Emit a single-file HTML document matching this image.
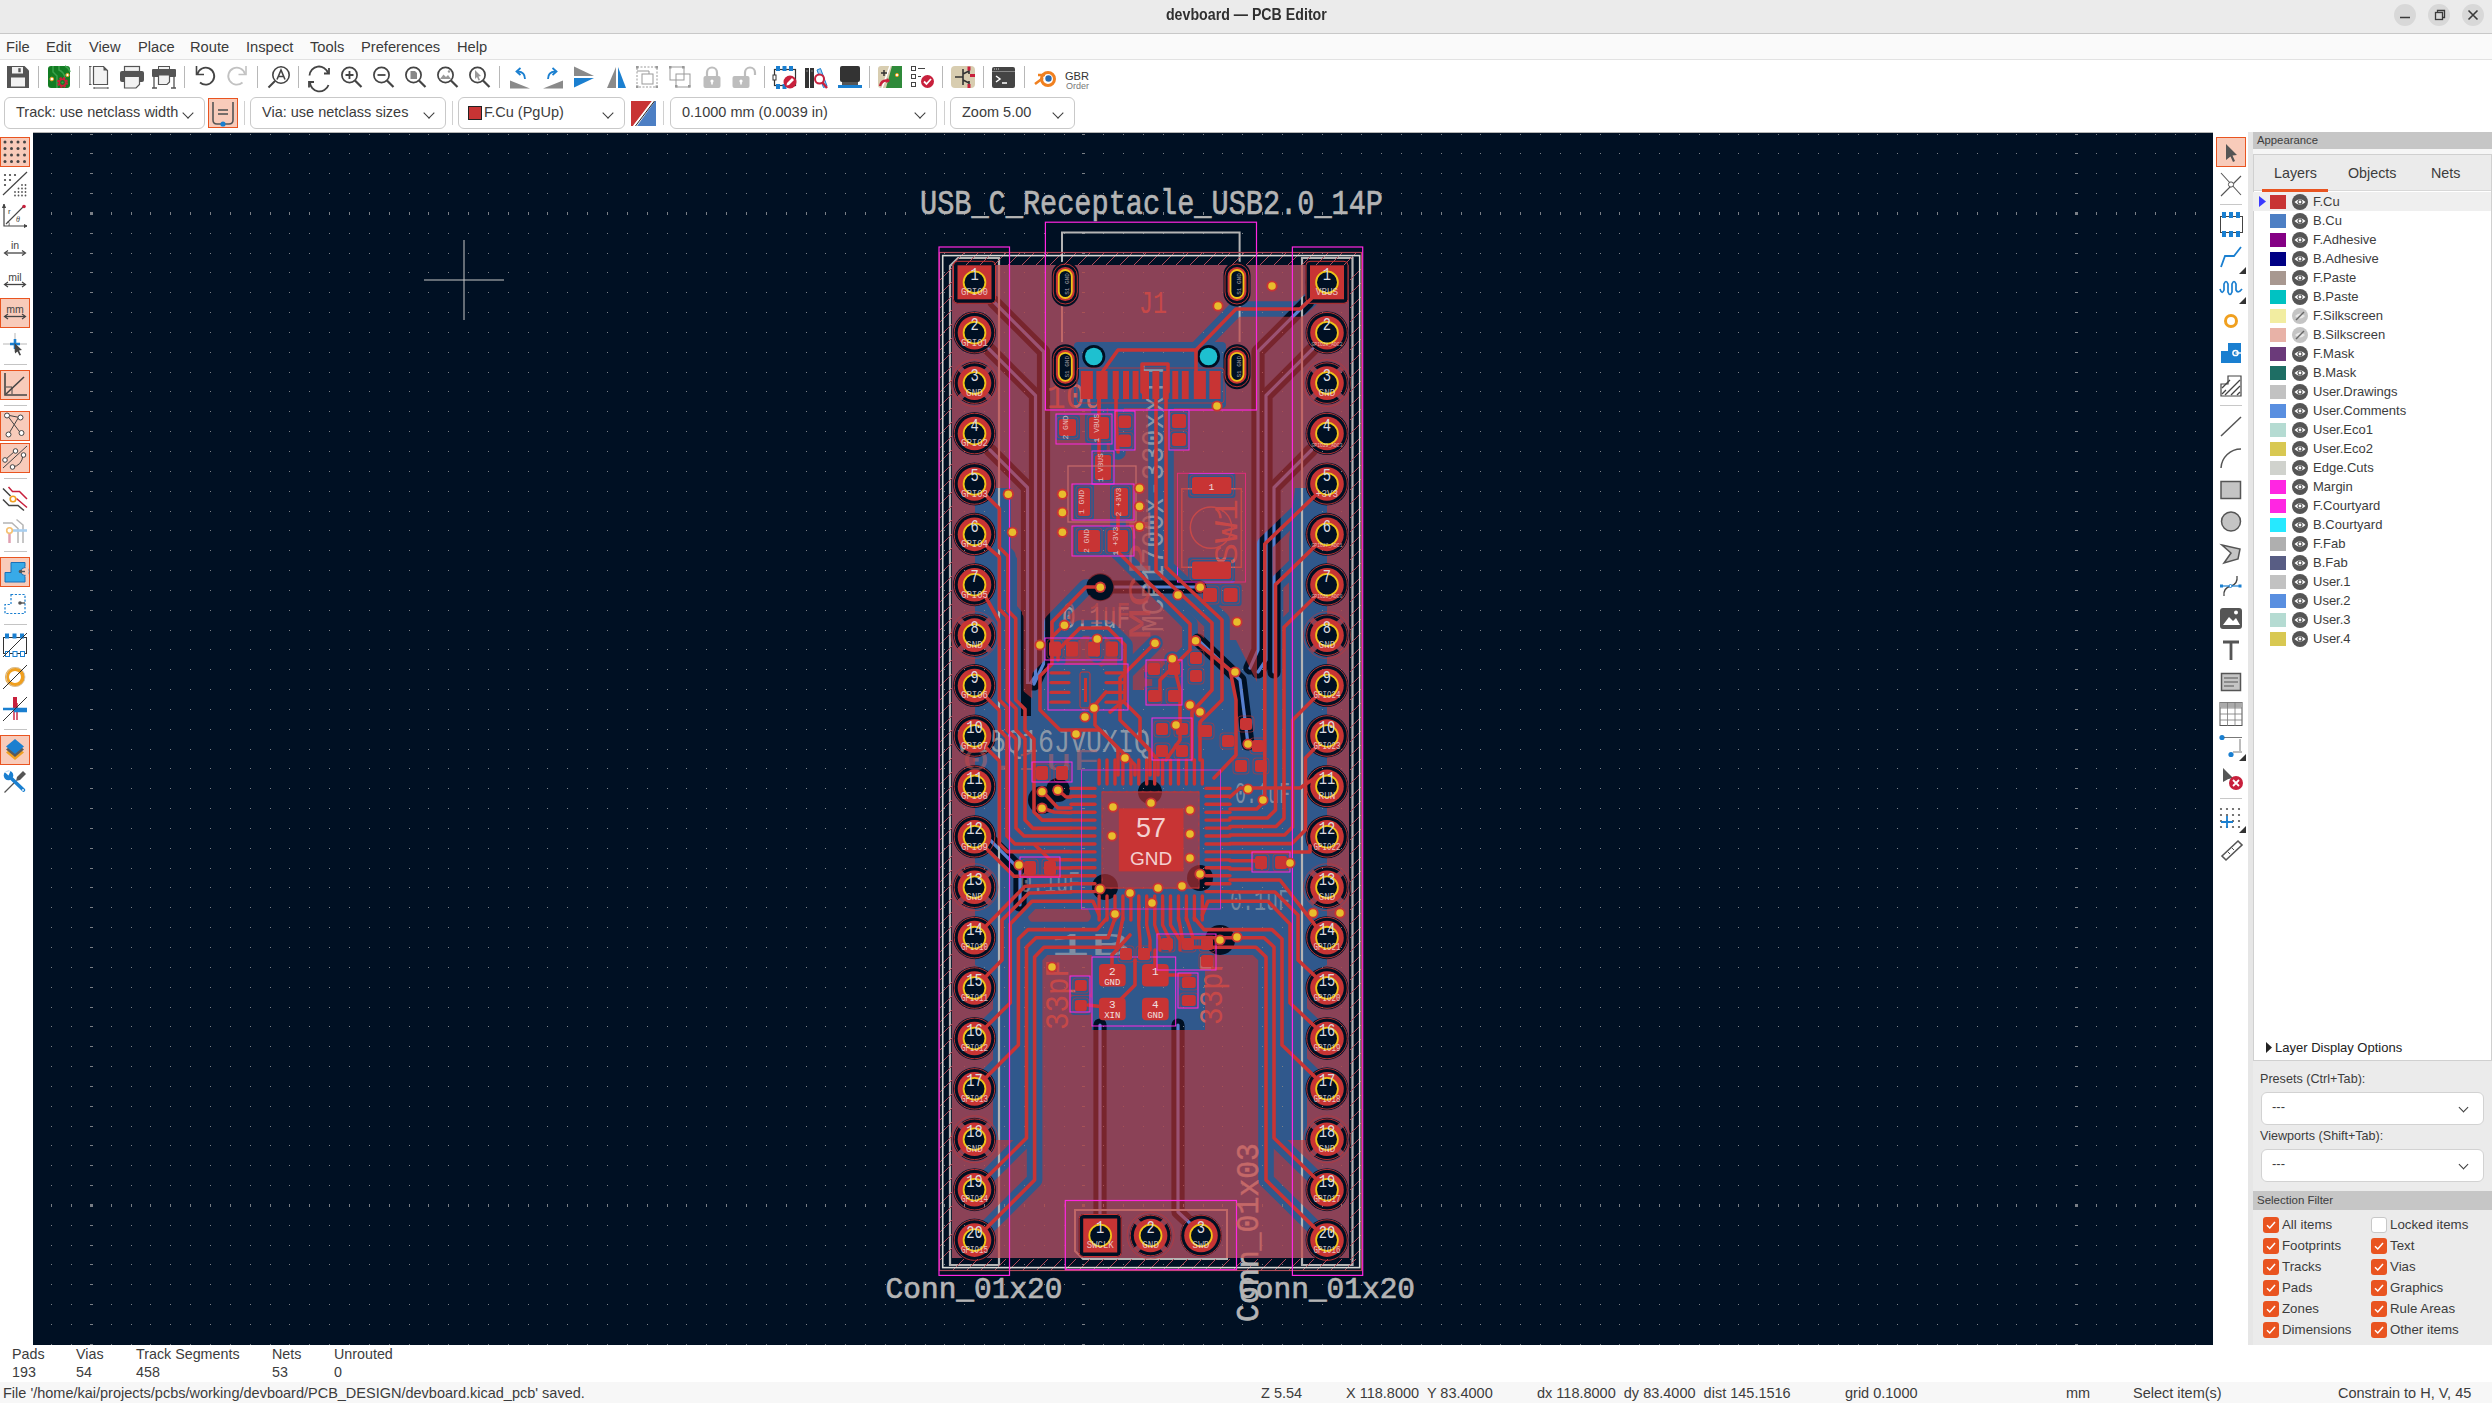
<!DOCTYPE html><html><head><meta charset="utf-8"><title>devboard — PCB Editor</title><style>
*{box-sizing:border-box;margin:0;padding:0}
html,body{width:2492px;height:1403px;overflow:hidden;background:#fff;font-family:"Liberation Sans",sans-serif;color:#3c3c3c}
.abs{position:absolute}
#title{left:0;top:0;width:2492px;height:34px;background:#ebebeb;border-bottom:1px solid #c8c8c8}
#title .t{left:0;width:2492px;top:6px;text-align:center;font-weight:bold;font-size:15.6px;color:#303030}
.wbtn{width:22px;height:22px;border-radius:50%;background:#d8d8d8;top:4px}
#menu{left:0;top:34px;width:2492px;height:26px;background:#fafafa;border-bottom:1px solid #e2e2e2}
#menu span{position:absolute;top:5px;font-size:14.7px;color:#3a3a3a}
#tb1{left:0;top:60px;width:2492px;height:36px;background:#fff}
#tb2{left:0;top:96px;width:2492px;height:36px;background:#fff}
.dd{position:absolute;top:97px;height:32px;border:1px solid #c9c9c9;border-radius:6px;background:#fff;font-size:14.5px;color:#3c3c3c}
.dd .tx{position:absolute;top:6px;white-space:pre}
.chev{position:absolute;top:11px;width:8px;height:8px;border-right:1.6px solid #3c3c3c;border-bottom:1.6px solid #3c3c3c;transform:rotate(45deg)}
.sep{position:absolute;width:1px;background:#d0d0d0}
.tbactive{position:absolute;background:#f8cbba;border:1px solid #e95420}
#canvas{left:33px;top:132px;width:2180px;height:1213px;background:#001023;overflow:hidden}
#ltb{left:0;top:132px;width:33px;height:1213px;background:#fff}
#rtb{left:2213px;top:132px;width:35px;height:1213px;background:#fff}
#sash{left:2248px;top:132px;width:5px;height:1213px;background:#e6e6e6}
#app{left:2253px;top:132px;width:239px;height:1213px;background:#ebebeb}
.hdr{position:absolute;left:0;width:239px;height:17px;background:#c6c6c6;font-size:11.3px;color:#3c3c3c;padding-left:4px;padding-top:2px}
.lrow{position:absolute;left:0;width:238px;height:19px;font-size:13px;color:#3c3c3c}
.lrow .sw{position:absolute;left:17px;top:3px;width:16px;height:14px}
.lrow .eye{position:absolute;left:39px;top:2px;width:16px;height:16px}
.lrow .lb{position:absolute;left:60px;top:2px;white-space:pre}
.cb{position:absolute;width:16px;height:16px;border-radius:3px;background:#e95420}
.cbl{position:absolute;font-size:13.3px;color:#3c3c3c;white-space:pre}
#msg{left:0;top:1345px;width:2492px;height:37px;background:#fff}
#msg span{position:absolute;font-size:14.3px;color:#3c3c3c;white-space:pre}
#status{left:0;top:1382px;width:2492px;height:21px;background:#f7f7f7}
#status span{position:absolute;top:3px;font-size:14.5px;color:#3c3c3c;white-space:pre}
</style></head><body><div id="title" class="abs"><div class="t abs"><span style="display:inline-block;transform:scaleX(0.91)">devboard — PCB Editor</span></div><div class="wbtn abs" style="left:2394px"></div><div class="wbtn abs" style="left:2428px"></div><div class="wbtn abs" style="left:2462px"></div><svg class="abs" style="left:0;top:0" width="2492" height="33"><line x1="2400" y1="17.5" x2="2410" y2="17.5" stroke="#3a3a3a" stroke-width="1.5"/><rect x="2435.5" y="12.5" width="7" height="7" fill="none" stroke="#3a3a3a" stroke-width="1.3"/><path d="M2437.5 12.5 V10.5 H2444.5 V17.5 H2442.5" fill="none" stroke="#3a3a3a" stroke-width="1.3"/><path d="M2468.5 10.5 L2477.5 19.5 M2477.5 10.5 L2468.5 19.5" stroke="#3a3a3a" stroke-width="1.6"/></svg></div><div id="menu" class="abs"><span style="left:6px">File</span><span style="left:46px">Edit</span><span style="left:89px">View</span><span style="left:138px">Place</span><span style="left:190px">Route</span><span style="left:246px">Inspect</span><span style="left:310px">Tools</span><span style="left:361px">Preferences</span><span style="left:457px">Help</span></div><div id="tb1" class="abs"></div><svg class="abs" style="left:0;top:60px" width="1100" height="36"><g transform="translate(7 6) scale(1.0)"><path d="M0 0 H17.5 L22 4.5 V22 H0 Z" fill="#545454"/><rect x="5" y="1" width="11" height="6.5" fill="#f2f2f2"/><rect x="11.3" y="2.2" width="2.4" height="4" fill="#545454"/><rect x="4" y="11.5" width="14" height="9" fill="#f2f2f2"/></g><line x1="38.5" y1="6" x2="38.5" y2="28" stroke="#b8b8b8" stroke-width="1"/><g transform="translate(48 6) scale(1.0)"><rect x="0" y="0" width="22" height="22" rx="3" fill="#127c22"/><path d="M5 0 V6 L9 10 V22 M11 0 V4 Q16 6 17 12 M17 0 Q21 2 22 6" fill="none" stroke="#3aa04a" stroke-width="1.5"/><circle cx="3.8" cy="13" r="1.8" fill="#fff" stroke="#f0a020" stroke-width="1"/><circle cx="19.5" cy="9" r="1.6" fill="#fff" stroke="#f0a020" stroke-width="1"/><circle cx="14.5" cy="16.5" r="4.2" fill="none" stroke="#cc1f3c" stroke-width="2.6" stroke-dasharray="2 1.3"/><circle cx="14.5" cy="16.5" r="3.2" fill="none" stroke="#cc1f3c" stroke-width="1.6"/><circle cx="14.5" cy="16.5" r="1.1" fill="#3aa04a"/></g><line x1="79.5" y1="6" x2="79.5" y2="28" stroke="#b8b8b8" stroke-width="1"/><g transform="translate(89 6) scale(1.0)"><path d="M4.5 0.5 H14.5 L18.5 4.5 V18.5 H4.5 Z" fill="#f2f2f2" stroke="#545454" stroke-width="1.2"/><path d="M14.5 0.5 V4.5 H18.5" fill="#545454"/><path d="M1 0 V19 M0 0.5 H2.5 M0 18.5 H2.5 M5 22 H19 M5 21 V23 M19 21 V23" stroke="#545454" stroke-width="1"/></g><g transform="translate(120 6) scale(1.0)"><rect x="4.5" y="0.5" width="15" height="5" fill="#f2f2f2" stroke="#545454" stroke-width="1.2"/><rect x="0" y="5" width="24" height="11" rx="2" fill="#545454"/><path d="M4.5 10.5 H19.5 V18.5 L16 22 H4.5 Z" fill="#f2f2f2" stroke="#545454" stroke-width="1.2"/></g><g transform="translate(152 6) scale(1.0)"><rect x="6.5" y="0.5" width="11" height="3" fill="#f2f2f2" stroke="#545454" stroke-width="1"/><rect x="0" y="3" width="24" height="8" rx="1" fill="#545454"/><path d="M6.5 9 H17.5 V16 L15 18.5 H6.5 Z" fill="#f2f2f2" stroke="#545454" stroke-width="1.2"/><path d="M2 11 V22 M22 11 V22 M0 22 H5 M19 22 H24" stroke="#545454" stroke-width="1.3"/></g><line x1="184.5" y1="6" x2="184.5" y2="28" stroke="#b8b8b8" stroke-width="1"/><g transform="translate(195 5) scale(1.0)"><path d="M2.5 9 A8.5 8.5 0 1 1 5 17.5" fill="none" stroke="#444" stroke-width="1.8"/><path d="M1.5 1 V9.5 H9" fill="none" stroke="#444" stroke-width="1.6"/></g><g transform="translate(228 5) scale(1.0)"><path d="M17 9 A8.5 8.5 0 1 0 14.5 17.5" fill="none" stroke="#c2c2c2" stroke-width="1.8"/><path d="M18 1 V9.5 H10.5" fill="none" stroke="#c2c2c2" stroke-width="1.6"/></g><line x1="257.5" y1="6" x2="257.5" y2="28" stroke="#b8b8b8" stroke-width="1"/><g transform="translate(267 6) scale(1.0)"><circle cx="14" cy="9" r="8.2" fill="none" stroke="#444" stroke-width="1.6"/><path d="M10 13.5 L14 4 L18 13.5 M11.5 10.5 H16.5" fill="none" stroke="#444" stroke-width="1.6"/><line x1="8" y1="15" x2="1.5" y2="21.5" stroke="#444" stroke-width="2"/></g><line x1="298.5" y1="6" x2="298.5" y2="28" stroke="#b8b8b8" stroke-width="1"/><g transform="translate(308 6) scale(1.0)"><path d="M1.5 9.5 A9.5 9.5 0 0 1 20 7" fill="none" stroke="#444" stroke-width="1.8"/><path d="M20.5 19 A9.5 9.5 0 0 1 2 16" fill="none" stroke="#444" stroke-width="1.8"/><path d="M16 7.5 H21 V2" fill="none" stroke="#444" stroke-width="1.8"/><path d="M6 16 H1 V21.5" fill="none" stroke="#444" stroke-width="1.8"/></g><g transform="translate(340 6) scale(1.0)"><circle cx="9.5" cy="9" r="7.6" fill="none" stroke="#444" stroke-width="1.7"/><line x1="15" y1="14.5" x2="21.5" y2="21" stroke="#444" stroke-width="2.2"/><path d="M9.5 5 V13 M5.5 9 H13.5" stroke="#444" stroke-width="1.8"/></g><g transform="translate(372 6) scale(1.0)"><circle cx="9.5" cy="9" r="7.6" fill="none" stroke="#444" stroke-width="1.7"/><line x1="15" y1="14.5" x2="21.5" y2="21" stroke="#444" stroke-width="2.2"/><path d="M5.5 9 H13.5" stroke="#444" stroke-width="1.8"/></g><g transform="translate(404 6) scale(1.0)"><circle cx="9.5" cy="9" r="7.6" fill="none" stroke="#444" stroke-width="1.7"/><line x1="15" y1="14.5" x2="21.5" y2="21" stroke="#444" stroke-width="2.2"/><path d="M6.5 5 H11 L13 7 V13 H6.5 Z" fill="#888"/></g><g transform="translate(436 6) scale(1.0)"><circle cx="9.5" cy="9" r="7.6" fill="none" stroke="#444" stroke-width="1.7"/><line x1="15" y1="14.5" x2="21.5" y2="21" stroke="#444" stroke-width="2.2"/><path d="M4 13 L7.5 8.5 L10 11 L12 9 L15 13 Z" fill="#999"/><circle cx="13" cy="5.5" r="1.2" fill="#999"/></g><g transform="translate(468 6) scale(1.0)"><circle cx="9.5" cy="9" r="7.6" fill="none" stroke="#444" stroke-width="1.7"/><line x1="15" y1="14.5" x2="21.5" y2="21" stroke="#444" stroke-width="2.2"/><path d="M7 4 L13 10 L10.5 10.5 L12 14 L10.5 14.5 L9 11 L7 13 Z" fill="#999"/></g><line x1="499.5" y1="6" x2="499.5" y2="28" stroke="#b8b8b8" stroke-width="1"/><g transform="translate(510 6) scale(1.0)"><path d="M0 14.5 V22.5 H20 Z" fill="#8a8a8a"/><path d="M15 13 Q15 6 8 5.5" fill="none" stroke="#1a7fd0" stroke-width="1.8"/><path d="M10.5 2 L6.5 5.5 L10.5 9" fill="none" stroke="#1a7fd0" stroke-width="1.8"/></g><g transform="translate(543 6) scale(1.0)"><path d="M20 14.5 V22.5 H0 Z" fill="#8a8a8a"/><path d="M5 13 Q5 6 12 5.5" fill="none" stroke="#1a7fd0" stroke-width="1.8"/><path d="M9.5 2 L13.5 5.5 L9.5 9" fill="none" stroke="#1a7fd0" stroke-width="1.8"/></g><g transform="translate(574 6) scale(1.0)"><path d="M0 0.5 V10 H20 Z" fill="#8a8a8a"/><path d="M0 12 H20 L0 21.5 Z" fill="#1a7fd0"/></g><g transform="translate(606 6) scale(1.0)"><path d="M10 1 V22 H1 Z" fill="#8a8a8a"/><path d="M12 1 L20 22 H12 Z" fill="#1a7fd0"/></g><g transform="translate(636 6) scale(1.0)"><rect x="1" y="1" width="20" height="20" fill="none" stroke="#999" stroke-width="1" stroke-dasharray="2 1.5"/><rect x="0" y="0" width="2.5" height="2.5" fill="#999"/><rect x="19.5" y="0" width="2.5" height="2.5" fill="#999"/><rect x="0" y="19.5" width="2.5" height="2.5" fill="#999"/><rect x="19.5" y="19.5" width="2.5" height="2.5" fill="#999"/><rect x="6" y="8" width="11" height="10" fill="none" stroke="#999" stroke-width="1"/><path d="M1 5 H13 V8" fill="none" stroke="#999" stroke-width="1"/></g><g transform="translate(669 6) scale(1.0)"><rect x="1" y="1" width="14" height="13" fill="none" stroke="#999" stroke-width="1"/><rect x="7" y="8" width="14" height="13" fill="none" stroke="#999" stroke-width="1"/><rect x="0" y="0" width="2.5" height="2.5" fill="#999"/><rect x="13" y="0" width="2.5" height="2.5" fill="#999"/><rect x="19" y="19" width="2.5" height="2.5" fill="#999"/><rect x="6" y="19" width="2.5" height="2.5" fill="#999"/></g><g transform="translate(703 6) scale(1.0)"><path d="M4 10 V6.5 A5 5 0 0 1 14 6.5 V10" fill="none" stroke="#bdbdbd" stroke-width="2.2"/><rect x="0.5" y="10" width="17" height="12" rx="2" fill="#bdbdbd"/><circle cx="9" cy="15" r="1.6" fill="#fff"/><rect x="8.2" y="15" width="1.6" height="3.5" fill="#fff"/></g><g transform="translate(732 6) scale(1.0)"><path d="M13 10 V6.5 A5 5 0 0 1 23 6.5 V9" fill="none" stroke="#bdbdbd" stroke-width="2.2"/><rect x="0.5" y="10" width="17" height="12" rx="2" fill="#bdbdbd"/><circle cx="9" cy="15" r="1.6" fill="#fff"/><rect x="8.2" y="15" width="1.6" height="3.5" fill="#fff"/></g><line x1="764.5" y1="6" x2="764.5" y2="28" stroke="#b8b8b8" stroke-width="1"/><g transform="translate(773 6) scale(1.0)"><rect x="1.5" y="3.5" width="21" height="16" fill="none" stroke="#333" stroke-width="1.2"/><rect x="3" y="0" width="4" height="5" fill="#1a7fd0"/><rect x="9.5" y="0" width="4" height="5" fill="#1a7fd0"/><rect x="16" y="0" width="4" height="5" fill="#1a7fd0"/><rect x="3" y="18" width="4" height="5" fill="#1a7fd0"/><rect x="9.5" y="18" width="4" height="5" fill="#1a7fd0"/><rect x="0" y="9" width="3" height="5" fill="#fff" stroke="#333" stroke-width="1"/><circle cx="17" cy="16" r="6.5" fill="#c8203c"/><path d="M13.5 19.5 L14 17 L19 12 L21 14 L16 19 Z" fill="#fff"/></g><g transform="translate(805 6) scale(1.0)"><rect x="0" y="2" width="4" height="20" fill="#333"/><rect x="5" y="2" width="4" height="20" fill="#333"/><path d="M12 4 L15.5 2.5 L22 20 L18.5 21.5 Z" fill="#9fd0f0" stroke="#1a7fd0" stroke-width="1"/><circle cx="14.5" cy="13" r="4.5" fill="#fff" stroke="#c8203c" stroke-width="2"/><line x1="17.5" y1="16.5" x2="22" y2="22" stroke="#c8203c" stroke-width="2.4"/><path d="M1 5 H3 M6 5 H8" stroke="#888" stroke-width="1"/></g><g transform="translate(838 6) scale(1.0)"><rect x="2" y="0" width="20" height="16" rx="2" fill="#333"/><rect x="4" y="16" width="16" height="3" fill="#555"/><rect x="0" y="19" width="24" height="3" fill="#1a7fd0"/></g><line x1="869.5" y1="6" x2="869.5" y2="28" stroke="#b8b8b8" stroke-width="1"/><g transform="translate(878 6) scale(1.0)"><rect x="0" y="0" width="24" height="22" rx="3" fill="#d8cdb0"/><path d="M14 0 L24 0 V22 H8 Z" fill="#2f8a3a"/><path d="M12 0 L4 22" stroke="#fff" stroke-width="1.5"/><path d="M6 4 V10 M3 7 H9" stroke="#333" stroke-width="1.5"/><circle cx="19" cy="9" r="1.6" fill="#fff" stroke="#f0a020"/><path d="M2 20 Q4 13 11 15" fill="none" stroke="#c8203c" stroke-width="2.4"/><path d="M9 12 L12 15 L8 17" fill="#c8203c"/></g><g transform="translate(911 6) scale(1.0)"><rect x="0.5" y="0.5" width="4" height="4" fill="none" stroke="#444"/><rect x="0.5" y="8.5" width="4" height="4" fill="none" stroke="#444"/><rect x="0.5" y="16.5" width="4" height="4" fill="none" stroke="#444"/><path d="M7 2.5 H14 M7 10.5 H10" stroke="#444" stroke-width="1.2"/><circle cx="16.5" cy="15.5" r="6.5" fill="#c8203c"/><path d="M13 15.5 L15.5 18 L20 13" fill="none" stroke="#fff" stroke-width="1.8"/></g><line x1="942.5" y1="6" x2="942.5" y2="28" stroke="#b8b8b8" stroke-width="1"/><g transform="translate(951 6) scale(1.0)"><rect x="0" y="0" width="24" height="22" rx="4" fill="#d8cdb0"/><path d="M12 3 V19 M12 8 L18 5 M12 14 L18 17 M4 11 H12 M18 2 V8 M18 15 V21" stroke="#333" stroke-width="1.6"/><rect x="16.5" y="0.5" width="3" height="4" fill="#c8203c"/><rect x="19" y="8" width="5" height="3" fill="#c8203c"/><rect x="16.5" y="18" width="3" height="4" fill="#c8203c"/></g><line x1="983.5" y1="6" x2="983.5" y2="28" stroke="#b8b8b8" stroke-width="1"/><g transform="translate(992 6) scale(1.0)"><rect x="0" y="1" width="23" height="21" rx="2" fill="#444"/><rect x="0" y="5" width="23" height="1" fill="#888"/><path d="M2 3 H7" stroke="#ccc" stroke-width="1" stroke-dasharray="1 1"/><path d="M4 10 L8 13 L4 16 M10 17 H15" fill="none" stroke="#fff" stroke-width="1.5"/></g><line x1="1024.5" y1="6" x2="1024.5" y2="28" stroke="#b8b8b8" stroke-width="1"/><g transform="translate(1034 6) scale(1.0)"><circle cx="14" cy="13" r="6.5" fill="none" stroke="#f08020" stroke-width="3"/><circle cx="14.5" cy="12.5" r="3.2" fill="#2a6ab0"/><path d="M1 18 L9 12 M4 9 H11" stroke="#f08020" stroke-width="2.6"/></g><text x="1065" y="19.8" font-family="Liberation Sans" font-size="11.2" fill="#333" textLength="24" lengthAdjust="spacingAndGlyphs">GBR</text><text x="1066" y="29" font-family="Liberation Sans" font-size="8.6" fill="#777" textLength="23" lengthAdjust="spacingAndGlyphs">Order</text></svg><div id="tb2" class="abs"></div><div class="dd" style="left:4px;width:201px"><span class="tx" style="left:11px">Track: use netclass width</span><span class="chev" style="left:179px"></span></div><div class="tbactive" style="left:208px;top:98px;width:30px;height:30px"></div><svg class="abs" style="left:208px;top:98px" width="30" height="30"><path d="M5 4 V22 Q5 26 9 26 H21 Q25 26 25 22 V4" fill="none" stroke="#555" stroke-width="1.6"/><line x1="10" y1="12" x2="20" y2="12" stroke="#555" stroke-width="1.6"/><line x1="10" y1="16" x2="20" y2="16" stroke="#555" stroke-width="1.6"/><circle cx="15" cy="26" r="2.6" fill="#1a7fd0"/></svg><div class="sep" style="left:244px;top:101px;height:24px"></div><div class="dd" style="left:250px;width:196px"><span class="tx" style="left:11px">Via: use netclass sizes</span><span class="chev" style="left:174px"></span></div><div class="sep" style="left:452px;top:101px;height:24px"></div><div class="dd" style="left:458px;width:167px"><span style="position:absolute;left:9px;top:8px;width:14px;height:14px;background:#c83434;border:1px solid #222"></span><span class="tx" style="left:25px">F.Cu (PgUp)</span><span class="chev" style="left:145px"></span></div><svg class="abs" style="left:631px;top:101px" width="25" height="25"><polygon points="0,0 22,0 2,25 0,25" fill="#c83434"/><polygon points="25,0 25,25 6,25 24,0" fill="#4d7fc4"/><line x1="22" y1="0" x2="3" y2="25" stroke="#fff" stroke-width="2"/><line x1="23.5" y1="0" x2="4.5" y2="25" stroke="#222" stroke-width="1"/></svg><div class="sep" style="left:663px;top:101px;height:24px"></div><div class="dd" style="left:670px;width:267px"><span class="tx" style="left:11px">0.1000 mm (0.0039 in)</span><span class="chev" style="left:245px"></span></div><div class="sep" style="left:944px;top:101px;height:24px"></div><div class="dd" style="left:950px;width:125px"><span class="tx" style="left:11px">Zoom 5.00</span><span class="chev" style="left:103px"></span></div><div id="canvas" class="abs"><svg width="2492" height="1403" style="position:absolute;left:-33px;top:-132px"><g id="grid" shape-rendering="crispEdges"><path d="M51.20 134.04H2213M51.20 153.88H2213M51.20 173.72H2213M51.20 193.56H2213M51.20 213.40H2213M51.20 233.24H2213M51.20 253.08H2213M51.20 272.92H2213M51.20 292.76H2213M51.20 312.60H2213M51.20 332.44H2213M51.20 352.28H2213M51.20 372.12H2213M51.20 391.96H2213M51.20 411.80H2213M51.20 431.64H2213M51.20 451.48H2213M51.20 471.32H2213M51.20 491.16H2213M51.20 511.00H2213M51.20 530.84H2213M51.20 550.68H2213M51.20 570.52H2213M51.20 590.36H2213M51.20 610.20H2213M51.20 630.04H2213M51.20 649.88H2213M51.20 669.72H2213M51.20 689.56H2213M51.20 709.40H2213M51.20 729.24H2213M51.20 749.08H2213M51.20 768.92H2213M51.20 788.76H2213M51.20 808.60H2213M51.20 828.44H2213M51.20 848.28H2213M51.20 868.12H2213M51.20 887.96H2213M51.20 907.80H2213M51.20 927.64H2213M51.20 947.48H2213M51.20 967.32H2213M51.20 987.16H2213M51.20 1007.00H2213M51.20 1026.84H2213M51.20 1046.68H2213M51.20 1066.52H2213M51.20 1086.36H2213M51.20 1106.20H2213M51.20 1126.04H2213M51.20 1145.88H2213M51.20 1165.72H2213M51.20 1185.56H2213M51.20 1205.40H2213M51.20 1225.24H2213M51.20 1245.08H2213M51.20 1264.92H2213M51.20 1284.76H2213M51.20 1304.60H2213M51.20 1324.44H2213M51.20 1344.28H2213" stroke="#7a7f86" stroke-width="1" stroke-dasharray="1 18.85" fill="none"/><path d="M89.90 134.04h3M89.90 153.88h3M89.90 173.72h3M89.90 193.56h3M89.90 213.40h3M89.90 233.24h3M89.90 253.08h3M89.90 272.92h3M89.90 292.76h3M89.90 312.60h3M89.90 332.44h3M89.90 352.28h3M89.90 372.12h3M89.90 391.96h3M89.90 411.80h3M89.90 431.64h3M89.90 451.48h3M89.90 471.32h3M89.90 491.16h3M89.90 511.00h3M89.90 530.84h3M89.90 550.68h3M89.90 570.52h3M89.90 590.36h3M89.90 610.20h3M89.90 630.04h3M89.90 649.88h3M89.90 669.72h3M89.90 689.56h3M89.90 709.40h3M89.90 729.24h3M89.90 749.08h3M89.90 768.92h3M89.90 788.76h3M89.90 808.60h3M89.90 828.44h3M89.90 848.28h3M89.90 868.12h3M89.90 887.96h3M89.90 907.80h3M89.90 927.64h3M89.90 947.48h3M89.90 967.32h3M89.90 987.16h3M89.90 1007.00h3M89.90 1026.84h3M89.90 1046.68h3M89.90 1066.52h3M89.90 1086.36h3M89.90 1106.20h3M89.90 1126.04h3M89.90 1145.88h3M89.90 1165.72h3M89.90 1185.56h3M89.90 1205.40h3M89.90 1225.24h3M89.90 1245.08h3M89.90 1264.92h3M89.90 1284.76h3M89.90 1304.60h3M89.90 1324.44h3M89.90 1344.28h3M1082.40 134.04h3M1082.40 153.88h3M1082.40 173.72h3M1082.40 193.56h3M1082.40 213.40h3M1082.40 233.24h3M1082.40 253.08h3M1082.40 272.92h3M1082.40 292.76h3M1082.40 312.60h3M1082.40 332.44h3M1082.40 352.28h3M1082.40 372.12h3M1082.40 391.96h3M1082.40 411.80h3M1082.40 431.64h3M1082.40 451.48h3M1082.40 471.32h3M1082.40 491.16h3M1082.40 511.00h3M1082.40 530.84h3M1082.40 550.68h3M1082.40 570.52h3M1082.40 590.36h3M1082.40 610.20h3M1082.40 630.04h3M1082.40 649.88h3M1082.40 669.72h3M1082.40 689.56h3M1082.40 709.40h3M1082.40 729.24h3M1082.40 749.08h3M1082.40 768.92h3M1082.40 788.76h3M1082.40 808.60h3M1082.40 828.44h3M1082.40 848.28h3M1082.40 868.12h3M1082.40 887.96h3M1082.40 907.80h3M1082.40 927.64h3M1082.40 947.48h3M1082.40 967.32h3M1082.40 987.16h3M1082.40 1007.00h3M1082.40 1026.84h3M1082.40 1046.68h3M1082.40 1066.52h3M1082.40 1086.36h3M1082.40 1106.20h3M1082.40 1126.04h3M1082.40 1145.88h3M1082.40 1165.72h3M1082.40 1185.56h3M1082.40 1205.40h3M1082.40 1225.24h3M1082.40 1245.08h3M1082.40 1264.92h3M1082.40 1284.76h3M1082.40 1304.60h3M1082.40 1324.44h3M1082.40 1344.28h3M2074.90 134.04h3M2074.90 153.88h3M2074.90 173.72h3M2074.90 193.56h3M2074.90 213.40h3M2074.90 233.24h3M2074.90 253.08h3M2074.90 272.92h3M2074.90 292.76h3M2074.90 312.60h3M2074.90 332.44h3M2074.90 352.28h3M2074.90 372.12h3M2074.90 391.96h3M2074.90 411.80h3M2074.90 431.64h3M2074.90 451.48h3M2074.90 471.32h3M2074.90 491.16h3M2074.90 511.00h3M2074.90 530.84h3M2074.90 550.68h3M2074.90 570.52h3M2074.90 590.36h3M2074.90 610.20h3M2074.90 630.04h3M2074.90 649.88h3M2074.90 669.72h3M2074.90 689.56h3M2074.90 709.40h3M2074.90 729.24h3M2074.90 749.08h3M2074.90 768.92h3M2074.90 788.76h3M2074.90 808.60h3M2074.90 828.44h3M2074.90 848.28h3M2074.90 868.12h3M2074.90 887.96h3M2074.90 907.80h3M2074.90 927.64h3M2074.90 947.48h3M2074.90 967.32h3M2074.90 987.16h3M2074.90 1007.00h3M2074.90 1026.84h3M2074.90 1046.68h3M2074.90 1066.52h3M2074.90 1086.36h3M2074.90 1106.20h3M2074.90 1126.04h3M2074.90 1145.88h3M2074.90 1165.72h3M2074.90 1185.56h3M2074.90 1205.40h3M2074.90 1225.24h3M2074.90 1245.08h3M2074.90 1264.92h3M2074.90 1284.76h3M2074.90 1304.60h3M2074.90 1324.44h3M2074.90 1344.28h3" stroke="#7a7f86" stroke-width="1" fill="none"/><path d="M51.70 211.90v3M51.70 1203.90v3M71.55 211.90v3M71.55 1203.90v3M91.40 211.90v3M91.40 1203.90v3M111.25 211.90v3M111.25 1203.90v3M131.10 211.90v3M131.10 1203.90v3M150.95 211.90v3M150.95 1203.90v3M170.80 211.90v3M170.80 1203.90v3M190.65 211.90v3M190.65 1203.90v3M210.50 211.90v3M210.50 1203.90v3M230.35 211.90v3M230.35 1203.90v3M250.20 211.90v3M250.20 1203.90v3M270.05 211.90v3M270.05 1203.90v3M289.90 211.90v3M289.90 1203.90v3M309.75 211.90v3M309.75 1203.90v3M329.60 211.90v3M329.60 1203.90v3M349.45 211.90v3M349.45 1203.90v3M369.30 211.90v3M369.30 1203.90v3M389.15 211.90v3M389.15 1203.90v3M409.00 211.90v3M409.00 1203.90v3M428.85 211.90v3M428.85 1203.90v3M448.70 211.90v3M448.70 1203.90v3M468.55 211.90v3M468.55 1203.90v3M488.40 211.90v3M488.40 1203.90v3M508.25 211.90v3M508.25 1203.90v3M528.10 211.90v3M528.10 1203.90v3M547.95 211.90v3M547.95 1203.90v3M567.80 211.90v3M567.80 1203.90v3M587.65 211.90v3M587.65 1203.90v3M607.50 211.90v3M607.50 1203.90v3M627.35 211.90v3M627.35 1203.90v3M647.20 211.90v3M647.20 1203.90v3M667.05 211.90v3M667.05 1203.90v3M686.90 211.90v3M686.90 1203.90v3M706.75 211.90v3M706.75 1203.90v3M726.60 211.90v3M726.60 1203.90v3M746.45 211.90v3M746.45 1203.90v3M766.30 211.90v3M766.30 1203.90v3M786.15 211.90v3M786.15 1203.90v3M806.00 211.90v3M806.00 1203.90v3M825.85 211.90v3M825.85 1203.90v3M845.70 211.90v3M845.70 1203.90v3M865.55 211.90v3M865.55 1203.90v3M885.40 211.90v3M885.40 1203.90v3M905.25 211.90v3M905.25 1203.90v3M925.10 211.90v3M925.10 1203.90v3M944.95 211.90v3M944.95 1203.90v3M964.80 211.90v3M964.80 1203.90v3M984.65 211.90v3M984.65 1203.90v3M1004.50 211.90v3M1004.50 1203.90v3M1024.35 211.90v3M1024.35 1203.90v3M1044.20 211.90v3M1044.20 1203.90v3M1064.05 211.90v3M1064.05 1203.90v3M1083.90 211.90v3M1083.90 1203.90v3M1103.75 211.90v3M1103.75 1203.90v3M1123.60 211.90v3M1123.60 1203.90v3M1143.45 211.90v3M1143.45 1203.90v3M1163.30 211.90v3M1163.30 1203.90v3M1183.15 211.90v3M1183.15 1203.90v3M1203.00 211.90v3M1203.00 1203.90v3M1222.85 211.90v3M1222.85 1203.90v3M1242.70 211.90v3M1242.70 1203.90v3M1262.55 211.90v3M1262.55 1203.90v3M1282.40 211.90v3M1282.40 1203.90v3M1302.25 211.90v3M1302.25 1203.90v3M1322.10 211.90v3M1322.10 1203.90v3M1341.95 211.90v3M1341.95 1203.90v3M1361.80 211.90v3M1361.80 1203.90v3M1381.65 211.90v3M1381.65 1203.90v3M1401.50 211.90v3M1401.50 1203.90v3M1421.35 211.90v3M1421.35 1203.90v3M1441.20 211.90v3M1441.20 1203.90v3M1461.05 211.90v3M1461.05 1203.90v3M1480.90 211.90v3M1480.90 1203.90v3M1500.75 211.90v3M1500.75 1203.90v3M1520.60 211.90v3M1520.60 1203.90v3M1540.45 211.90v3M1540.45 1203.90v3M1560.30 211.90v3M1560.30 1203.90v3M1580.15 211.90v3M1580.15 1203.90v3M1600.00 211.90v3M1600.00 1203.90v3M1619.85 211.90v3M1619.85 1203.90v3M1639.70 211.90v3M1639.70 1203.90v3M1659.55 211.90v3M1659.55 1203.90v3M1679.40 211.90v3M1679.40 1203.90v3M1699.25 211.90v3M1699.25 1203.90v3M1719.10 211.90v3M1719.10 1203.90v3M1738.95 211.90v3M1738.95 1203.90v3M1758.80 211.90v3M1758.80 1203.90v3M1778.65 211.90v3M1778.65 1203.90v3M1798.50 211.90v3M1798.50 1203.90v3M1818.35 211.90v3M1818.35 1203.90v3M1838.20 211.90v3M1838.20 1203.90v3M1858.05 211.90v3M1858.05 1203.90v3M1877.90 211.90v3M1877.90 1203.90v3M1897.75 211.90v3M1897.75 1203.90v3M1917.60 211.90v3M1917.60 1203.90v3M1937.45 211.90v3M1937.45 1203.90v3M1957.30 211.90v3M1957.30 1203.90v3M1977.15 211.90v3M1977.15 1203.90v3M1997.00 211.90v3M1997.00 1203.90v3M2016.85 211.90v3M2016.85 1203.90v3M2036.70 211.90v3M2036.70 1203.90v3M2056.55 211.90v3M2056.55 1203.90v3M2076.40 211.90v3M2076.40 1203.90v3M2096.25 211.90v3M2096.25 1203.90v3M2116.10 211.90v3M2116.10 1203.90v3M2135.95 211.90v3M2135.95 1203.90v3M2155.80 211.90v3M2155.80 1203.90v3M2175.65 211.90v3M2175.65 1203.90v3M2195.50 211.90v3M2195.50 1203.90v3" stroke="#7a7f86" stroke-width="1" fill="none"/><path d="M89.90 211.90h3v3h-3zM89.90 1203.90h3v3h-3zM1082.40 211.90h3v3h-3zM1082.40 1203.90h3v3h-3zM2074.90 211.90h3v3h-3zM2074.90 1203.90h3v3h-3z" fill="#7a7f86"/></g><path d="M952 265 H1349 V1258 H952 Z" fill="#30588c"/><path d="M994.0 302.0 L1043.5 351.5 L1043.5 664.0 L1034.0 684.0" stroke="#001023" stroke-width="13.2" fill="none" stroke-linejoin="round" stroke-linecap="round"/><path d="M989.0 349.0 L1035.5 395.5 L1035.5 676.0 L1030.0 684.0" stroke="#001023" stroke-width="13.2" fill="none" stroke-linejoin="round" stroke-linecap="round"/><path d="M990.0 450.0 L1027.5 487.5 L1027.5 684.0" stroke="#001023" stroke-width="13.2" fill="none" stroke-linejoin="round" stroke-linecap="round"/><path d="M1307.5 302.0 L1258.0 351.5 L1258.0 650.0 L1250.0 668.0" stroke="#001023" stroke-width="13.2" fill="none" stroke-linejoin="round" stroke-linecap="round"/><path d="M1312.5 349.0 L1266.0 395.5 L1266.0 660.0 L1258.0 672.0" stroke="#001023" stroke-width="13.2" fill="none" stroke-linejoin="round" stroke-linecap="round"/><path d="M1311.5 450.0 L1274.0 487.5 L1274.0 672.0" stroke="#001023" stroke-width="13.2" fill="none" stroke-linejoin="round" stroke-linecap="round"/><path d="M1100.0 1025.0 L1100.0 1218.0" stroke="#001023" stroke-width="13.2" fill="none" stroke-linejoin="round" stroke-linecap="round"/><path d="M1178.0 1025.0 L1178.0 1212.0 L1195.0 1228.0" stroke="#001023" stroke-width="13.2" fill="none" stroke-linejoin="round" stroke-linecap="round"/><path d="M1100.0 587.0 L1200.0 587.0" stroke="#001023" stroke-width="13.2" fill="none" stroke-linejoin="round" stroke-linecap="round"/><path d="M985.0 835.0 L1020.0 870.0 L1020.0 905.0" stroke="#001023" stroke-width="13.2" fill="none" stroke-linejoin="round" stroke-linecap="round"/><path d="M1198.0 640.0 L1240.0 680.0 L1248.0 744.0" stroke="#001023" stroke-width="13.2" fill="none" stroke-linejoin="round" stroke-linecap="round"/><circle cx="974.5" cy="282.3" r="21.5" fill="#001023"/><circle cx="1327.0" cy="282.3" r="21.5" fill="#001023"/><circle cx="974.5" cy="332.71000000000004" r="21.5" fill="#001023"/><circle cx="1327.0" cy="332.71000000000004" r="21.5" fill="#001023"/><circle cx="974.5" cy="383.12" r="21.5" fill="#001023"/><circle cx="1327.0" cy="383.12" r="21.5" fill="#001023"/><circle cx="974.5" cy="433.53" r="21.5" fill="#001023"/><circle cx="1327.0" cy="433.53" r="21.5" fill="#001023"/><circle cx="974.5" cy="483.94" r="21.5" fill="#001023"/><circle cx="1327.0" cy="483.94" r="21.5" fill="#001023"/><circle cx="974.5" cy="534.35" r="21.5" fill="#001023"/><circle cx="1327.0" cy="534.35" r="21.5" fill="#001023"/><circle cx="974.5" cy="584.76" r="21.5" fill="#001023"/><circle cx="1327.0" cy="584.76" r="21.5" fill="#001023"/><circle cx="974.5" cy="635.1700000000001" r="21.5" fill="#001023"/><circle cx="1327.0" cy="635.1700000000001" r="21.5" fill="#001023"/><circle cx="974.5" cy="685.5799999999999" r="21.5" fill="#001023"/><circle cx="1327.0" cy="685.5799999999999" r="21.5" fill="#001023"/><circle cx="974.5" cy="735.99" r="21.5" fill="#001023"/><circle cx="1327.0" cy="735.99" r="21.5" fill="#001023"/><circle cx="974.5" cy="786.4" r="21.5" fill="#001023"/><circle cx="1327.0" cy="786.4" r="21.5" fill="#001023"/><circle cx="974.5" cy="836.81" r="21.5" fill="#001023"/><circle cx="1327.0" cy="836.81" r="21.5" fill="#001023"/><circle cx="974.5" cy="887.22" r="21.5" fill="#001023"/><circle cx="1327.0" cy="887.22" r="21.5" fill="#001023"/><circle cx="974.5" cy="937.6299999999999" r="21.5" fill="#001023"/><circle cx="1327.0" cy="937.6299999999999" r="21.5" fill="#001023"/><circle cx="974.5" cy="988.04" r="21.5" fill="#001023"/><circle cx="1327.0" cy="988.04" r="21.5" fill="#001023"/><circle cx="974.5" cy="1038.45" r="21.5" fill="#001023"/><circle cx="1327.0" cy="1038.45" r="21.5" fill="#001023"/><circle cx="974.5" cy="1088.86" r="21.5" fill="#001023"/><circle cx="1327.0" cy="1088.86" r="21.5" fill="#001023"/><circle cx="974.5" cy="1139.27" r="21.5" fill="#001023"/><circle cx="1327.0" cy="1139.27" r="21.5" fill="#001023"/><circle cx="974.5" cy="1189.6799999999998" r="21.5" fill="#001023"/><circle cx="1327.0" cy="1189.6799999999998" r="21.5" fill="#001023"/><circle cx="974.5" cy="1240.09" r="21.5" fill="#001023"/><circle cx="1327.0" cy="1240.09" r="21.5" fill="#001023"/><circle cx="1100.2" cy="1235.5" r="21" fill="#001023"/><circle cx="1150.6000000000001" cy="1235.5" r="21" fill="#001023"/><circle cx="1201.0" cy="1235.5" r="21" fill="#001023"/><path d="M958.5 367.12 L990.5 399.12 M990.5 367.12 L958.5 399.12" stroke="#30588c" stroke-width="5.5"/><path d="M1311.0 367.12 L1343.0 399.12 M1343.0 367.12 L1311.0 399.12" stroke="#30588c" stroke-width="5.5"/><path d="M958.5 619.1700000000001 L990.5 651.1700000000001 M990.5 619.1700000000001 L958.5 651.1700000000001" stroke="#30588c" stroke-width="5.5"/><path d="M1311.0 619.1700000000001 L1343.0 651.1700000000001 M1343.0 619.1700000000001 L1311.0 651.1700000000001" stroke="#30588c" stroke-width="5.5"/><path d="M958.5 871.22 L990.5 903.22 M990.5 871.22 L958.5 903.22" stroke="#30588c" stroke-width="5.5"/><path d="M1311.0 871.22 L1343.0 903.22 M1343.0 871.22 L1311.0 903.22" stroke="#30588c" stroke-width="5.5"/><path d="M958.5 1123.27 L990.5 1155.27 M990.5 1123.27 L958.5 1155.27" stroke="#30588c" stroke-width="5.5"/><path d="M1311.0 1123.27 L1343.0 1155.27 M1343.0 1123.27 L1311.0 1155.27" stroke="#30588c" stroke-width="5.5"/><path d="M1134.6 1219.5 L1166.6 1251.5 M1166.6 1219.5 L1134.6 1251.5" stroke="#30588c" stroke-width="5.5"/><path d="M994.0 302.0 L1043.5 351.5 L1043.5 664.0 L1034.0 684.0" stroke="#577fcf" stroke-width="3.2" fill="none" stroke-linejoin="round" stroke-linecap="round"/><path d="M989.0 349.0 L1035.5 395.5 L1035.5 676.0 L1030.0 684.0" stroke="#577fcf" stroke-width="3.2" fill="none" stroke-linejoin="round" stroke-linecap="round"/><path d="M990.0 450.0 L1027.5 487.5 L1027.5 684.0" stroke="#577fcf" stroke-width="3.2" fill="none" stroke-linejoin="round" stroke-linecap="round"/><path d="M1307.5 302.0 L1258.0 351.5 L1258.0 650.0 L1250.0 668.0" stroke="#577fcf" stroke-width="3.2" fill="none" stroke-linejoin="round" stroke-linecap="round"/><path d="M1312.5 349.0 L1266.0 395.5 L1266.0 660.0 L1258.0 672.0" stroke="#577fcf" stroke-width="3.2" fill="none" stroke-linejoin="round" stroke-linecap="round"/><path d="M1311.5 450.0 L1274.0 487.5 L1274.0 672.0" stroke="#577fcf" stroke-width="3.2" fill="none" stroke-linejoin="round" stroke-linecap="round"/><path d="M1100.0 1025.0 L1100.0 1218.0" stroke="#577fcf" stroke-width="3.2" fill="none" stroke-linejoin="round" stroke-linecap="round"/><path d="M1178.0 1025.0 L1178.0 1212.0 L1195.0 1228.0" stroke="#577fcf" stroke-width="3.2" fill="none" stroke-linejoin="round" stroke-linecap="round"/><path d="M1100.0 587.0 L1200.0 587.0" stroke="#577fcf" stroke-width="3.2" fill="none" stroke-linejoin="round" stroke-linecap="round"/><path d="M985.0 835.0 L1020.0 870.0 L1020.0 905.0" stroke="#577fcf" stroke-width="3.2" fill="none" stroke-linejoin="round" stroke-linecap="round"/><path d="M1198.0 640.0 L1240.0 680.0 L1248.0 744.0" stroke="#577fcf" stroke-width="3.2" fill="none" stroke-linejoin="round" stroke-linecap="round"/><circle cx="1042" cy="800" r="14" fill="#001023"/><circle cx="1058" cy="790" r="12" fill="#001023"/><circle cx="1105" cy="887" r="13" fill="#001023"/><circle cx="1200" cy="878" r="13" fill="#001023"/><circle cx="1150" cy="792" r="12" fill="#001023"/><circle cx="1220" cy="940" r="15" fill="#001023"/><circle cx="1100.3" cy="587.2" r="14" fill="#001023"/><path d="M1021.0 684.0 L1031.0 684.0 L1031.0 716.0 L1021.0 716.0Z" fill="#001023"/><defs><clipPath id="brd"><rect x="952" y="265" width="397" height="993"/></clipPath></defs><use href="#grid" clip-path="url(#brd)"/><defs><mask id="fz" maskUnits="userSpaceOnUse" x="900" y="200" width="520" height="1120"><rect x="900" y="200" width="520" height="1120" fill="#fff"/><path d="M975.0 500.0 L990.0 488.0 L1011.0 488.0 L1011.0 552.0 L1017.0 558.0 L1017.0 606.0 L1022.0 612.0 L1022.0 690.0 L1034.0 700.0 L1047.0 686.0 L1047.0 624.0 L1080.0 596.0 L1090.0 596.0 L1090.0 580.0 L1110.0 580.0 L1110.0 596.0 L1060.0 640.0 L1060.0 665.0 L1100.0 665.0 L1125.0 690.0 L1160.0 690.0 L1186.0 665.0 L1215.0 640.0 L1236.0 640.0 L1261.0 690.0 L1289.0 684.0 L1289.0 540.0 L1295.0 488.0 L1312.0 488.0 L1327.0 500.0 L1327.0 965.0 L1307.0 975.0 L1307.0 1140.0 L1261.0 1140.0 L1261.0 960.0 L1205.0 960.0 L1205.0 1030.0 L1092.0 1030.0 L1092.0 955.0 L1042.0 955.0 L1042.0 1140.0 L993.0 1140.0 L993.0 975.0 L975.0 965.0Z" fill="#000"/><rect x="1074.0" y="342.0" width="152.0" height="66.0" rx="4" fill="#000" /><rect x="1055.0" y="415.0" width="25.0" height="25.0" rx="3" fill="#000" /><rect x="1085.0" y="413.0" width="28.0" height="30.0" rx="3" fill="#000" /><rect x="1114.5" y="411.6" width="20.5" height="20.5" rx="3" fill="#000" /><rect x="1114.5" y="430.5" width="20.5" height="20.5" rx="3" fill="#000" /><rect x="1168.0" y="410.0" width="22.0" height="22.0" rx="3" fill="#000" /><rect x="1168.0" y="429.0" width="22.0" height="21.0" rx="3" fill="#000" /><rect x="1091.0" y="451.0" width="24.0" height="33.0" rx="3" fill="#000" /><rect x="1074.0" y="484.0" width="20.0" height="36.0" rx="3" fill="#000" /><rect x="1110.0" y="484.0" width="22.0" height="36.0" rx="3" fill="#000" /><rect x="1074.0" y="526.0" width="30.0" height="30.0" rx="3" fill="#000" /><rect x="1103.5" y="526.0" width="28.5" height="30.0" rx="3" fill="#000" /><rect x="1188.0" y="473.0" width="47.4" height="25.0" rx="3" fill="#000" /><rect x="1188.0" y="557.5" width="47.0" height="25.5" rx="3" fill="#000" /><rect x="1199.0" y="584.0" width="22.0" height="22.0" rx="3" fill="#000" /><rect x="1219.6" y="584.0" width="22.0" height="22.0" rx="3" fill="#000" /><rect x="1045.0" y="637.5" width="20.0" height="23.0" rx="3" fill="#000" /><rect x="1062.0" y="637.5" width="20.0" height="23.0" rx="3" fill="#000" /><rect x="1084.0" y="637.5" width="20.0" height="23.0" rx="3" fill="#000" /><rect x="1102.0" y="637.5" width="20.0" height="23.0" rx="3" fill="#000" /><rect x="1144.0" y="659.0" width="20.0" height="20.0" rx="3" fill="#000" /><rect x="1164.0" y="659.0" width="20.0" height="20.0" rx="3" fill="#000" /><rect x="1144.0" y="686.0" width="20.0" height="20.0" rx="3" fill="#000" /><rect x="1164.0" y="686.0" width="20.0" height="20.0" rx="3" fill="#000" /><rect x="1186.0" y="648.0" width="20.0" height="20.0" rx="3" fill="#000" /><rect x="1186.0" y="666.0" width="20.0" height="20.0" rx="3" fill="#000" /><rect x="1152.0" y="719.0" width="20.0" height="20.0" rx="3" fill="#000" /><rect x="1172.0" y="719.0" width="20.0" height="20.0" rx="3" fill="#000" /><rect x="1152.0" y="741.0" width="20.0" height="20.0" rx="3" fill="#000" /><rect x="1172.0" y="741.0" width="20.0" height="20.0" rx="3" fill="#000" /><rect x="1196.0" y="721.0" width="20.0" height="20.0" rx="3" fill="#000" /><rect x="1218.0" y="731.0" width="20.0" height="20.0" rx="3" fill="#000" /><rect x="1236.0" y="714.0" width="20.0" height="20.0" rx="3" fill="#000" /><rect x="1248.0" y="736.0" width="20.0" height="20.0" rx="3" fill="#000" /><rect x="1231.0" y="756.0" width="20.0" height="20.0" rx="3" fill="#000" /><rect x="1251.0" y="756.0" width="20.0" height="20.0" rx="3" fill="#000" /><rect x="1032.0" y="762.0" width="20.0" height="22.0" rx="3" fill="#000" /><rect x="1052.0" y="762.0" width="20.0" height="22.0" rx="3" fill="#000" /><rect x="1020.0" y="857.0" width="20.0" height="22.0" rx="3" fill="#000" /><rect x="1040.0" y="857.0" width="20.0" height="22.0" rx="3" fill="#000" /><rect x="1251.0" y="852.0" width="20.0" height="21.0" rx="3" fill="#000" /><rect x="1271.0" y="852.0" width="20.0" height="21.0" rx="3" fill="#000" /><rect x="1070.8" y="976.0" width="20.0" height="19.0" rx="3" fill="#000" /><rect x="1070.8" y="996.0" width="20.0" height="19.0" rx="3" fill="#000" /><rect x="1177.8" y="973.0" width="22.0" height="19.0" rx="3" fill="#000" /><rect x="1177.8" y="991.0" width="22.0" height="19.0" rx="3" fill="#000" /><rect x="1157.0" y="934.0" width="20.0" height="20.0" rx="3" fill="#000" /><rect x="1178.0" y="934.0" width="20.0" height="20.0" rx="3" fill="#000" /><rect x="1197.0" y="934.0" width="20.0" height="20.0" rx="3" fill="#000" /><rect x="1197.0" y="951.0" width="20.0" height="20.0" rx="3" fill="#000" /><rect x="1116.0" y="944.0" width="20.0" height="20.0" rx="3" fill="#000" /><rect x="1134.0" y="944.0" width="20.0" height="20.0" rx="3" fill="#000" /><rect x="1028.0" y="907.0" width="63.0" height="16.0" rx="7" fill="#fff" /><path d="M1099.0 786.0 L1203.0 786.0 L1203.0 893.0 L1099.0 893.0Z" fill="#fff"/><path d="M1052.0 590.0 L1090.0 590.0 L1112.0 600.0 L1145.0 600.0 L1186.0 625.0 L1186.0 650.0 L1160.0 672.0 L1110.0 672.0 L1090.0 660.0 L1060.0 660.0Z" fill="#fff"/><path d="M1211.0 925.0 L1261.0 925.0 L1261.0 1000.0 L1211.0 1000.0Z" fill="#fff"/><path d="M1311.0 299.0 L1300.0 309.0 L1236.0 309.0 L1196.0 350.0 L1118.0 350.0 L1103.0 371.0" stroke="#000" stroke-width="15.6" fill="none" stroke-linejoin="round" stroke-linecap="round"/><path d="M1196.0 350.0 L1196.0 372.0" stroke="#000" stroke-width="15.6" fill="none" stroke-linejoin="round" stroke-linecap="round"/><path d="M1099.0 399.0 L1099.0 470.0" stroke="#000" stroke-width="15.6" fill="none" stroke-linejoin="round" stroke-linecap="round"/><path d="M1116.0 399.0 L1116.0 420.0 L1118.0 452.0" stroke="#000" stroke-width="15.6" fill="none" stroke-linejoin="round" stroke-linecap="round"/><path d="M1156.0 399.0 L1156.0 571.0 L1212.0 623.0 L1212.0 690.0 L1192.0 712.0 L1192.0 760.0" stroke="#000" stroke-width="15.6" fill="none" stroke-linejoin="round" stroke-linecap="round"/><path d="M1166.0 399.0 L1166.0 567.0 L1222.0 620.0 L1222.0 700.0 L1200.0 722.0 L1200.0 760.0" stroke="#000" stroke-width="15.6" fill="none" stroke-linejoin="round" stroke-linecap="round"/><path d="M1142.0 392.0 L1142.0 364.0 L1168.0 364.0 L1168.0 392.0" stroke="#000" stroke-width="15.6" fill="none" stroke-linejoin="round" stroke-linecap="round"/><path d="M1118.0 552.0 L1190.0 624.0 L1190.0 650.0 L1160.0 680.0 L1160.0 700.0" stroke="#000" stroke-width="15.6" fill="none" stroke-linejoin="round" stroke-linecap="round"/><path d="M1118.0 500.0 L1118.0 552.0" stroke="#000" stroke-width="15.6" fill="none" stroke-linejoin="round" stroke-linecap="round"/><path d="M1100.0 587.0 L1086.0 587.0 L1052.0 622.0 L1052.0 664.0 L1040.0 676.0 L1040.0 710.0 L1060.0 730.0 L1100.0 730.0 L1135.0 765.0 L1135.0 775.0" stroke="#000" stroke-width="15.6" fill="none" stroke-linejoin="round" stroke-linecap="round"/><path d="M1064.0 625.0 L1052.0 637.0" stroke="#000" stroke-width="15.6" fill="none" stroke-linejoin="round" stroke-linecap="round"/><path d="M1058.0 660.0 L1058.0 650.0 L1080.0 628.0 L1108.0 628.0 L1125.0 645.0 L1125.0 700.0 L1110.0 712.0" stroke="#000" stroke-width="15.6" fill="none" stroke-linejoin="round" stroke-linecap="round"/><path d="M1097.0 639.0 L1097.0 655.0" stroke="#000" stroke-width="15.6" fill="none" stroke-linejoin="round" stroke-linecap="round"/><path d="M1155.0 643.0 L1120.0 678.0 L1120.0 720.0 L1150.0 750.0 L1150.0 775.0" stroke="#000" stroke-width="15.6" fill="none" stroke-linejoin="round" stroke-linecap="round"/><path d="M1195.0 641.0 L1230.0 670.0 L1236.0 700.0 L1236.0 755.0 L1214.0 778.0" stroke="#000" stroke-width="15.6" fill="none" stroke-linejoin="round" stroke-linecap="round"/><path d="M1172.0 659.0 L1180.0 690.0 L1180.0 740.0 L1166.0 760.0" stroke="#000" stroke-width="15.6" fill="none" stroke-linejoin="round" stroke-linecap="round"/><path d="M1051.0 672.8 L1069.0 672.8" stroke="#000" stroke-width="15.2" fill="none" stroke-linejoin="round" stroke-linecap="round"/><path d="M1106.0 672.8 L1124.0 672.8" stroke="#000" stroke-width="15.2" fill="none" stroke-linejoin="round" stroke-linecap="round"/><path d="M1051.0 682.6 L1069.0 682.6" stroke="#000" stroke-width="15.2" fill="none" stroke-linejoin="round" stroke-linecap="round"/><path d="M1106.0 682.6 L1124.0 682.6" stroke="#000" stroke-width="15.2" fill="none" stroke-linejoin="round" stroke-linecap="round"/><path d="M1051.0 692.4 L1069.0 692.4" stroke="#000" stroke-width="15.2" fill="none" stroke-linejoin="round" stroke-linecap="round"/><path d="M1106.0 692.4 L1124.0 692.4" stroke="#000" stroke-width="15.2" fill="none" stroke-linejoin="round" stroke-linecap="round"/><path d="M1051.0 702.2 L1069.0 702.2" stroke="#000" stroke-width="15.2" fill="none" stroke-linejoin="round" stroke-linecap="round"/><path d="M1106.0 702.2 L1124.0 702.2" stroke="#000" stroke-width="15.2" fill="none" stroke-linejoin="round" stroke-linecap="round"/><path d="M1124.0 702.0 L1140.0 718.0 L1140.0 740.0 L1158.0 760.0 L1158.0 775.0" stroke="#000" stroke-width="15.6" fill="none" stroke-linejoin="round" stroke-linecap="round"/><path d="M1106.0 692.0 L1095.0 705.0 L1095.0 725.0 L1118.0 748.0 L1118.0 775.0" stroke="#000" stroke-width="15.6" fill="none" stroke-linejoin="round" stroke-linecap="round"/><path d="M984.5 493.9 L999.4 508.8 L999.4 547.5 L1007.9 556.0 L1007.9 610.6 L1015.7 618.4 L1015.7 700.0 L1025.0 709.3 L1025.0 730.0 L1034.0 739.0 L1034.0 812.0 L1042.0 820.1 L1071.0 820.1" stroke="#000" stroke-width="15.6" fill="none" stroke-linejoin="round" stroke-linecap="round"/><path d="M984.5 544.4 L999.4 557.2 L999.4 609.3 L1007.2 617.1 L1007.2 700.0 L1016.0 708.8 L1016.0 730.0 L1025.0 739.0 L1025.0 820.0 L1033.0 828.4 L1071.0 828.4" stroke="#000" stroke-width="15.6" fill="none" stroke-linejoin="round" stroke-linecap="round"/><path d="M984.5 594.8 L999.4 621.5 L999.4 700.0 L1007.0 707.6 L1007.0 730.0 L1016.0 739.0 L1016.0 828.0 L1024.0 836.0 L1071.0 836.0" stroke="#000" stroke-width="15.6" fill="none" stroke-linejoin="round" stroke-linecap="round"/><path d="M984.5 695.6 L999.4 710.5 L999.4 730.0 L1007.0 737.6 L1007.0 836.0 L1015.0 844.0 L1071.0 844.0" stroke="#000" stroke-width="15.6" fill="none" stroke-linejoin="round" stroke-linecap="round"/><path d="M984.5 746.0 L999.4 761.0 L999.4 844.0 L1007.0 851.6 L1071.0 851.6" stroke="#000" stroke-width="15.6" fill="none" stroke-linejoin="round" stroke-linecap="round"/><path d="M984.5 846.8 L1014.0 876.2 L1071.0 876.2" stroke="#000" stroke-width="15.6" fill="none" stroke-linejoin="round" stroke-linecap="round"/><path d="M1042.0 791.0 L1058.0 808.0 L1071.0 808.0" stroke="#000" stroke-width="15.6" fill="none" stroke-linejoin="round" stroke-linecap="round"/><path d="M1058.0 790.0 L1066.0 797.0 L1071.0 797.0" stroke="#000" stroke-width="15.6" fill="none" stroke-linejoin="round" stroke-linecap="round"/><path d="M1042.0 808.0 L1054.0 812.0 L1071.0 812.7" stroke="#000" stroke-width="15.6" fill="none" stroke-linejoin="round" stroke-linecap="round"/><path d="M1071.0 859.8 L1050.0 859.8 L1035.0 845.0" stroke="#000" stroke-width="15.6" fill="none" stroke-linejoin="round" stroke-linecap="round"/><path d="M1071.0 868.0 L1045.0 868.0" stroke="#000" stroke-width="15.6" fill="none" stroke-linejoin="round" stroke-linecap="round"/><path d="M984.5 927.6 L1025.0 886.3 L1071.0 884.5" stroke="#000" stroke-width="15.6" fill="none" stroke-linejoin="round" stroke-linecap="round"/><path d="M984.5 978.0 L1002.0 960.0 L1002.0 920.0 L1029.0 893.0 L1071.0 892.0" stroke="#000" stroke-width="15.6" fill="none" stroke-linejoin="round" stroke-linecap="round"/><path d="M984.5 1028.5 L1010.2 1003.0 L1010.2 924.0 L1032.0 901.2 L1093.0 901.2 L1099.1 915.0" stroke="#000" stroke-width="15.6" fill="none" stroke-linejoin="round" stroke-linecap="round"/><path d="M984.5 1078.9 L1018.4 1045.0 L1018.4 939.0 L1028.0 929.6 L1097.0 929.6 L1107.0 918.0" stroke="#000" stroke-width="15.6" fill="none" stroke-linejoin="round" stroke-linecap="round"/><path d="M984.5 1179.7 L1026.5 1138.0 L1026.5 947.0 L1036.0 937.8 L1108.0 937.8 L1115.0 918.0" stroke="#000" stroke-width="15.6" fill="none" stroke-linejoin="round" stroke-linecap="round"/><path d="M984.5 1230.1 L1034.6 1180.0 L1034.6 957.0 L1044.0 947.2 L1117.0 947.2 L1122.9 918.0" stroke="#000" stroke-width="15.6" fill="none" stroke-linejoin="round" stroke-linecap="round"/><path d="M1317.0 493.9 L1264.8 544.0 L1264.8 801.0 L1256.8 809.0 L1230.0 809.0" stroke="#000" stroke-width="15.6" fill="none" stroke-linejoin="round" stroke-linecap="round"/><path d="M1317.0 544.4 L1275.5 584.6 L1275.5 810.0 L1267.5 818.0 L1230.0 818.0" stroke="#000" stroke-width="15.6" fill="none" stroke-linejoin="round" stroke-linecap="round"/><path d="M1317.0 594.8 L1284.0 627.3 L1284.0 818.5 L1276.0 826.5 L1230.0 826.5" stroke="#000" stroke-width="15.6" fill="none" stroke-linejoin="round" stroke-linecap="round"/><path d="M1317.0 695.6 L1292.6 720.0 L1292.6 827.0 L1284.6 835.0 L1230.0 835.0" stroke="#000" stroke-width="15.6" fill="none" stroke-linejoin="round" stroke-linecap="round"/><path d="M1317.0 746.0 L1305.4 758.0 L1305.4 830.0 L1292.0 843.6 L1230.0 843.6" stroke="#000" stroke-width="15.6" fill="none" stroke-linejoin="round" stroke-linecap="round"/><path d="M1317.0 776.4 L1300.0 788.0 L1240.0 788.0 L1230.0 797.0" stroke="#000" stroke-width="15.6" fill="none" stroke-linejoin="round" stroke-linecap="round"/><path d="M1310.0 845.7 L1310.0 852.0 L1230.0 852.0" stroke="#000" stroke-width="15.6" fill="none" stroke-linejoin="round" stroke-linecap="round"/><path d="M1317.0 927.6 L1280.0 880.0 L1230.0 880.0" stroke="#000" stroke-width="15.6" fill="none" stroke-linejoin="round" stroke-linecap="round"/><path d="M1317.0 978.0 L1298.0 960.0 L1298.0 915.0 L1275.0 892.0 L1230.0 892.0" stroke="#000" stroke-width="15.6" fill="none" stroke-linejoin="round" stroke-linecap="round"/><path d="M1317.0 1028.5 L1290.0 1003.0 L1290.0 924.0 L1268.0 901.2 L1208.0 901.2 L1202.3 915.0" stroke="#000" stroke-width="15.6" fill="none" stroke-linejoin="round" stroke-linecap="round"/><path d="M1317.0 1078.9 L1282.0 1045.0 L1282.0 939.0 L1272.0 929.6 L1204.0 929.6 L1194.4 918.0" stroke="#000" stroke-width="15.6" fill="none" stroke-linejoin="round" stroke-linecap="round"/><path d="M1317.0 1179.7 L1274.0 1138.0 L1274.0 947.0 L1264.0 937.8 L1193.0 937.8 L1186.4 918.0" stroke="#000" stroke-width="15.6" fill="none" stroke-linejoin="round" stroke-linecap="round"/><path d="M1317.0 1230.1 L1266.0 1180.0 L1266.0 957.0 L1256.0 947.2 L1184.0 947.2 L1178.5 918.0" stroke="#000" stroke-width="15.6" fill="none" stroke-linejoin="round" stroke-linecap="round"/><path d="M1230.0 860.7 L1255.0 860.7 L1262.0 868.0" stroke="#000" stroke-width="15.6" fill="none" stroke-linejoin="round" stroke-linecap="round"/><path d="M1230.0 869.0 L1250.0 869.0" stroke="#000" stroke-width="15.6" fill="none" stroke-linejoin="round" stroke-linecap="round"/><path d="M1071.0 788.4 L1095.0 788.4" stroke="#000" stroke-width="15.4" fill="none" stroke-linejoin="round" stroke-linecap="round"/><path d="M1206.0 788.4 L1230.0 788.4" stroke="#000" stroke-width="15.4" fill="none" stroke-linejoin="round" stroke-linecap="round"/><path d="M1099.1 760.0 L1099.1 784.0" stroke="#000" stroke-width="15.4" fill="none" stroke-linejoin="round" stroke-linecap="round"/><path d="M1099.1 896.0 L1099.1 920.0" stroke="#000" stroke-width="15.4" fill="none" stroke-linejoin="round" stroke-linecap="round"/><path d="M1071.0 796.3 L1095.0 796.3" stroke="#000" stroke-width="15.4" fill="none" stroke-linejoin="round" stroke-linecap="round"/><path d="M1206.0 796.3 L1230.0 796.3" stroke="#000" stroke-width="15.4" fill="none" stroke-linejoin="round" stroke-linecap="round"/><path d="M1107.0 760.0 L1107.0 784.0" stroke="#000" stroke-width="15.4" fill="none" stroke-linejoin="round" stroke-linecap="round"/><path d="M1107.0 896.0 L1107.0 920.0" stroke="#000" stroke-width="15.4" fill="none" stroke-linejoin="round" stroke-linecap="round"/><path d="M1071.0 804.3 L1095.0 804.3" stroke="#000" stroke-width="15.4" fill="none" stroke-linejoin="round" stroke-linecap="round"/><path d="M1206.0 804.3 L1230.0 804.3" stroke="#000" stroke-width="15.4" fill="none" stroke-linejoin="round" stroke-linecap="round"/><path d="M1115.0 760.0 L1115.0 784.0" stroke="#000" stroke-width="15.4" fill="none" stroke-linejoin="round" stroke-linecap="round"/><path d="M1115.0 896.0 L1115.0 920.0" stroke="#000" stroke-width="15.4" fill="none" stroke-linejoin="round" stroke-linecap="round"/><path d="M1071.0 812.2 L1095.0 812.2" stroke="#000" stroke-width="15.4" fill="none" stroke-linejoin="round" stroke-linecap="round"/><path d="M1206.0 812.2 L1230.0 812.2" stroke="#000" stroke-width="15.4" fill="none" stroke-linejoin="round" stroke-linecap="round"/><path d="M1122.9 760.0 L1122.9 784.0" stroke="#000" stroke-width="15.4" fill="none" stroke-linejoin="round" stroke-linecap="round"/><path d="M1122.9 896.0 L1122.9 920.0" stroke="#000" stroke-width="15.4" fill="none" stroke-linejoin="round" stroke-linecap="round"/><path d="M1071.0 820.1 L1095.0 820.1" stroke="#000" stroke-width="15.4" fill="none" stroke-linejoin="round" stroke-linecap="round"/><path d="M1206.0 820.1 L1230.0 820.1" stroke="#000" stroke-width="15.4" fill="none" stroke-linejoin="round" stroke-linecap="round"/><path d="M1130.9 760.0 L1130.9 784.0" stroke="#000" stroke-width="15.4" fill="none" stroke-linejoin="round" stroke-linecap="round"/><path d="M1130.9 896.0 L1130.9 920.0" stroke="#000" stroke-width="15.4" fill="none" stroke-linejoin="round" stroke-linecap="round"/><path d="M1071.0 828.1 L1095.0 828.1" stroke="#000" stroke-width="15.4" fill="none" stroke-linejoin="round" stroke-linecap="round"/><path d="M1206.0 828.1 L1230.0 828.1" stroke="#000" stroke-width="15.4" fill="none" stroke-linejoin="round" stroke-linecap="round"/><path d="M1138.8 760.0 L1138.8 784.0" stroke="#000" stroke-width="15.4" fill="none" stroke-linejoin="round" stroke-linecap="round"/><path d="M1138.8 896.0 L1138.8 920.0" stroke="#000" stroke-width="15.4" fill="none" stroke-linejoin="round" stroke-linecap="round"/><path d="M1071.0 836.0 L1095.0 836.0" stroke="#000" stroke-width="15.4" fill="none" stroke-linejoin="round" stroke-linecap="round"/><path d="M1206.0 836.0 L1230.0 836.0" stroke="#000" stroke-width="15.4" fill="none" stroke-linejoin="round" stroke-linecap="round"/><path d="M1146.7 760.0 L1146.7 784.0" stroke="#000" stroke-width="15.4" fill="none" stroke-linejoin="round" stroke-linecap="round"/><path d="M1146.7 896.0 L1146.7 920.0" stroke="#000" stroke-width="15.4" fill="none" stroke-linejoin="round" stroke-linecap="round"/><path d="M1071.0 844.0 L1095.0 844.0" stroke="#000" stroke-width="15.4" fill="none" stroke-linejoin="round" stroke-linecap="round"/><path d="M1206.0 844.0 L1230.0 844.0" stroke="#000" stroke-width="15.4" fill="none" stroke-linejoin="round" stroke-linecap="round"/><path d="M1154.7 760.0 L1154.7 784.0" stroke="#000" stroke-width="15.4" fill="none" stroke-linejoin="round" stroke-linecap="round"/><path d="M1154.7 896.0 L1154.7 920.0" stroke="#000" stroke-width="15.4" fill="none" stroke-linejoin="round" stroke-linecap="round"/><path d="M1071.0 851.9 L1095.0 851.9" stroke="#000" stroke-width="15.4" fill="none" stroke-linejoin="round" stroke-linecap="round"/><path d="M1206.0 851.9 L1230.0 851.9" stroke="#000" stroke-width="15.4" fill="none" stroke-linejoin="round" stroke-linecap="round"/><path d="M1162.6 760.0 L1162.6 784.0" stroke="#000" stroke-width="15.4" fill="none" stroke-linejoin="round" stroke-linecap="round"/><path d="M1162.6 896.0 L1162.6 920.0" stroke="#000" stroke-width="15.4" fill="none" stroke-linejoin="round" stroke-linecap="round"/><path d="M1071.0 859.9 L1095.0 859.9" stroke="#000" stroke-width="15.4" fill="none" stroke-linejoin="round" stroke-linecap="round"/><path d="M1206.0 859.9 L1230.0 859.9" stroke="#000" stroke-width="15.4" fill="none" stroke-linejoin="round" stroke-linecap="round"/><path d="M1170.5 760.0 L1170.5 784.0" stroke="#000" stroke-width="15.4" fill="none" stroke-linejoin="round" stroke-linecap="round"/><path d="M1170.5 896.0 L1170.5 920.0" stroke="#000" stroke-width="15.4" fill="none" stroke-linejoin="round" stroke-linecap="round"/><path d="M1071.0 867.8 L1095.0 867.8" stroke="#000" stroke-width="15.4" fill="none" stroke-linejoin="round" stroke-linecap="round"/><path d="M1206.0 867.8 L1230.0 867.8" stroke="#000" stroke-width="15.4" fill="none" stroke-linejoin="round" stroke-linecap="round"/><path d="M1178.5 760.0 L1178.5 784.0" stroke="#000" stroke-width="15.4" fill="none" stroke-linejoin="round" stroke-linecap="round"/><path d="M1178.5 896.0 L1178.5 920.0" stroke="#000" stroke-width="15.4" fill="none" stroke-linejoin="round" stroke-linecap="round"/><path d="M1071.0 875.7 L1095.0 875.7" stroke="#000" stroke-width="15.4" fill="none" stroke-linejoin="round" stroke-linecap="round"/><path d="M1206.0 875.7 L1230.0 875.7" stroke="#000" stroke-width="15.4" fill="none" stroke-linejoin="round" stroke-linecap="round"/><path d="M1186.4 760.0 L1186.4 784.0" stroke="#000" stroke-width="15.4" fill="none" stroke-linejoin="round" stroke-linecap="round"/><path d="M1186.4 896.0 L1186.4 920.0" stroke="#000" stroke-width="15.4" fill="none" stroke-linejoin="round" stroke-linecap="round"/><path d="M1071.0 883.7 L1095.0 883.7" stroke="#000" stroke-width="15.4" fill="none" stroke-linejoin="round" stroke-linecap="round"/><path d="M1206.0 883.7 L1230.0 883.7" stroke="#000" stroke-width="15.4" fill="none" stroke-linejoin="round" stroke-linecap="round"/><path d="M1194.4 760.0 L1194.4 784.0" stroke="#000" stroke-width="15.4" fill="none" stroke-linejoin="round" stroke-linecap="round"/><path d="M1194.4 896.0 L1194.4 920.0" stroke="#000" stroke-width="15.4" fill="none" stroke-linejoin="round" stroke-linecap="round"/><path d="M1071.0 891.6 L1095.0 891.6" stroke="#000" stroke-width="15.4" fill="none" stroke-linejoin="round" stroke-linecap="round"/><path d="M1206.0 891.6 L1230.0 891.6" stroke="#000" stroke-width="15.4" fill="none" stroke-linejoin="round" stroke-linecap="round"/><path d="M1202.3 760.0 L1202.3 784.0" stroke="#000" stroke-width="15.4" fill="none" stroke-linejoin="round" stroke-linecap="round"/><path d="M1202.3 896.0 L1202.3 920.0" stroke="#000" stroke-width="15.4" fill="none" stroke-linejoin="round" stroke-linecap="round"/><path d="M1138.8 905.0 L1138.8 925.0 L1140.0 940.0 L1140.0 950.0" stroke="#000" stroke-width="15.4" fill="none" stroke-linejoin="round" stroke-linecap="round"/><path d="M1146.7 905.0 L1146.7 925.0 L1150.0 940.0 L1150.0 950.0" stroke="#000" stroke-width="15.4" fill="none" stroke-linejoin="round" stroke-linecap="round"/><path d="M1154.7 905.0 L1154.7 925.0 L1160.0 940.0 L1160.0 950.0" stroke="#000" stroke-width="15.4" fill="none" stroke-linejoin="round" stroke-linecap="round"/><path d="M1162.6 905.0 L1162.6 925.0 L1170.0 940.0 L1170.0 950.0" stroke="#000" stroke-width="15.4" fill="none" stroke-linejoin="round" stroke-linecap="round"/><path d="M1170.5 905.0 L1170.5 925.0 L1180.0 940.0 L1180.0 950.0" stroke="#000" stroke-width="15.4" fill="none" stroke-linejoin="round" stroke-linecap="round"/><path d="M1112.0 975.0 L1112.0 955.0 L1130.0 935.0" stroke="#000" stroke-width="15.6" fill="none" stroke-linejoin="round" stroke-linecap="round"/><path d="M1155.0 975.0 L1155.0 950.0" stroke="#000" stroke-width="15.6" fill="none" stroke-linejoin="round" stroke-linecap="round"/><path d="M1088.0 1005.0 L1112.0 1008.0" stroke="#000" stroke-width="15.6" fill="none" stroke-linejoin="round" stroke-linecap="round"/><path d="M1155.0 975.0 L1190.0 975.0" stroke="#000" stroke-width="15.6" fill="none" stroke-linejoin="round" stroke-linecap="round"/><path d="M1120.0 1000.0 L1135.0 985.0 L1135.0 960.0" stroke="#000" stroke-width="15.6" fill="none" stroke-linejoin="round" stroke-linecap="round"/><circle cx="974.5" cy="282.3" r="21.5" fill="#000"/><circle cx="1327.0" cy="282.3" r="21.5" fill="#000"/><circle cx="974.5" cy="332.71000000000004" r="21.5" fill="#000"/><circle cx="1327.0" cy="332.71000000000004" r="21.5" fill="#000"/><circle cx="974.5" cy="383.12" r="21.5" fill="#000"/><circle cx="1327.0" cy="383.12" r="21.5" fill="#000"/><circle cx="974.5" cy="433.53" r="21.5" fill="#000"/><circle cx="1327.0" cy="433.53" r="21.5" fill="#000"/><circle cx="974.5" cy="483.94" r="21.5" fill="#000"/><circle cx="1327.0" cy="483.94" r="21.5" fill="#000"/><circle cx="974.5" cy="534.35" r="21.5" fill="#000"/><circle cx="1327.0" cy="534.35" r="21.5" fill="#000"/><circle cx="974.5" cy="584.76" r="21.5" fill="#000"/><circle cx="1327.0" cy="584.76" r="21.5" fill="#000"/><circle cx="974.5" cy="635.1700000000001" r="21.5" fill="#000"/><circle cx="1327.0" cy="635.1700000000001" r="21.5" fill="#000"/><circle cx="974.5" cy="685.5799999999999" r="21.5" fill="#000"/><circle cx="1327.0" cy="685.5799999999999" r="21.5" fill="#000"/><circle cx="974.5" cy="735.99" r="21.5" fill="#000"/><circle cx="1327.0" cy="735.99" r="21.5" fill="#000"/><circle cx="974.5" cy="786.4" r="21.5" fill="#000"/><circle cx="1327.0" cy="786.4" r="21.5" fill="#000"/><circle cx="974.5" cy="836.81" r="21.5" fill="#000"/><circle cx="1327.0" cy="836.81" r="21.5" fill="#000"/><circle cx="974.5" cy="887.22" r="21.5" fill="#000"/><circle cx="1327.0" cy="887.22" r="21.5" fill="#000"/><circle cx="974.5" cy="937.6299999999999" r="21.5" fill="#000"/><circle cx="1327.0" cy="937.6299999999999" r="21.5" fill="#000"/><circle cx="974.5" cy="988.04" r="21.5" fill="#000"/><circle cx="1327.0" cy="988.04" r="21.5" fill="#000"/><circle cx="974.5" cy="1038.45" r="21.5" fill="#000"/><circle cx="1327.0" cy="1038.45" r="21.5" fill="#000"/><circle cx="974.5" cy="1088.86" r="21.5" fill="#000"/><circle cx="1327.0" cy="1088.86" r="21.5" fill="#000"/><circle cx="974.5" cy="1139.27" r="21.5" fill="#000"/><circle cx="1327.0" cy="1139.27" r="21.5" fill="#000"/><circle cx="974.5" cy="1189.6799999999998" r="21.5" fill="#000"/><circle cx="1327.0" cy="1189.6799999999998" r="21.5" fill="#000"/><circle cx="974.5" cy="1240.09" r="21.5" fill="#000"/><circle cx="1327.0" cy="1240.09" r="21.5" fill="#000"/><circle cx="1100.2" cy="1235.5" r="21" fill="#000"/><circle cx="1150.6000000000001" cy="1235.5" r="21" fill="#000"/><circle cx="1201.0" cy="1235.5" r="21" fill="#000"/><path d="M958.5 367.12 L990.5 399.12 M990.5 367.12 L958.5 399.12" stroke="#fff" stroke-width="5.5"/><path d="M1311.0 367.12 L1343.0 399.12 M1343.0 367.12 L1311.0 399.12" stroke="#fff" stroke-width="5.5"/><path d="M958.5 619.1700000000001 L990.5 651.1700000000001 M990.5 619.1700000000001 L958.5 651.1700000000001" stroke="#fff" stroke-width="5.5"/><path d="M1311.0 619.1700000000001 L1343.0 651.1700000000001 M1343.0 619.1700000000001 L1311.0 651.1700000000001" stroke="#fff" stroke-width="5.5"/><path d="M958.5 871.22 L990.5 903.22 M990.5 871.22 L958.5 903.22" stroke="#fff" stroke-width="5.5"/><path d="M1311.0 871.22 L1343.0 903.22 M1343.0 871.22 L1311.0 903.22" stroke="#fff" stroke-width="5.5"/><path d="M958.5 1123.27 L990.5 1155.27 M990.5 1123.27 L958.5 1155.27" stroke="#fff" stroke-width="5.5"/><path d="M1311.0 1123.27 L1343.0 1155.27 M1343.0 1123.27 L1311.0 1155.27" stroke="#fff" stroke-width="5.5"/><path d="M1134.6 1219.5 L1166.6 1251.5 M1166.6 1219.5 L1134.6 1251.5" stroke="#fff" stroke-width="5.5"/></mask></defs><path d="M958 258 H999 V1265 H950 V266 Z" fill="none" stroke="#b4b4b4" stroke-width="2.2"/><path d="M1302 258 H1352.5 V1265 H1302 Z" fill="none" stroke="#b4b4b4" stroke-width="2.2"/><path d="M1062 342 V232.5 H1239.6 V342" fill="none" stroke="#b4b4b4" stroke-width="2"/><path d="M1075 1210 H1227 V1259 H1083 L1075 1251 Z" fill="none" stroke="#b4b4b4" stroke-width="2"/><text x="1139" y="313" font-family="Liberation Mono" font-size="31.8" fill="#c46868" fill-opacity="1" textLength="28" lengthAdjust="spacingAndGlyphs">J1</text><text x="1047" y="408" font-family="Liberation Mono" font-size="36.4" fill="#c46868" fill-opacity="1" textLength="56" lengthAdjust="spacingAndGlyphs">10u</text><text x="1062" y="628" font-family="Liberation Mono" font-size="31.8" fill="#b4b4b4" fill-opacity="0.8" textLength="68" lengthAdjust="spacingAndGlyphs">0.1uF</text><text x="1062" y="624" font-family="Liberation Mono" font-size="31.8" fill="#c46868" fill-opacity="0.6" textLength="68" lengthAdjust="spacingAndGlyphs">0.1uF</text><g transform="translate(1068 1030) rotate(-90)"><text x="0" y="0" font-family="Liberation Mono" font-size="33.3" fill="#c46868" fill-opacity="1" textLength="70" lengthAdjust="spacingAndGlyphs">33pF</text></g><g transform="translate(1222 1025) rotate(-90)"><text x="0" y="0" font-family="Liberation Mono" font-size="33.3" fill="#c46868" fill-opacity="1" textLength="70" lengthAdjust="spacingAndGlyphs">33pF</text></g><g transform="translate(1237 565) rotate(-90)"><text x="0" y="0" font-family="Liberation Mono" font-size="33.3" fill="#c46868" fill-opacity="1" textLength="66" lengthAdjust="spacingAndGlyphs">SW1</text></g><g transform="translate(1163 632) rotate(-90)"><text x="0" y="0" font-family="Liberation Mono" font-size="31.8" fill="#b4b4b4" fill-opacity="0.7" textLength="270" lengthAdjust="spacingAndGlyphs">MCP1700x-330xxTT</text></g><g transform="translate(1150 640) rotate(-90)"><text x="0" y="0" font-family="Liberation Mono" font-size="31.8" fill="#c46868" fill-opacity="0.7" textLength="130" lengthAdjust="spacingAndGlyphs">MCP1</text></g><text x="958" y="752" font-family="Liberation Mono" font-size="33.3" fill="#b4b4b4" fill-opacity="0.7" textLength="192" lengthAdjust="spacingAndGlyphs">W25Q16JVUXIQ</text><text x="962" y="770" font-family="Liberation Mono" font-size="30.3" fill="#c46868" fill-opacity="0.5" textLength="138" lengthAdjust="spacingAndGlyphs">0.1uF</text><text x="1235" y="803" font-family="Liberation Mono" font-size="30.3" fill="#b4b4b4" fill-opacity="0.6" textLength="55" lengthAdjust="spacingAndGlyphs">0.1uF</text><text x="1020" y="892" font-family="Liberation Mono" font-size="30.3" fill="#b4b4b4" fill-opacity="0.5" textLength="60" lengthAdjust="spacingAndGlyphs">0.1uF</text><text x="1230" y="910" font-family="Liberation Mono" font-size="30.3" fill="#b4b4b4" fill-opacity="0.5" textLength="60" lengthAdjust="spacingAndGlyphs">0.1uF</text><text x="1050" y="955" font-family="Liberation Mono" font-size="31.8" fill="#b4b4b4" fill-opacity="0.6" textLength="80" lengthAdjust="spacingAndGlyphs">1B</text><circle cx="1211" cy="527.6" r="20.7" fill="none" stroke="#c46868" stroke-width="1.5"/><rect x="1181.8" y="488.8" width="59.5" height="78.5" fill="none" stroke="#c46868" stroke-width="1.5"/><rect x="1177.5" y="473.3" width="68" height="108.7" fill="none" stroke="#ff26e2" stroke-width="1"/><path d="M952 265 H1349 V1258 H952 Z" fill="#c83434" fill-opacity="0.6" mask="url(#fz)"/><rect x="953.0" y="260.8" width="43" height="43" rx="5" fill="#001023"/><rect x="1305.5" y="260.8" width="43" height="43" rx="5" fill="#001023"/><rect x="1078.7" y="1214.0" width="43" height="43" rx="5" fill="#001023"/><rect x="1051.8" y="261.5" width="27" height="45" rx="13.5" fill="#001023"/><rect x="1223.5" y="261.5" width="27" height="45" rx="13.5" fill="#001023"/><rect x="1051.8" y="344.3" width="27" height="45" rx="13.5" fill="#001023"/><rect x="1223.5" y="344.3" width="27" height="45" rx="13.5" fill="#001023"/><circle cx="1093.8" cy="356.5" r="11.5" fill="#001023"/><circle cx="1208.5" cy="356.5" r="11.5" fill="#001023"/><circle cx="1100.3" cy="587.2" r="13" fill="#001023"/><path d="M1311.0 299.0 L1300.0 309.0 L1236.0 309.0 L1196.0 350.0 L1118.0 350.0 L1103.0 371.0" stroke="#c83434" stroke-width="3.6" fill="none" stroke-linejoin="round" stroke-linecap="round"/><path d="M1196.0 350.0 L1196.0 372.0" stroke="#c83434" stroke-width="3.6" fill="none" stroke-linejoin="round" stroke-linecap="round"/><path d="M1099.0 399.0 L1099.0 470.0" stroke="#c83434" stroke-width="3.6" fill="none" stroke-linejoin="round" stroke-linecap="round"/><path d="M1116.0 399.0 L1116.0 420.0 L1118.0 452.0" stroke="#c83434" stroke-width="3.6" fill="none" stroke-linejoin="round" stroke-linecap="round"/><path d="M1156.0 399.0 L1156.0 571.0 L1212.0 623.0 L1212.0 690.0 L1192.0 712.0 L1192.0 760.0" stroke="#c83434" stroke-width="3.6" fill="none" stroke-linejoin="round" stroke-linecap="round"/><path d="M1166.0 399.0 L1166.0 567.0 L1222.0 620.0 L1222.0 700.0 L1200.0 722.0 L1200.0 760.0" stroke="#c83434" stroke-width="3.6" fill="none" stroke-linejoin="round" stroke-linecap="round"/><path d="M1142.0 392.0 L1142.0 364.0 L1168.0 364.0 L1168.0 392.0" stroke="#c83434" stroke-width="3.6" fill="none" stroke-linejoin="round" stroke-linecap="round"/><path d="M1118.0 552.0 L1190.0 624.0 L1190.0 650.0 L1160.0 680.0 L1160.0 700.0" stroke="#c83434" stroke-width="3.6" fill="none" stroke-linejoin="round" stroke-linecap="round"/><path d="M1118.0 500.0 L1118.0 552.0" stroke="#c83434" stroke-width="3.6" fill="none" stroke-linejoin="round" stroke-linecap="round"/><path d="M1100.0 587.0 L1086.0 587.0 L1052.0 622.0 L1052.0 664.0 L1040.0 676.0 L1040.0 710.0 L1060.0 730.0 L1100.0 730.0 L1135.0 765.0 L1135.0 775.0" stroke="#c83434" stroke-width="3.6" fill="none" stroke-linejoin="round" stroke-linecap="round"/><path d="M1064.0 625.0 L1052.0 637.0" stroke="#c83434" stroke-width="3.6" fill="none" stroke-linejoin="round" stroke-linecap="round"/><path d="M1058.0 660.0 L1058.0 650.0 L1080.0 628.0 L1108.0 628.0 L1125.0 645.0 L1125.0 700.0 L1110.0 712.0" stroke="#c83434" stroke-width="3.6" fill="none" stroke-linejoin="round" stroke-linecap="round"/><path d="M1097.0 639.0 L1097.0 655.0" stroke="#c83434" stroke-width="3.6" fill="none" stroke-linejoin="round" stroke-linecap="round"/><path d="M1155.0 643.0 L1120.0 678.0 L1120.0 720.0 L1150.0 750.0 L1150.0 775.0" stroke="#c83434" stroke-width="3.6" fill="none" stroke-linejoin="round" stroke-linecap="round"/><path d="M1195.0 641.0 L1230.0 670.0 L1236.0 700.0 L1236.0 755.0 L1214.0 778.0" stroke="#c83434" stroke-width="3.6" fill="none" stroke-linejoin="round" stroke-linecap="round"/><path d="M1172.0 659.0 L1180.0 690.0 L1180.0 740.0 L1166.0 760.0" stroke="#c83434" stroke-width="3.6" fill="none" stroke-linejoin="round" stroke-linecap="round"/><path d="M1051.0 672.8 L1069.0 672.8" stroke="#c83434" stroke-width="3.2" fill="none" stroke-linejoin="round" stroke-linecap="round"/><path d="M1106.0 672.8 L1124.0 672.8" stroke="#c83434" stroke-width="3.2" fill="none" stroke-linejoin="round" stroke-linecap="round"/><path d="M1051.0 682.6 L1069.0 682.6" stroke="#c83434" stroke-width="3.2" fill="none" stroke-linejoin="round" stroke-linecap="round"/><path d="M1106.0 682.6 L1124.0 682.6" stroke="#c83434" stroke-width="3.2" fill="none" stroke-linejoin="round" stroke-linecap="round"/><path d="M1051.0 692.4 L1069.0 692.4" stroke="#c83434" stroke-width="3.2" fill="none" stroke-linejoin="round" stroke-linecap="round"/><path d="M1106.0 692.4 L1124.0 692.4" stroke="#c83434" stroke-width="3.2" fill="none" stroke-linejoin="round" stroke-linecap="round"/><path d="M1051.0 702.2 L1069.0 702.2" stroke="#c83434" stroke-width="3.2" fill="none" stroke-linejoin="round" stroke-linecap="round"/><path d="M1106.0 702.2 L1124.0 702.2" stroke="#c83434" stroke-width="3.2" fill="none" stroke-linejoin="round" stroke-linecap="round"/><path d="M1124.0 702.0 L1140.0 718.0 L1140.0 740.0 L1158.0 760.0 L1158.0 775.0" stroke="#c83434" stroke-width="3.6" fill="none" stroke-linejoin="round" stroke-linecap="round"/><path d="M1106.0 692.0 L1095.0 705.0 L1095.0 725.0 L1118.0 748.0 L1118.0 775.0" stroke="#c83434" stroke-width="3.6" fill="none" stroke-linejoin="round" stroke-linecap="round"/><path d="M984.5 493.9 L999.4 508.8 L999.4 547.5 L1007.9 556.0 L1007.9 610.6 L1015.7 618.4 L1015.7 700.0 L1025.0 709.3 L1025.0 730.0 L1034.0 739.0 L1034.0 812.0 L1042.0 820.1 L1071.0 820.1" stroke="#c83434" stroke-width="3.6" fill="none" stroke-linejoin="round" stroke-linecap="round"/><path d="M984.5 544.4 L999.4 557.2 L999.4 609.3 L1007.2 617.1 L1007.2 700.0 L1016.0 708.8 L1016.0 730.0 L1025.0 739.0 L1025.0 820.0 L1033.0 828.4 L1071.0 828.4" stroke="#c83434" stroke-width="3.6" fill="none" stroke-linejoin="round" stroke-linecap="round"/><path d="M984.5 594.8 L999.4 621.5 L999.4 700.0 L1007.0 707.6 L1007.0 730.0 L1016.0 739.0 L1016.0 828.0 L1024.0 836.0 L1071.0 836.0" stroke="#c83434" stroke-width="3.6" fill="none" stroke-linejoin="round" stroke-linecap="round"/><path d="M984.5 695.6 L999.4 710.5 L999.4 730.0 L1007.0 737.6 L1007.0 836.0 L1015.0 844.0 L1071.0 844.0" stroke="#c83434" stroke-width="3.6" fill="none" stroke-linejoin="round" stroke-linecap="round"/><path d="M984.5 746.0 L999.4 761.0 L999.4 844.0 L1007.0 851.6 L1071.0 851.6" stroke="#c83434" stroke-width="3.6" fill="none" stroke-linejoin="round" stroke-linecap="round"/><path d="M984.5 846.8 L1014.0 876.2 L1071.0 876.2" stroke="#c83434" stroke-width="3.6" fill="none" stroke-linejoin="round" stroke-linecap="round"/><path d="M1042.0 791.0 L1058.0 808.0 L1071.0 808.0" stroke="#c83434" stroke-width="3.6" fill="none" stroke-linejoin="round" stroke-linecap="round"/><path d="M1058.0 790.0 L1066.0 797.0 L1071.0 797.0" stroke="#c83434" stroke-width="3.6" fill="none" stroke-linejoin="round" stroke-linecap="round"/><path d="M1042.0 808.0 L1054.0 812.0 L1071.0 812.7" stroke="#c83434" stroke-width="3.6" fill="none" stroke-linejoin="round" stroke-linecap="round"/><path d="M1071.0 859.8 L1050.0 859.8 L1035.0 845.0" stroke="#c83434" stroke-width="3.6" fill="none" stroke-linejoin="round" stroke-linecap="round"/><path d="M1071.0 868.0 L1045.0 868.0" stroke="#c83434" stroke-width="3.6" fill="none" stroke-linejoin="round" stroke-linecap="round"/><path d="M984.5 927.6 L1025.0 886.3 L1071.0 884.5" stroke="#c83434" stroke-width="3.6" fill="none" stroke-linejoin="round" stroke-linecap="round"/><path d="M984.5 978.0 L1002.0 960.0 L1002.0 920.0 L1029.0 893.0 L1071.0 892.0" stroke="#c83434" stroke-width="3.6" fill="none" stroke-linejoin="round" stroke-linecap="round"/><path d="M984.5 1028.5 L1010.2 1003.0 L1010.2 924.0 L1032.0 901.2 L1093.0 901.2 L1099.1 915.0" stroke="#c83434" stroke-width="3.6" fill="none" stroke-linejoin="round" stroke-linecap="round"/><path d="M984.5 1078.9 L1018.4 1045.0 L1018.4 939.0 L1028.0 929.6 L1097.0 929.6 L1107.0 918.0" stroke="#c83434" stroke-width="3.6" fill="none" stroke-linejoin="round" stroke-linecap="round"/><path d="M984.5 1179.7 L1026.5 1138.0 L1026.5 947.0 L1036.0 937.8 L1108.0 937.8 L1115.0 918.0" stroke="#c83434" stroke-width="3.6" fill="none" stroke-linejoin="round" stroke-linecap="round"/><path d="M984.5 1230.1 L1034.6 1180.0 L1034.6 957.0 L1044.0 947.2 L1117.0 947.2 L1122.9 918.0" stroke="#c83434" stroke-width="3.6" fill="none" stroke-linejoin="round" stroke-linecap="round"/><path d="M1317.0 493.9 L1264.8 544.0 L1264.8 801.0 L1256.8 809.0 L1230.0 809.0" stroke="#c83434" stroke-width="3.6" fill="none" stroke-linejoin="round" stroke-linecap="round"/><path d="M1317.0 544.4 L1275.5 584.6 L1275.5 810.0 L1267.5 818.0 L1230.0 818.0" stroke="#c83434" stroke-width="3.6" fill="none" stroke-linejoin="round" stroke-linecap="round"/><path d="M1317.0 594.8 L1284.0 627.3 L1284.0 818.5 L1276.0 826.5 L1230.0 826.5" stroke="#c83434" stroke-width="3.6" fill="none" stroke-linejoin="round" stroke-linecap="round"/><path d="M1317.0 695.6 L1292.6 720.0 L1292.6 827.0 L1284.6 835.0 L1230.0 835.0" stroke="#c83434" stroke-width="3.6" fill="none" stroke-linejoin="round" stroke-linecap="round"/><path d="M1317.0 746.0 L1305.4 758.0 L1305.4 830.0 L1292.0 843.6 L1230.0 843.6" stroke="#c83434" stroke-width="3.6" fill="none" stroke-linejoin="round" stroke-linecap="round"/><path d="M1317.0 776.4 L1300.0 788.0 L1240.0 788.0 L1230.0 797.0" stroke="#c83434" stroke-width="3.6" fill="none" stroke-linejoin="round" stroke-linecap="round"/><path d="M1310.0 845.7 L1310.0 852.0 L1230.0 852.0" stroke="#c83434" stroke-width="3.6" fill="none" stroke-linejoin="round" stroke-linecap="round"/><path d="M1317.0 927.6 L1280.0 880.0 L1230.0 880.0" stroke="#c83434" stroke-width="3.6" fill="none" stroke-linejoin="round" stroke-linecap="round"/><path d="M1317.0 978.0 L1298.0 960.0 L1298.0 915.0 L1275.0 892.0 L1230.0 892.0" stroke="#c83434" stroke-width="3.6" fill="none" stroke-linejoin="round" stroke-linecap="round"/><path d="M1317.0 1028.5 L1290.0 1003.0 L1290.0 924.0 L1268.0 901.2 L1208.0 901.2 L1202.3 915.0" stroke="#c83434" stroke-width="3.6" fill="none" stroke-linejoin="round" stroke-linecap="round"/><path d="M1317.0 1078.9 L1282.0 1045.0 L1282.0 939.0 L1272.0 929.6 L1204.0 929.6 L1194.4 918.0" stroke="#c83434" stroke-width="3.6" fill="none" stroke-linejoin="round" stroke-linecap="round"/><path d="M1317.0 1179.7 L1274.0 1138.0 L1274.0 947.0 L1264.0 937.8 L1193.0 937.8 L1186.4 918.0" stroke="#c83434" stroke-width="3.6" fill="none" stroke-linejoin="round" stroke-linecap="round"/><path d="M1317.0 1230.1 L1266.0 1180.0 L1266.0 957.0 L1256.0 947.2 L1184.0 947.2 L1178.5 918.0" stroke="#c83434" stroke-width="3.6" fill="none" stroke-linejoin="round" stroke-linecap="round"/><path d="M1230.0 860.7 L1255.0 860.7 L1262.0 868.0" stroke="#c83434" stroke-width="3.6" fill="none" stroke-linejoin="round" stroke-linecap="round"/><path d="M1230.0 869.0 L1250.0 869.0" stroke="#c83434" stroke-width="3.6" fill="none" stroke-linejoin="round" stroke-linecap="round"/><path d="M1071.0 788.4 L1095.0 788.4" stroke="#c83434" stroke-width="3.4" fill="none" stroke-linejoin="round" stroke-linecap="round"/><path d="M1206.0 788.4 L1230.0 788.4" stroke="#c83434" stroke-width="3.4" fill="none" stroke-linejoin="round" stroke-linecap="round"/><path d="M1099.1 760.0 L1099.1 784.0" stroke="#c83434" stroke-width="3.4" fill="none" stroke-linejoin="round" stroke-linecap="round"/><path d="M1099.1 896.0 L1099.1 920.0" stroke="#c83434" stroke-width="3.4" fill="none" stroke-linejoin="round" stroke-linecap="round"/><path d="M1071.0 796.3 L1095.0 796.3" stroke="#c83434" stroke-width="3.4" fill="none" stroke-linejoin="round" stroke-linecap="round"/><path d="M1206.0 796.3 L1230.0 796.3" stroke="#c83434" stroke-width="3.4" fill="none" stroke-linejoin="round" stroke-linecap="round"/><path d="M1107.0 760.0 L1107.0 784.0" stroke="#c83434" stroke-width="3.4" fill="none" stroke-linejoin="round" stroke-linecap="round"/><path d="M1107.0 896.0 L1107.0 920.0" stroke="#c83434" stroke-width="3.4" fill="none" stroke-linejoin="round" stroke-linecap="round"/><path d="M1071.0 804.3 L1095.0 804.3" stroke="#c83434" stroke-width="3.4" fill="none" stroke-linejoin="round" stroke-linecap="round"/><path d="M1206.0 804.3 L1230.0 804.3" stroke="#c83434" stroke-width="3.4" fill="none" stroke-linejoin="round" stroke-linecap="round"/><path d="M1115.0 760.0 L1115.0 784.0" stroke="#c83434" stroke-width="3.4" fill="none" stroke-linejoin="round" stroke-linecap="round"/><path d="M1115.0 896.0 L1115.0 920.0" stroke="#c83434" stroke-width="3.4" fill="none" stroke-linejoin="round" stroke-linecap="round"/><path d="M1071.0 812.2 L1095.0 812.2" stroke="#c83434" stroke-width="3.4" fill="none" stroke-linejoin="round" stroke-linecap="round"/><path d="M1206.0 812.2 L1230.0 812.2" stroke="#c83434" stroke-width="3.4" fill="none" stroke-linejoin="round" stroke-linecap="round"/><path d="M1122.9 760.0 L1122.9 784.0" stroke="#c83434" stroke-width="3.4" fill="none" stroke-linejoin="round" stroke-linecap="round"/><path d="M1122.9 896.0 L1122.9 920.0" stroke="#c83434" stroke-width="3.4" fill="none" stroke-linejoin="round" stroke-linecap="round"/><path d="M1071.0 820.1 L1095.0 820.1" stroke="#c83434" stroke-width="3.4" fill="none" stroke-linejoin="round" stroke-linecap="round"/><path d="M1206.0 820.1 L1230.0 820.1" stroke="#c83434" stroke-width="3.4" fill="none" stroke-linejoin="round" stroke-linecap="round"/><path d="M1130.9 760.0 L1130.9 784.0" stroke="#c83434" stroke-width="3.4" fill="none" stroke-linejoin="round" stroke-linecap="round"/><path d="M1130.9 896.0 L1130.9 920.0" stroke="#c83434" stroke-width="3.4" fill="none" stroke-linejoin="round" stroke-linecap="round"/><path d="M1071.0 828.1 L1095.0 828.1" stroke="#c83434" stroke-width="3.4" fill="none" stroke-linejoin="round" stroke-linecap="round"/><path d="M1206.0 828.1 L1230.0 828.1" stroke="#c83434" stroke-width="3.4" fill="none" stroke-linejoin="round" stroke-linecap="round"/><path d="M1138.8 760.0 L1138.8 784.0" stroke="#c83434" stroke-width="3.4" fill="none" stroke-linejoin="round" stroke-linecap="round"/><path d="M1138.8 896.0 L1138.8 920.0" stroke="#c83434" stroke-width="3.4" fill="none" stroke-linejoin="round" stroke-linecap="round"/><path d="M1071.0 836.0 L1095.0 836.0" stroke="#c83434" stroke-width="3.4" fill="none" stroke-linejoin="round" stroke-linecap="round"/><path d="M1206.0 836.0 L1230.0 836.0" stroke="#c83434" stroke-width="3.4" fill="none" stroke-linejoin="round" stroke-linecap="round"/><path d="M1146.7 760.0 L1146.7 784.0" stroke="#c83434" stroke-width="3.4" fill="none" stroke-linejoin="round" stroke-linecap="round"/><path d="M1146.7 896.0 L1146.7 920.0" stroke="#c83434" stroke-width="3.4" fill="none" stroke-linejoin="round" stroke-linecap="round"/><path d="M1071.0 844.0 L1095.0 844.0" stroke="#c83434" stroke-width="3.4" fill="none" stroke-linejoin="round" stroke-linecap="round"/><path d="M1206.0 844.0 L1230.0 844.0" stroke="#c83434" stroke-width="3.4" fill="none" stroke-linejoin="round" stroke-linecap="round"/><path d="M1154.7 760.0 L1154.7 784.0" stroke="#c83434" stroke-width="3.4" fill="none" stroke-linejoin="round" stroke-linecap="round"/><path d="M1154.7 896.0 L1154.7 920.0" stroke="#c83434" stroke-width="3.4" fill="none" stroke-linejoin="round" stroke-linecap="round"/><path d="M1071.0 851.9 L1095.0 851.9" stroke="#c83434" stroke-width="3.4" fill="none" stroke-linejoin="round" stroke-linecap="round"/><path d="M1206.0 851.9 L1230.0 851.9" stroke="#c83434" stroke-width="3.4" fill="none" stroke-linejoin="round" stroke-linecap="round"/><path d="M1162.6 760.0 L1162.6 784.0" stroke="#c83434" stroke-width="3.4" fill="none" stroke-linejoin="round" stroke-linecap="round"/><path d="M1162.6 896.0 L1162.6 920.0" stroke="#c83434" stroke-width="3.4" fill="none" stroke-linejoin="round" stroke-linecap="round"/><path d="M1071.0 859.9 L1095.0 859.9" stroke="#c83434" stroke-width="3.4" fill="none" stroke-linejoin="round" stroke-linecap="round"/><path d="M1206.0 859.9 L1230.0 859.9" stroke="#c83434" stroke-width="3.4" fill="none" stroke-linejoin="round" stroke-linecap="round"/><path d="M1170.5 760.0 L1170.5 784.0" stroke="#c83434" stroke-width="3.4" fill="none" stroke-linejoin="round" stroke-linecap="round"/><path d="M1170.5 896.0 L1170.5 920.0" stroke="#c83434" stroke-width="3.4" fill="none" stroke-linejoin="round" stroke-linecap="round"/><path d="M1071.0 867.8 L1095.0 867.8" stroke="#c83434" stroke-width="3.4" fill="none" stroke-linejoin="round" stroke-linecap="round"/><path d="M1206.0 867.8 L1230.0 867.8" stroke="#c83434" stroke-width="3.4" fill="none" stroke-linejoin="round" stroke-linecap="round"/><path d="M1178.5 760.0 L1178.5 784.0" stroke="#c83434" stroke-width="3.4" fill="none" stroke-linejoin="round" stroke-linecap="round"/><path d="M1178.5 896.0 L1178.5 920.0" stroke="#c83434" stroke-width="3.4" fill="none" stroke-linejoin="round" stroke-linecap="round"/><path d="M1071.0 875.7 L1095.0 875.7" stroke="#c83434" stroke-width="3.4" fill="none" stroke-linejoin="round" stroke-linecap="round"/><path d="M1206.0 875.7 L1230.0 875.7" stroke="#c83434" stroke-width="3.4" fill="none" stroke-linejoin="round" stroke-linecap="round"/><path d="M1186.4 760.0 L1186.4 784.0" stroke="#c83434" stroke-width="3.4" fill="none" stroke-linejoin="round" stroke-linecap="round"/><path d="M1186.4 896.0 L1186.4 920.0" stroke="#c83434" stroke-width="3.4" fill="none" stroke-linejoin="round" stroke-linecap="round"/><path d="M1071.0 883.7 L1095.0 883.7" stroke="#c83434" stroke-width="3.4" fill="none" stroke-linejoin="round" stroke-linecap="round"/><path d="M1206.0 883.7 L1230.0 883.7" stroke="#c83434" stroke-width="3.4" fill="none" stroke-linejoin="round" stroke-linecap="round"/><path d="M1194.4 760.0 L1194.4 784.0" stroke="#c83434" stroke-width="3.4" fill="none" stroke-linejoin="round" stroke-linecap="round"/><path d="M1194.4 896.0 L1194.4 920.0" stroke="#c83434" stroke-width="3.4" fill="none" stroke-linejoin="round" stroke-linecap="round"/><path d="M1071.0 891.6 L1095.0 891.6" stroke="#c83434" stroke-width="3.4" fill="none" stroke-linejoin="round" stroke-linecap="round"/><path d="M1206.0 891.6 L1230.0 891.6" stroke="#c83434" stroke-width="3.4" fill="none" stroke-linejoin="round" stroke-linecap="round"/><path d="M1202.3 760.0 L1202.3 784.0" stroke="#c83434" stroke-width="3.4" fill="none" stroke-linejoin="round" stroke-linecap="round"/><path d="M1202.3 896.0 L1202.3 920.0" stroke="#c83434" stroke-width="3.4" fill="none" stroke-linejoin="round" stroke-linecap="round"/><path d="M1138.8 905.0 L1138.8 925.0 L1140.0 940.0 L1140.0 950.0" stroke="#c83434" stroke-width="3.4" fill="none" stroke-linejoin="round" stroke-linecap="round"/><path d="M1146.7 905.0 L1146.7 925.0 L1150.0 940.0 L1150.0 950.0" stroke="#c83434" stroke-width="3.4" fill="none" stroke-linejoin="round" stroke-linecap="round"/><path d="M1154.7 905.0 L1154.7 925.0 L1160.0 940.0 L1160.0 950.0" stroke="#c83434" stroke-width="3.4" fill="none" stroke-linejoin="round" stroke-linecap="round"/><path d="M1162.6 905.0 L1162.6 925.0 L1170.0 940.0 L1170.0 950.0" stroke="#c83434" stroke-width="3.4" fill="none" stroke-linejoin="round" stroke-linecap="round"/><path d="M1170.5 905.0 L1170.5 925.0 L1180.0 940.0 L1180.0 950.0" stroke="#c83434" stroke-width="3.4" fill="none" stroke-linejoin="round" stroke-linecap="round"/><path d="M1112.0 975.0 L1112.0 955.0 L1130.0 935.0" stroke="#c83434" stroke-width="3.6" fill="none" stroke-linejoin="round" stroke-linecap="round"/><path d="M1155.0 975.0 L1155.0 950.0" stroke="#c83434" stroke-width="3.6" fill="none" stroke-linejoin="round" stroke-linecap="round"/><path d="M1088.0 1005.0 L1112.0 1008.0" stroke="#c83434" stroke-width="3.6" fill="none" stroke-linejoin="round" stroke-linecap="round"/><path d="M1155.0 975.0 L1190.0 975.0" stroke="#c83434" stroke-width="3.6" fill="none" stroke-linejoin="round" stroke-linecap="round"/><path d="M1120.0 1000.0 L1135.0 985.0 L1135.0 960.0" stroke="#c83434" stroke-width="3.6" fill="none" stroke-linejoin="round" stroke-linecap="round"/><path d="M952 265 l12 -12 M966 265 l12 -12 M980 265 l12 -12 M994 265 l12 -12 M1008 265 l12 -12 M1022 265 l12 -12 M1036 265 l12 -12 M1050 265 l12 -12 M1064 265 l12 -12 M1078 265 l12 -12 M1092 265 l12 -12 M1106 265 l12 -12 M1120 265 l12 -12 M1134 265 l12 -12 M1148 265 l12 -12 M1162 265 l12 -12 M1176 265 l12 -12 M1190 265 l12 -12 M1204 265 l12 -12 M1218 265 l12 -12 M1232 265 l12 -12 M1246 265 l12 -12 M1260 265 l12 -12 M1274 265 l12 -12 M1288 265 l12 -12 M1302 265 l12 -12 M1316 265 l12 -12 M1330 265 l12 -12 M1344 265 l12 -12 M940 280 l12 -12 M1350 280 l12 -12 M940 294 l12 -12 M1350 294 l12 -12 M940 308 l12 -12 M1350 308 l12 -12 M940 322 l12 -12 M1350 322 l12 -12 M940 336 l12 -12 M1350 336 l12 -12 M940 350 l12 -12 M1350 350 l12 -12 M940 364 l12 -12 M1350 364 l12 -12 M940 378 l12 -12 M1350 378 l12 -12 M940 392 l12 -12 M1350 392 l12 -12 M940 406 l12 -12 M1350 406 l12 -12 M940 420 l12 -12 M1350 420 l12 -12 M940 434 l12 -12 M1350 434 l12 -12 M940 448 l12 -12 M1350 448 l12 -12 M940 462 l12 -12 M1350 462 l12 -12 M940 476 l12 -12 M1350 476 l12 -12 M940 490 l12 -12 M1350 490 l12 -12 M940 504 l12 -12 M1350 504 l12 -12 M940 518 l12 -12 M1350 518 l12 -12 M940 532 l12 -12 M1350 532 l12 -12 M940 546 l12 -12 M1350 546 l12 -12 M940 560 l12 -12 M1350 560 l12 -12 M940 574 l12 -12 M1350 574 l12 -12 M940 588 l12 -12 M1350 588 l12 -12 M940 602 l12 -12 M1350 602 l12 -12 M940 616 l12 -12 M1350 616 l12 -12 M940 630 l12 -12 M1350 630 l12 -12 M940 644 l12 -12 M1350 644 l12 -12 M940 658 l12 -12 M1350 658 l12 -12 M940 672 l12 -12 M1350 672 l12 -12 M940 686 l12 -12 M1350 686 l12 -12 M940 700 l12 -12 M1350 700 l12 -12 M940 714 l12 -12 M1350 714 l12 -12 M940 728 l12 -12 M1350 728 l12 -12 M940 742 l12 -12 M1350 742 l12 -12 M940 756 l12 -12 M1350 756 l12 -12 M940 770 l12 -12 M1350 770 l12 -12 M940 784 l12 -12 M1350 784 l12 -12 M940 798 l12 -12 M1350 798 l12 -12 M940 812 l12 -12 M1350 812 l12 -12 M940 826 l12 -12 M1350 826 l12 -12 M940 840 l12 -12 M1350 840 l12 -12 M940 854 l12 -12 M1350 854 l12 -12 M940 868 l12 -12 M1350 868 l12 -12 M940 882 l12 -12 M1350 882 l12 -12 M940 896 l12 -12 M1350 896 l12 -12 M940 910 l12 -12 M1350 910 l12 -12 M940 924 l12 -12 M1350 924 l12 -12 M940 938 l12 -12 M1350 938 l12 -12 M940 952 l12 -12 M1350 952 l12 -12 M940 966 l12 -12 M1350 966 l12 -12 M940 980 l12 -12 M1350 980 l12 -12 M940 994 l12 -12 M1350 994 l12 -12 M940 1008 l12 -12 M1350 1008 l12 -12 M940 1022 l12 -12 M1350 1022 l12 -12 M940 1036 l12 -12 M1350 1036 l12 -12 M940 1050 l12 -12 M1350 1050 l12 -12 M940 1064 l12 -12 M1350 1064 l12 -12 M940 1078 l12 -12 M1350 1078 l12 -12 M940 1092 l12 -12 M1350 1092 l12 -12 M940 1106 l12 -12 M1350 1106 l12 -12 M940 1120 l12 -12 M1350 1120 l12 -12 M940 1134 l12 -12 M1350 1134 l12 -12 M940 1148 l12 -12 M1350 1148 l12 -12 M940 1162 l12 -12 M1350 1162 l12 -12 M940 1176 l12 -12 M1350 1176 l12 -12 M940 1190 l12 -12 M1350 1190 l12 -12 M940 1204 l12 -12 M1350 1204 l12 -12 M940 1218 l12 -12 M1350 1218 l12 -12 M940 1232 l12 -12 M1350 1232 l12 -12 M940 1246 l12 -12 M1350 1246 l12 -12 M940 1260 l12 -12 M1350 1260 l12 -12 M952 1271 l12 -12 M966 1271 l12 -12 M980 1271 l12 -12 M994 1271 l12 -12 M1008 1271 l12 -12 M1022 1271 l12 -12 M1036 1271 l12 -12 M1050 1271 l12 -12 M1064 1271 l12 -12 M1078 1271 l12 -12 M1092 1271 l12 -12 M1106 1271 l12 -12 M1120 1271 l12 -12 M1134 1271 l12 -12 M1148 1271 l12 -12 M1162 1271 l12 -12 M1176 1271 l12 -12 M1190 1271 l12 -12 M1204 1271 l12 -12 M1218 1271 l12 -12 M1232 1271 l12 -12 M1246 1271 l12 -12 M1260 1271 l12 -12 M1274 1271 l12 -12 M1288 1271 l12 -12 M1302 1271 l12 -12 M1316 1271 l12 -12 M1330 1271 l12 -12 M1344 1271 l12 -12 " stroke="#b04a58" stroke-width="1" fill="none"/><rect x="939.5" y="252.5" width="422" height="1018" fill="none" stroke="#b04a58" stroke-width="1.2"/><rect x="942.7" y="255.6" width="417" height="1012" fill="none" stroke="#d8dad5" stroke-width="1.6"/><rect x="939" y="247" width="70.5" height="1028.4" fill="none" stroke="#ff26e2" stroke-width="1.2"/><rect x="1292.4" y="247" width="70.3" height="1028.4" fill="none" stroke="#ff26e2" stroke-width="1.2"/><rect x="1045.4" y="222.2" width="211.1" height="187.8" fill="none" stroke="#ff26e2" stroke-width="1.2"/><rect x="1065.3" y="1200.5" width="171.2" height="69.2" fill="none" stroke="#ff26e2" stroke-width="1.2"/><rect x="957.5" y="265.3" width="34" height="34" fill="#c83434"/><rect x="953.5" y="261.3" width="42" height="42" rx="4" fill="none" stroke="#c83434" stroke-width="1"/><circle cx="974.5" cy="282.3" r="10.9" fill="#001023" stroke="#f0c419" stroke-width="1.8"/><text x="970.4" y="279.8" font-family="Liberation Mono" font-size="17.5" fill="#dcdce0" textLength="8.3" lengthAdjust="spacingAndGlyphs">1</text><text x="961.0" y="295.1" font-family="Liberation Mono" font-size="11" fill="#f4e4e4" fill-opacity="0.8" textLength="27.0" lengthAdjust="spacingAndGlyphs">GPIO0</text><rect x="1310.0" y="265.3" width="34" height="34" fill="#c83434"/><rect x="1306.0" y="261.3" width="42" height="42" rx="4" fill="none" stroke="#c83434" stroke-width="1"/><circle cx="1327.0" cy="282.3" r="10.9" fill="#001023" stroke="#f0c419" stroke-width="1.8"/><text x="1322.8" y="279.8" font-family="Liberation Mono" font-size="17.5" fill="#dcdce0" textLength="8.3" lengthAdjust="spacingAndGlyphs">1</text><text x="1315.8" y="295.1" font-family="Liberation Mono" font-size="11" fill="#f4e4e4" fill-opacity="0.8" textLength="22.4" lengthAdjust="spacingAndGlyphs">VBUS</text><circle cx="974.5" cy="332.71000000000004" r="20.3" fill="none" stroke="#c83434" stroke-width="0.9"/><circle cx="974.5" cy="332.71000000000004" r="16.8" fill="#c83434"/><circle cx="974.5" cy="332.71000000000004" r="10.9" fill="#001023" stroke="#f0c419" stroke-width="1.8"/><text x="970.4" y="330.21000000000004" font-family="Liberation Mono" font-size="17.5" fill="#dcdce0" textLength="8.3" lengthAdjust="spacingAndGlyphs">2</text><text x="961.0" y="345.51000000000005" font-family="Liberation Mono" font-size="11" fill="#f4e4e4" fill-opacity="0.8" textLength="27.0" lengthAdjust="spacingAndGlyphs">GPIO1</text><circle cx="1327.0" cy="332.71000000000004" r="20.3" fill="none" stroke="#c83434" stroke-width="0.9"/><circle cx="1327.0" cy="332.71000000000004" r="16.8" fill="#c83434"/><circle cx="1327.0" cy="332.71000000000004" r="10.9" fill="#001023" stroke="#f0c419" stroke-width="1.8"/><text x="1322.8" y="330.21000000000004" font-family="Liberation Mono" font-size="17.5" fill="#dcdce0" textLength="8.3" lengthAdjust="spacingAndGlyphs">2</text><text x="1311.5" y="345.71000000000004" font-family="Liberation Mono" font-size="6" fill="#f4e4e4" fill-opacity="0.7" textLength="31" lengthAdjust="spacingAndGlyphs">GPIO28_ADC2</text><circle cx="974.5" cy="383.12" r="20.3" fill="none" stroke="#c83434" stroke-width="0.9"/><circle cx="974.5" cy="383.12" r="23.5" fill="none" stroke="#c83434" stroke-opacity="0.55" stroke-width="1"/><circle cx="974.5" cy="383.12" r="16.8" fill="#c83434"/><circle cx="974.5" cy="383.12" r="10.9" fill="#001023" stroke="#f0c419" stroke-width="1.8"/><text x="970.4" y="380.62" font-family="Liberation Mono" font-size="17.5" fill="#dcdce0" textLength="8.3" lengthAdjust="spacingAndGlyphs">3</text><text x="966.1" y="395.92" font-family="Liberation Mono" font-size="11" fill="#f4e4e4" fill-opacity="0.8" textLength="16.8" lengthAdjust="spacingAndGlyphs">GND</text><circle cx="1327.0" cy="383.12" r="20.3" fill="none" stroke="#c83434" stroke-width="0.9"/><circle cx="1327.0" cy="383.12" r="23.5" fill="none" stroke="#c83434" stroke-opacity="0.55" stroke-width="1"/><circle cx="1327.0" cy="383.12" r="16.8" fill="#c83434"/><circle cx="1327.0" cy="383.12" r="10.9" fill="#001023" stroke="#f0c419" stroke-width="1.8"/><text x="1322.8" y="380.62" font-family="Liberation Mono" font-size="17.5" fill="#dcdce0" textLength="8.3" lengthAdjust="spacingAndGlyphs">3</text><text x="1318.6" y="395.92" font-family="Liberation Mono" font-size="11" fill="#f4e4e4" fill-opacity="0.8" textLength="16.8" lengthAdjust="spacingAndGlyphs">GND</text><circle cx="974.5" cy="433.53" r="20.3" fill="none" stroke="#c83434" stroke-width="0.9"/><circle cx="974.5" cy="433.53" r="16.8" fill="#c83434"/><circle cx="974.5" cy="433.53" r="10.9" fill="#001023" stroke="#f0c419" stroke-width="1.8"/><text x="970.4" y="431.03" font-family="Liberation Mono" font-size="17.5" fill="#dcdce0" textLength="8.3" lengthAdjust="spacingAndGlyphs">4</text><text x="961.0" y="446.33" font-family="Liberation Mono" font-size="11" fill="#f4e4e4" fill-opacity="0.8" textLength="27.0" lengthAdjust="spacingAndGlyphs">GPIO2</text><circle cx="1327.0" cy="433.53" r="20.3" fill="none" stroke="#c83434" stroke-width="0.9"/><circle cx="1327.0" cy="433.53" r="16.8" fill="#c83434"/><circle cx="1327.0" cy="433.53" r="10.9" fill="#001023" stroke="#f0c419" stroke-width="1.8"/><text x="1322.8" y="431.03" font-family="Liberation Mono" font-size="17.5" fill="#dcdce0" textLength="8.3" lengthAdjust="spacingAndGlyphs">4</text><text x="1311.5" y="446.53" font-family="Liberation Mono" font-size="6" fill="#f4e4e4" fill-opacity="0.7" textLength="31" lengthAdjust="spacingAndGlyphs">GPIO29_ADC3</text><circle cx="974.5" cy="483.94" r="20.3" fill="none" stroke="#c83434" stroke-width="0.9"/><circle cx="974.5" cy="483.94" r="16.8" fill="#c83434"/><circle cx="974.5" cy="483.94" r="10.9" fill="#001023" stroke="#f0c419" stroke-width="1.8"/><text x="970.4" y="481.44" font-family="Liberation Mono" font-size="17.5" fill="#dcdce0" textLength="8.3" lengthAdjust="spacingAndGlyphs">5</text><text x="961.0" y="496.74" font-family="Liberation Mono" font-size="11" fill="#f4e4e4" fill-opacity="0.8" textLength="27.0" lengthAdjust="spacingAndGlyphs">GPIO3</text><circle cx="1327.0" cy="483.94" r="20.3" fill="none" stroke="#c83434" stroke-width="0.9"/><circle cx="1327.0" cy="483.94" r="16.8" fill="#c83434"/><circle cx="1327.0" cy="483.94" r="10.9" fill="#001023" stroke="#f0c419" stroke-width="1.8"/><text x="1322.8" y="481.44" font-family="Liberation Mono" font-size="17.5" fill="#dcdce0" textLength="8.3" lengthAdjust="spacingAndGlyphs">5</text><text x="1315.8" y="496.74" font-family="Liberation Mono" font-size="11" fill="#f4e4e4" fill-opacity="0.8" textLength="22.4" lengthAdjust="spacingAndGlyphs">+3V3</text><circle cx="974.5" cy="534.35" r="20.3" fill="none" stroke="#c83434" stroke-width="0.9"/><circle cx="974.5" cy="534.35" r="16.8" fill="#c83434"/><circle cx="974.5" cy="534.35" r="10.9" fill="#001023" stroke="#f0c419" stroke-width="1.8"/><text x="970.4" y="531.85" font-family="Liberation Mono" font-size="17.5" fill="#dcdce0" textLength="8.3" lengthAdjust="spacingAndGlyphs">6</text><text x="961.0" y="547.15" font-family="Liberation Mono" font-size="11" fill="#f4e4e4" fill-opacity="0.8" textLength="27.0" lengthAdjust="spacingAndGlyphs">GPIO4</text><circle cx="1327.0" cy="534.35" r="20.3" fill="none" stroke="#c83434" stroke-width="0.9"/><circle cx="1327.0" cy="534.35" r="16.8" fill="#c83434"/><circle cx="1327.0" cy="534.35" r="10.9" fill="#001023" stroke="#f0c419" stroke-width="1.8"/><text x="1322.8" y="531.85" font-family="Liberation Mono" font-size="17.5" fill="#dcdce0" textLength="8.3" lengthAdjust="spacingAndGlyphs">6</text><text x="1311.5" y="547.35" font-family="Liberation Mono" font-size="6" fill="#f4e4e4" fill-opacity="0.7" textLength="31" lengthAdjust="spacingAndGlyphs">GPIO27_ADC1</text><circle cx="974.5" cy="584.76" r="20.3" fill="none" stroke="#c83434" stroke-width="0.9"/><circle cx="974.5" cy="584.76" r="16.8" fill="#c83434"/><circle cx="974.5" cy="584.76" r="10.9" fill="#001023" stroke="#f0c419" stroke-width="1.8"/><text x="970.4" y="582.26" font-family="Liberation Mono" font-size="17.5" fill="#dcdce0" textLength="8.3" lengthAdjust="spacingAndGlyphs">7</text><text x="961.0" y="597.56" font-family="Liberation Mono" font-size="11" fill="#f4e4e4" fill-opacity="0.8" textLength="27.0" lengthAdjust="spacingAndGlyphs">GPIO5</text><circle cx="1327.0" cy="584.76" r="20.3" fill="none" stroke="#c83434" stroke-width="0.9"/><circle cx="1327.0" cy="584.76" r="16.8" fill="#c83434"/><circle cx="1327.0" cy="584.76" r="10.9" fill="#001023" stroke="#f0c419" stroke-width="1.8"/><text x="1322.8" y="582.26" font-family="Liberation Mono" font-size="17.5" fill="#dcdce0" textLength="8.3" lengthAdjust="spacingAndGlyphs">7</text><text x="1311.5" y="597.76" font-family="Liberation Mono" font-size="6" fill="#f4e4e4" fill-opacity="0.7" textLength="31" lengthAdjust="spacingAndGlyphs">GPIO26_ADC0</text><circle cx="974.5" cy="635.1700000000001" r="20.3" fill="none" stroke="#c83434" stroke-width="0.9"/><circle cx="974.5" cy="635.1700000000001" r="23.5" fill="none" stroke="#c83434" stroke-opacity="0.55" stroke-width="1"/><circle cx="974.5" cy="635.1700000000001" r="16.8" fill="#c83434"/><circle cx="974.5" cy="635.1700000000001" r="10.9" fill="#001023" stroke="#f0c419" stroke-width="1.8"/><text x="970.4" y="632.6700000000001" font-family="Liberation Mono" font-size="17.5" fill="#dcdce0" textLength="8.3" lengthAdjust="spacingAndGlyphs">8</text><text x="966.1" y="647.97" font-family="Liberation Mono" font-size="11" fill="#f4e4e4" fill-opacity="0.8" textLength="16.8" lengthAdjust="spacingAndGlyphs">GND</text><circle cx="1327.0" cy="635.1700000000001" r="20.3" fill="none" stroke="#c83434" stroke-width="0.9"/><circle cx="1327.0" cy="635.1700000000001" r="23.5" fill="none" stroke="#c83434" stroke-opacity="0.55" stroke-width="1"/><circle cx="1327.0" cy="635.1700000000001" r="16.8" fill="#c83434"/><circle cx="1327.0" cy="635.1700000000001" r="10.9" fill="#001023" stroke="#f0c419" stroke-width="1.8"/><text x="1322.8" y="632.6700000000001" font-family="Liberation Mono" font-size="17.5" fill="#dcdce0" textLength="8.3" lengthAdjust="spacingAndGlyphs">8</text><text x="1318.6" y="647.97" font-family="Liberation Mono" font-size="11" fill="#f4e4e4" fill-opacity="0.8" textLength="16.8" lengthAdjust="spacingAndGlyphs">GND</text><circle cx="974.5" cy="685.5799999999999" r="20.3" fill="none" stroke="#c83434" stroke-width="0.9"/><circle cx="974.5" cy="685.5799999999999" r="16.8" fill="#c83434"/><circle cx="974.5" cy="685.5799999999999" r="10.9" fill="#001023" stroke="#f0c419" stroke-width="1.8"/><text x="970.4" y="683.0799999999999" font-family="Liberation Mono" font-size="17.5" fill="#dcdce0" textLength="8.3" lengthAdjust="spacingAndGlyphs">9</text><text x="961.0" y="698.3799999999999" font-family="Liberation Mono" font-size="11" fill="#f4e4e4" fill-opacity="0.8" textLength="27.0" lengthAdjust="spacingAndGlyphs">GPIO6</text><circle cx="1327.0" cy="685.5799999999999" r="20.3" fill="none" stroke="#c83434" stroke-width="0.9"/><circle cx="1327.0" cy="685.5799999999999" r="16.8" fill="#c83434"/><circle cx="1327.0" cy="685.5799999999999" r="10.9" fill="#001023" stroke="#f0c419" stroke-width="1.8"/><text x="1322.8" y="683.0799999999999" font-family="Liberation Mono" font-size="17.5" fill="#dcdce0" textLength="8.3" lengthAdjust="spacingAndGlyphs">9</text><text x="1313.5" y="698.3799999999999" font-family="Liberation Mono" font-size="11" fill="#f4e4e4" fill-opacity="0.8" textLength="27.0" lengthAdjust="spacingAndGlyphs">GPIO24</text><circle cx="974.5" cy="735.99" r="20.3" fill="none" stroke="#c83434" stroke-width="0.9"/><circle cx="974.5" cy="735.99" r="16.8" fill="#c83434"/><circle cx="974.5" cy="735.99" r="10.9" fill="#001023" stroke="#f0c419" stroke-width="1.8"/><text x="966.2" y="733.49" font-family="Liberation Mono" font-size="17.5" fill="#dcdce0" textLength="16.6" lengthAdjust="spacingAndGlyphs">10</text><text x="961.0" y="748.79" font-family="Liberation Mono" font-size="11" fill="#f4e4e4" fill-opacity="0.8" textLength="27.0" lengthAdjust="spacingAndGlyphs">GPIO7</text><circle cx="1327.0" cy="735.99" r="20.3" fill="none" stroke="#c83434" stroke-width="0.9"/><circle cx="1327.0" cy="735.99" r="16.8" fill="#c83434"/><circle cx="1327.0" cy="735.99" r="10.9" fill="#001023" stroke="#f0c419" stroke-width="1.8"/><text x="1318.7" y="733.49" font-family="Liberation Mono" font-size="17.5" fill="#dcdce0" textLength="16.6" lengthAdjust="spacingAndGlyphs">10</text><text x="1313.5" y="748.79" font-family="Liberation Mono" font-size="11" fill="#f4e4e4" fill-opacity="0.8" textLength="27.0" lengthAdjust="spacingAndGlyphs">GPIO23</text><circle cx="974.5" cy="786.4" r="20.3" fill="none" stroke="#c83434" stroke-width="0.9"/><circle cx="974.5" cy="786.4" r="16.8" fill="#c83434"/><circle cx="974.5" cy="786.4" r="10.9" fill="#001023" stroke="#f0c419" stroke-width="1.8"/><text x="966.2" y="783.9" font-family="Liberation Mono" font-size="17.5" fill="#dcdce0" textLength="16.6" lengthAdjust="spacingAndGlyphs">11</text><text x="961.0" y="799.1999999999999" font-family="Liberation Mono" font-size="11" fill="#f4e4e4" fill-opacity="0.8" textLength="27.0" lengthAdjust="spacingAndGlyphs">GPIO8</text><circle cx="1327.0" cy="786.4" r="20.3" fill="none" stroke="#c83434" stroke-width="0.9"/><circle cx="1327.0" cy="786.4" r="16.8" fill="#c83434"/><circle cx="1327.0" cy="786.4" r="10.9" fill="#001023" stroke="#f0c419" stroke-width="1.8"/><text x="1318.7" y="783.9" font-family="Liberation Mono" font-size="17.5" fill="#dcdce0" textLength="16.6" lengthAdjust="spacingAndGlyphs">11</text><text x="1318.6" y="799.1999999999999" font-family="Liberation Mono" font-size="11" fill="#f4e4e4" fill-opacity="0.8" textLength="16.8" lengthAdjust="spacingAndGlyphs">RUN</text><circle cx="974.5" cy="836.81" r="20.3" fill="none" stroke="#c83434" stroke-width="0.9"/><circle cx="974.5" cy="836.81" r="16.8" fill="#c83434"/><circle cx="974.5" cy="836.81" r="10.9" fill="#001023" stroke="#f0c419" stroke-width="1.8"/><text x="966.2" y="834.31" font-family="Liberation Mono" font-size="17.5" fill="#dcdce0" textLength="16.6" lengthAdjust="spacingAndGlyphs">12</text><text x="961.0" y="849.6099999999999" font-family="Liberation Mono" font-size="11" fill="#f4e4e4" fill-opacity="0.8" textLength="27.0" lengthAdjust="spacingAndGlyphs">GPIO9</text><circle cx="1327.0" cy="836.81" r="20.3" fill="none" stroke="#c83434" stroke-width="0.9"/><circle cx="1327.0" cy="836.81" r="16.8" fill="#c83434"/><circle cx="1327.0" cy="836.81" r="10.9" fill="#001023" stroke="#f0c419" stroke-width="1.8"/><text x="1318.7" y="834.31" font-family="Liberation Mono" font-size="17.5" fill="#dcdce0" textLength="16.6" lengthAdjust="spacingAndGlyphs">12</text><text x="1313.5" y="849.6099999999999" font-family="Liberation Mono" font-size="11" fill="#f4e4e4" fill-opacity="0.8" textLength="27.0" lengthAdjust="spacingAndGlyphs">GPIO22</text><circle cx="974.5" cy="887.22" r="20.3" fill="none" stroke="#c83434" stroke-width="0.9"/><circle cx="974.5" cy="887.22" r="23.5" fill="none" stroke="#c83434" stroke-opacity="0.55" stroke-width="1"/><circle cx="974.5" cy="887.22" r="16.8" fill="#c83434"/><circle cx="974.5" cy="887.22" r="10.9" fill="#001023" stroke="#f0c419" stroke-width="1.8"/><text x="966.2" y="884.72" font-family="Liberation Mono" font-size="17.5" fill="#dcdce0" textLength="16.6" lengthAdjust="spacingAndGlyphs">13</text><text x="966.1" y="900.02" font-family="Liberation Mono" font-size="11" fill="#f4e4e4" fill-opacity="0.8" textLength="16.8" lengthAdjust="spacingAndGlyphs">GND</text><circle cx="1327.0" cy="887.22" r="20.3" fill="none" stroke="#c83434" stroke-width="0.9"/><circle cx="1327.0" cy="887.22" r="23.5" fill="none" stroke="#c83434" stroke-opacity="0.55" stroke-width="1"/><circle cx="1327.0" cy="887.22" r="16.8" fill="#c83434"/><circle cx="1327.0" cy="887.22" r="10.9" fill="#001023" stroke="#f0c419" stroke-width="1.8"/><text x="1318.7" y="884.72" font-family="Liberation Mono" font-size="17.5" fill="#dcdce0" textLength="16.6" lengthAdjust="spacingAndGlyphs">13</text><text x="1318.6" y="900.02" font-family="Liberation Mono" font-size="11" fill="#f4e4e4" fill-opacity="0.8" textLength="16.8" lengthAdjust="spacingAndGlyphs">GND</text><circle cx="974.5" cy="937.6299999999999" r="20.3" fill="none" stroke="#c83434" stroke-width="0.9"/><circle cx="974.5" cy="937.6299999999999" r="16.8" fill="#c83434"/><circle cx="974.5" cy="937.6299999999999" r="10.9" fill="#001023" stroke="#f0c419" stroke-width="1.8"/><text x="966.2" y="935.1299999999999" font-family="Liberation Mono" font-size="17.5" fill="#dcdce0" textLength="16.6" lengthAdjust="spacingAndGlyphs">14</text><text x="961.0" y="950.4299999999998" font-family="Liberation Mono" font-size="11" fill="#f4e4e4" fill-opacity="0.8" textLength="27.0" lengthAdjust="spacingAndGlyphs">GPIO10</text><circle cx="1327.0" cy="937.6299999999999" r="20.3" fill="none" stroke="#c83434" stroke-width="0.9"/><circle cx="1327.0" cy="937.6299999999999" r="16.8" fill="#c83434"/><circle cx="1327.0" cy="937.6299999999999" r="10.9" fill="#001023" stroke="#f0c419" stroke-width="1.8"/><text x="1318.7" y="935.1299999999999" font-family="Liberation Mono" font-size="17.5" fill="#dcdce0" textLength="16.6" lengthAdjust="spacingAndGlyphs">14</text><text x="1313.5" y="950.4299999999998" font-family="Liberation Mono" font-size="11" fill="#f4e4e4" fill-opacity="0.8" textLength="27.0" lengthAdjust="spacingAndGlyphs">GPIO21</text><circle cx="974.5" cy="988.04" r="20.3" fill="none" stroke="#c83434" stroke-width="0.9"/><circle cx="974.5" cy="988.04" r="16.8" fill="#c83434"/><circle cx="974.5" cy="988.04" r="10.9" fill="#001023" stroke="#f0c419" stroke-width="1.8"/><text x="966.2" y="985.54" font-family="Liberation Mono" font-size="17.5" fill="#dcdce0" textLength="16.6" lengthAdjust="spacingAndGlyphs">15</text><text x="961.0" y="1000.8399999999999" font-family="Liberation Mono" font-size="11" fill="#f4e4e4" fill-opacity="0.8" textLength="27.0" lengthAdjust="spacingAndGlyphs">GPIO11</text><circle cx="1327.0" cy="988.04" r="20.3" fill="none" stroke="#c83434" stroke-width="0.9"/><circle cx="1327.0" cy="988.04" r="16.8" fill="#c83434"/><circle cx="1327.0" cy="988.04" r="10.9" fill="#001023" stroke="#f0c419" stroke-width="1.8"/><text x="1318.7" y="985.54" font-family="Liberation Mono" font-size="17.5" fill="#dcdce0" textLength="16.6" lengthAdjust="spacingAndGlyphs">15</text><text x="1313.5" y="1000.8399999999999" font-family="Liberation Mono" font-size="11" fill="#f4e4e4" fill-opacity="0.8" textLength="27.0" lengthAdjust="spacingAndGlyphs">GPIO20</text><circle cx="974.5" cy="1038.45" r="20.3" fill="none" stroke="#c83434" stroke-width="0.9"/><circle cx="974.5" cy="1038.45" r="16.8" fill="#c83434"/><circle cx="974.5" cy="1038.45" r="10.9" fill="#001023" stroke="#f0c419" stroke-width="1.8"/><text x="966.2" y="1035.95" font-family="Liberation Mono" font-size="17.5" fill="#dcdce0" textLength="16.6" lengthAdjust="spacingAndGlyphs">16</text><text x="961.0" y="1051.25" font-family="Liberation Mono" font-size="11" fill="#f4e4e4" fill-opacity="0.8" textLength="27.0" lengthAdjust="spacingAndGlyphs">GPIO12</text><circle cx="1327.0" cy="1038.45" r="20.3" fill="none" stroke="#c83434" stroke-width="0.9"/><circle cx="1327.0" cy="1038.45" r="16.8" fill="#c83434"/><circle cx="1327.0" cy="1038.45" r="10.9" fill="#001023" stroke="#f0c419" stroke-width="1.8"/><text x="1318.7" y="1035.95" font-family="Liberation Mono" font-size="17.5" fill="#dcdce0" textLength="16.6" lengthAdjust="spacingAndGlyphs">16</text><text x="1313.5" y="1051.25" font-family="Liberation Mono" font-size="11" fill="#f4e4e4" fill-opacity="0.8" textLength="27.0" lengthAdjust="spacingAndGlyphs">GPIO19</text><circle cx="974.5" cy="1088.86" r="20.3" fill="none" stroke="#c83434" stroke-width="0.9"/><circle cx="974.5" cy="1088.86" r="16.8" fill="#c83434"/><circle cx="974.5" cy="1088.86" r="10.9" fill="#001023" stroke="#f0c419" stroke-width="1.8"/><text x="966.2" y="1086.36" font-family="Liberation Mono" font-size="17.5" fill="#dcdce0" textLength="16.6" lengthAdjust="spacingAndGlyphs">17</text><text x="961.0" y="1101.6599999999999" font-family="Liberation Mono" font-size="11" fill="#f4e4e4" fill-opacity="0.8" textLength="27.0" lengthAdjust="spacingAndGlyphs">GPIO13</text><circle cx="1327.0" cy="1088.86" r="20.3" fill="none" stroke="#c83434" stroke-width="0.9"/><circle cx="1327.0" cy="1088.86" r="16.8" fill="#c83434"/><circle cx="1327.0" cy="1088.86" r="10.9" fill="#001023" stroke="#f0c419" stroke-width="1.8"/><text x="1318.7" y="1086.36" font-family="Liberation Mono" font-size="17.5" fill="#dcdce0" textLength="16.6" lengthAdjust="spacingAndGlyphs">17</text><text x="1313.5" y="1101.6599999999999" font-family="Liberation Mono" font-size="11" fill="#f4e4e4" fill-opacity="0.8" textLength="27.0" lengthAdjust="spacingAndGlyphs">GPIO18</text><circle cx="974.5" cy="1139.27" r="20.3" fill="none" stroke="#c83434" stroke-width="0.9"/><circle cx="974.5" cy="1139.27" r="23.5" fill="none" stroke="#c83434" stroke-opacity="0.55" stroke-width="1"/><circle cx="974.5" cy="1139.27" r="16.8" fill="#c83434"/><circle cx="974.5" cy="1139.27" r="10.9" fill="#001023" stroke="#f0c419" stroke-width="1.8"/><text x="966.2" y="1136.77" font-family="Liberation Mono" font-size="17.5" fill="#dcdce0" textLength="16.6" lengthAdjust="spacingAndGlyphs">18</text><text x="966.1" y="1152.07" font-family="Liberation Mono" font-size="11" fill="#f4e4e4" fill-opacity="0.8" textLength="16.8" lengthAdjust="spacingAndGlyphs">GND</text><circle cx="1327.0" cy="1139.27" r="20.3" fill="none" stroke="#c83434" stroke-width="0.9"/><circle cx="1327.0" cy="1139.27" r="23.5" fill="none" stroke="#c83434" stroke-opacity="0.55" stroke-width="1"/><circle cx="1327.0" cy="1139.27" r="16.8" fill="#c83434"/><circle cx="1327.0" cy="1139.27" r="10.9" fill="#001023" stroke="#f0c419" stroke-width="1.8"/><text x="1318.7" y="1136.77" font-family="Liberation Mono" font-size="17.5" fill="#dcdce0" textLength="16.6" lengthAdjust="spacingAndGlyphs">18</text><text x="1318.6" y="1152.07" font-family="Liberation Mono" font-size="11" fill="#f4e4e4" fill-opacity="0.8" textLength="16.8" lengthAdjust="spacingAndGlyphs">GND</text><circle cx="974.5" cy="1189.6799999999998" r="20.3" fill="none" stroke="#c83434" stroke-width="0.9"/><circle cx="974.5" cy="1189.6799999999998" r="16.8" fill="#c83434"/><circle cx="974.5" cy="1189.6799999999998" r="10.9" fill="#001023" stroke="#f0c419" stroke-width="1.8"/><text x="966.2" y="1187.1799999999998" font-family="Liberation Mono" font-size="17.5" fill="#dcdce0" textLength="16.6" lengthAdjust="spacingAndGlyphs">19</text><text x="961.0" y="1202.4799999999998" font-family="Liberation Mono" font-size="11" fill="#f4e4e4" fill-opacity="0.8" textLength="27.0" lengthAdjust="spacingAndGlyphs">GPIO14</text><circle cx="1327.0" cy="1189.6799999999998" r="20.3" fill="none" stroke="#c83434" stroke-width="0.9"/><circle cx="1327.0" cy="1189.6799999999998" r="16.8" fill="#c83434"/><circle cx="1327.0" cy="1189.6799999999998" r="10.9" fill="#001023" stroke="#f0c419" stroke-width="1.8"/><text x="1318.7" y="1187.1799999999998" font-family="Liberation Mono" font-size="17.5" fill="#dcdce0" textLength="16.6" lengthAdjust="spacingAndGlyphs">19</text><text x="1313.5" y="1202.4799999999998" font-family="Liberation Mono" font-size="11" fill="#f4e4e4" fill-opacity="0.8" textLength="27.0" lengthAdjust="spacingAndGlyphs">GPIO17</text><circle cx="974.5" cy="1240.09" r="20.3" fill="none" stroke="#c83434" stroke-width="0.9"/><circle cx="974.5" cy="1240.09" r="16.8" fill="#c83434"/><circle cx="974.5" cy="1240.09" r="10.9" fill="#001023" stroke="#f0c419" stroke-width="1.8"/><text x="966.2" y="1237.59" font-family="Liberation Mono" font-size="17.5" fill="#dcdce0" textLength="16.6" lengthAdjust="spacingAndGlyphs">20</text><text x="961.0" y="1252.8899999999999" font-family="Liberation Mono" font-size="11" fill="#f4e4e4" fill-opacity="0.8" textLength="27.0" lengthAdjust="spacingAndGlyphs">GPIO15</text><circle cx="1327.0" cy="1240.09" r="20.3" fill="none" stroke="#c83434" stroke-width="0.9"/><circle cx="1327.0" cy="1240.09" r="16.8" fill="#c83434"/><circle cx="1327.0" cy="1240.09" r="10.9" fill="#001023" stroke="#f0c419" stroke-width="1.8"/><text x="1318.7" y="1237.59" font-family="Liberation Mono" font-size="17.5" fill="#dcdce0" textLength="16.6" lengthAdjust="spacingAndGlyphs">20</text><text x="1313.5" y="1252.8899999999999" font-family="Liberation Mono" font-size="11" fill="#f4e4e4" fill-opacity="0.8" textLength="27.0" lengthAdjust="spacingAndGlyphs">GPIO16</text><rect x="1083.2" y="1218.5" width="34" height="34" fill="#c83434"/><rect x="1079.2" y="1214.5" width="42" height="42" rx="4" fill="none" stroke="#c83434" stroke-width="1"/><circle cx="1100.2" cy="1235.5" r="10.9" fill="#001023" stroke="#f0c419" stroke-width="1.8"/><text x="1096.0" y="1233.0" font-family="Liberation Mono" font-size="17.5" fill="#dcdce0" textLength="8.3" lengthAdjust="spacingAndGlyphs">1</text><text x="1086.7" y="1248.3" font-family="Liberation Mono" font-size="11" fill="#f4e4e4" fill-opacity="0.8" textLength="27.0" lengthAdjust="spacingAndGlyphs">SWCLK</text><circle cx="1150.6000000000001" cy="1235.5" r="20.3" fill="none" stroke="#c83434" stroke-width="0.9"/><circle cx="1150.6000000000001" cy="1235.5" r="23.5" fill="none" stroke="#c83434" stroke-opacity="0.55" stroke-width="1"/><circle cx="1150.6000000000001" cy="1235.5" r="16.8" fill="#c83434"/><circle cx="1150.6000000000001" cy="1235.5" r="10.9" fill="#001023" stroke="#f0c419" stroke-width="1.8"/><text x="1146.5" y="1233.0" font-family="Liberation Mono" font-size="17.5" fill="#dcdce0" textLength="8.3" lengthAdjust="spacingAndGlyphs">2</text><text x="1142.2" y="1248.3" font-family="Liberation Mono" font-size="11" fill="#f4e4e4" fill-opacity="0.8" textLength="16.8" lengthAdjust="spacingAndGlyphs">GND</text><circle cx="1201.0" cy="1235.5" r="20.3" fill="none" stroke="#c83434" stroke-width="0.9"/><circle cx="1201.0" cy="1235.5" r="16.8" fill="#c83434"/><circle cx="1201.0" cy="1235.5" r="10.9" fill="#001023" stroke="#f0c419" stroke-width="1.8"/><text x="1196.8" y="1233.0" font-family="Liberation Mono" font-size="17.5" fill="#dcdce0" textLength="8.3" lengthAdjust="spacingAndGlyphs">3</text><text x="1192.6" y="1248.3" font-family="Liberation Mono" font-size="11" fill="#f4e4e4" fill-opacity="0.8" textLength="16.8" lengthAdjust="spacingAndGlyphs">SWD</text><rect x="1053.3" y="264" width="24" height="40" rx="12" fill="none" stroke="#c83434" stroke-width="0.9"/><rect x="1055.8999999999999" y="267" width="18.8" height="34" rx="9.4" fill="#c83434"/><rect x="1058.8" y="270" width="13" height="28" rx="6.5" fill="#001023" stroke="#f0c419" stroke-width="1.8"/><text x="1065.3" y="288" font-family="Liberation Mono" font-size="6" fill="#f0e0e0" fill-opacity="0.7" text-anchor="middle" transform="rotate(-90 1065.3 284)">S1 GND</text><rect x="1225" y="264" width="24" height="40" rx="12" fill="none" stroke="#c83434" stroke-width="0.9"/><rect x="1227.6" y="267" width="18.8" height="34" rx="9.4" fill="#c83434"/><rect x="1230.5" y="270" width="13" height="28" rx="6.5" fill="#001023" stroke="#f0c419" stroke-width="1.8"/><text x="1237" y="288" font-family="Liberation Mono" font-size="6" fill="#f0e0e0" fill-opacity="0.7" text-anchor="middle" transform="rotate(-90 1237 284)">S1 GND</text><rect x="1053.3" y="346.8" width="24" height="40" rx="12" fill="none" stroke="#c83434" stroke-width="0.9"/><rect x="1055.8999999999999" y="349.8" width="18.8" height="34" rx="9.4" fill="#c83434"/><rect x="1058.8" y="352.8" width="13" height="28" rx="6.5" fill="#001023" stroke="#f0c419" stroke-width="1.8"/><text x="1065.3" y="370.8" font-family="Liberation Mono" font-size="6" fill="#f0e0e0" fill-opacity="0.7" text-anchor="middle" transform="rotate(-90 1065.3 366.8)">S1 GND</text><rect x="1225" y="346.8" width="24" height="40" rx="12" fill="none" stroke="#c83434" stroke-width="0.9"/><rect x="1227.6" y="349.8" width="18.8" height="34" rx="9.4" fill="#c83434"/><rect x="1230.5" y="352.8" width="13" height="28" rx="6.5" fill="#001023" stroke="#f0c419" stroke-width="1.8"/><text x="1237" y="370.8" font-family="Liberation Mono" font-size="6" fill="#f0e0e0" fill-opacity="0.7" text-anchor="middle" transform="rotate(-90 1237 366.8)">S1 GND</text><circle cx="1093.8" cy="356.5" r="8.8" fill="#1ec0d0"/><circle cx="1208.5" cy="356.5" r="8.8" fill="#1ec0d0"/><rect x="1080.8" y="371" width="12.1" height="28" fill="#c83434"/><rect x="1096.3" y="371" width="11.3" height="28" fill="#c83434"/><rect x="1112.7" y="371" width="6.1" height="28" fill="#c83434"/><rect x="1123" y="371" width="6.0" height="28" fill="#c83434"/><rect x="1132.6" y="371" width="6.0" height="28" fill="#c83434"/><rect x="1142" y="371" width="7.0" height="28" fill="#c83434"/><rect x="1152.4" y="371" width="6.9" height="28" fill="#c83434"/><rect x="1162.8" y="371" width="6.0" height="28" fill="#c83434"/><rect x="1172.3" y="371" width="6.0" height="28" fill="#c83434"/><rect x="1181.8" y="371" width="6.9" height="28" fill="#c83434"/><rect x="1193.8" y="371" width="12.1" height="28" fill="#c83434"/><rect x="1209.4" y="371" width="11.2" height="28" fill="#c83434"/><rect x="1077" y="368" width="147" height="35" rx="3" fill="none" stroke="#c83434" stroke-width="0.8"/><rect x="1102" y="792" width="97" height="96" fill="none" stroke="#c83434" stroke-width="1"/><rect x="1118.8" y="808.4" width="64.7" height="63" fill="#c83434"/><text x="1151" y="836.5" font-family="Liberation Sans" font-size="27" fill="#f4d0d0" text-anchor="middle">57</text><text x="1151" y="865" font-family="Liberation Sans" font-size="19" fill="#f4d0d0" text-anchor="middle">GND</text><rect x="1081.5" y="770" width="139" height="139" fill="none" stroke="#ff26e2" stroke-width="1" stroke-opacity="0.7"/><rect x="1048" y="664" width="80" height="46" fill="none" stroke="#ff26e2" stroke-width="1"/><rect x="1080" y="672" width="10" height="36" rx="2" fill="none" stroke="#c83434" stroke-width="1"/><rect x="1084" y="678" width="3" height="24" fill="#c83434"/><rect x="1099.0" y="964.0" width="26.7" height="22.5" rx="4" fill="#c83434" /><text x="1112.3" y="974.5" font-family="Liberation Mono" font-size="11" fill="#f0e0e0" text-anchor="middle">2</text><text x="1112.3" y="984.5" font-family="Liberation Mono" font-size="9" fill="#f0e0e0" text-anchor="middle">GND</text><rect x="1142.0" y="964.0" width="26.7" height="22.5" rx="4" fill="#c83434" /><text x="1155.3" y="974.5" font-family="Liberation Mono" font-size="11" fill="#f0e0e0" text-anchor="middle">1</text><rect x="1099.0" y="997.7" width="26.7" height="22.5" rx="4" fill="#c83434" /><text x="1112.3" y="1008.2" font-family="Liberation Mono" font-size="11" fill="#f0e0e0" text-anchor="middle">3</text><text x="1112.3" y="1018.2" font-family="Liberation Mono" font-size="9" fill="#f0e0e0" text-anchor="middle">XIN</text><rect x="1142.0" y="997.7" width="26.7" height="22.5" rx="4" fill="#c83434" /><text x="1155.3" y="1008.2" font-family="Liberation Mono" font-size="11" fill="#f0e0e0" text-anchor="middle">4</text><text x="1155.3" y="1018.2" font-family="Liberation Mono" font-size="9" fill="#f0e0e0" text-anchor="middle">GND</text><rect x="1092" y="957" width="83.7" height="69" fill="none" stroke="#ff26e2" stroke-width="1"/><rect x="1059.0" y="419.0" width="17.0" height="17.0" rx="2.5" fill="#c83434" /><rect x="1057.0" y="417.0" width="21.0" height="21.0" rx="3" fill="none" stroke="#c83434" stroke-width="0.7" stroke-opacity="0.8"/><rect x="1089.0" y="417.0" width="20.0" height="22.0" rx="2.5" fill="#c83434" /><rect x="1087.0" y="415.0" width="24.0" height="26.0" rx="3" fill="none" stroke="#c83434" stroke-width="0.7" stroke-opacity="0.8"/><rect x="1118.5" y="415.6" width="12.5" height="12.5" rx="2.5" fill="#c83434" /><rect x="1116.5" y="413.6" width="16.5" height="16.5" rx="3" fill="none" stroke="#c83434" stroke-width="0.7" stroke-opacity="0.8"/><rect x="1118.5" y="434.5" width="12.5" height="12.5" rx="2.5" fill="#c83434" /><rect x="1116.5" y="432.5" width="16.5" height="16.5" rx="3" fill="none" stroke="#c83434" stroke-width="0.7" stroke-opacity="0.8"/><rect x="1172.0" y="414.0" width="14.0" height="14.0" rx="2.5" fill="#c83434" /><rect x="1170.0" y="412.0" width="18.0" height="18.0" rx="3" fill="none" stroke="#c83434" stroke-width="0.7" stroke-opacity="0.8"/><rect x="1172.0" y="433.0" width="14.0" height="13.0" rx="2.5" fill="#c83434" /><rect x="1170.0" y="431.0" width="18.0" height="17.0" rx="3" fill="none" stroke="#c83434" stroke-width="0.7" stroke-opacity="0.8"/><rect x="1095.0" y="455.0" width="16.0" height="25.0" rx="2.5" fill="#c83434" /><rect x="1093.0" y="453.0" width="20.0" height="29.0" rx="3" fill="none" stroke="#c83434" stroke-width="0.7" stroke-opacity="0.8"/><rect x="1078.0" y="488.0" width="12.0" height="28.0" rx="2.5" fill="#c83434" /><rect x="1076.0" y="486.0" width="16.0" height="32.0" rx="3" fill="none" stroke="#c83434" stroke-width="0.7" stroke-opacity="0.8"/><rect x="1114.0" y="488.0" width="14.0" height="28.0" rx="2.5" fill="#c83434" /><rect x="1112.0" y="486.0" width="18.0" height="32.0" rx="3" fill="none" stroke="#c83434" stroke-width="0.7" stroke-opacity="0.8"/><rect x="1078.0" y="530.0" width="22.0" height="22.0" rx="2.5" fill="#c83434" /><rect x="1076.0" y="528.0" width="26.0" height="26.0" rx="3" fill="none" stroke="#c83434" stroke-width="0.7" stroke-opacity="0.8"/><rect x="1107.5" y="530.0" width="20.5" height="22.0" rx="2.5" fill="#c83434" /><rect x="1105.5" y="528.0" width="24.5" height="26.0" rx="3" fill="none" stroke="#c83434" stroke-width="0.7" stroke-opacity="0.8"/><rect x="1192.0" y="477.0" width="39.4" height="17.0" rx="2.5" fill="#c83434" /><rect x="1190.0" y="475.0" width="43.4" height="21.0" rx="3" fill="none" stroke="#c83434" stroke-width="0.7" stroke-opacity="0.8"/><rect x="1192.0" y="561.5" width="39.0" height="17.5" rx="2.5" fill="#c83434" /><rect x="1190.0" y="559.5" width="43.0" height="21.5" rx="3" fill="none" stroke="#c83434" stroke-width="0.7" stroke-opacity="0.8"/><rect x="1203.0" y="588.0" width="14.0" height="14.0" rx="2.5" fill="#c83434" /><rect x="1201.0" y="586.0" width="18.0" height="18.0" rx="3" fill="none" stroke="#c83434" stroke-width="0.7" stroke-opacity="0.8"/><rect x="1223.6" y="588.0" width="14.0" height="14.0" rx="2.5" fill="#c83434" /><rect x="1221.6" y="586.0" width="18.0" height="18.0" rx="3" fill="none" stroke="#c83434" stroke-width="0.7" stroke-opacity="0.8"/><rect x="1049.0" y="641.5" width="12.0" height="15.0" rx="2.5" fill="#c83434" /><rect x="1047.0" y="639.5" width="16.0" height="19.0" rx="3" fill="none" stroke="#c83434" stroke-width="0.7" stroke-opacity="0.8"/><rect x="1066.0" y="641.5" width="12.0" height="15.0" rx="2.5" fill="#c83434" /><rect x="1064.0" y="639.5" width="16.0" height="19.0" rx="3" fill="none" stroke="#c83434" stroke-width="0.7" stroke-opacity="0.8"/><rect x="1088.0" y="641.5" width="12.0" height="15.0" rx="2.5" fill="#c83434" /><rect x="1086.0" y="639.5" width="16.0" height="19.0" rx="3" fill="none" stroke="#c83434" stroke-width="0.7" stroke-opacity="0.8"/><rect x="1106.0" y="641.5" width="12.0" height="15.0" rx="2.5" fill="#c83434" /><rect x="1104.0" y="639.5" width="16.0" height="19.0" rx="3" fill="none" stroke="#c83434" stroke-width="0.7" stroke-opacity="0.8"/><rect x="1148.0" y="663.0" width="12.0" height="12.0" rx="2.5" fill="#c83434" /><rect x="1146.0" y="661.0" width="16.0" height="16.0" rx="3" fill="none" stroke="#c83434" stroke-width="0.7" stroke-opacity="0.8"/><rect x="1168.0" y="663.0" width="12.0" height="12.0" rx="2.5" fill="#c83434" /><rect x="1166.0" y="661.0" width="16.0" height="16.0" rx="3" fill="none" stroke="#c83434" stroke-width="0.7" stroke-opacity="0.8"/><rect x="1148.0" y="690.0" width="12.0" height="12.0" rx="2.5" fill="#c83434" /><rect x="1146.0" y="688.0" width="16.0" height="16.0" rx="3" fill="none" stroke="#c83434" stroke-width="0.7" stroke-opacity="0.8"/><rect x="1168.0" y="690.0" width="12.0" height="12.0" rx="2.5" fill="#c83434" /><rect x="1166.0" y="688.0" width="16.0" height="16.0" rx="3" fill="none" stroke="#c83434" stroke-width="0.7" stroke-opacity="0.8"/><rect x="1190.0" y="652.0" width="12.0" height="12.0" rx="2.5" fill="#c83434" /><rect x="1188.0" y="650.0" width="16.0" height="16.0" rx="3" fill="none" stroke="#c83434" stroke-width="0.7" stroke-opacity="0.8"/><rect x="1190.0" y="670.0" width="12.0" height="12.0" rx="2.5" fill="#c83434" /><rect x="1188.0" y="668.0" width="16.0" height="16.0" rx="3" fill="none" stroke="#c83434" stroke-width="0.7" stroke-opacity="0.8"/><rect x="1156.0" y="723.0" width="12.0" height="12.0" rx="2.5" fill="#c83434" /><rect x="1154.0" y="721.0" width="16.0" height="16.0" rx="3" fill="none" stroke="#c83434" stroke-width="0.7" stroke-opacity="0.8"/><rect x="1176.0" y="723.0" width="12.0" height="12.0" rx="2.5" fill="#c83434" /><rect x="1174.0" y="721.0" width="16.0" height="16.0" rx="3" fill="none" stroke="#c83434" stroke-width="0.7" stroke-opacity="0.8"/><rect x="1156.0" y="745.0" width="12.0" height="12.0" rx="2.5" fill="#c83434" /><rect x="1154.0" y="743.0" width="16.0" height="16.0" rx="3" fill="none" stroke="#c83434" stroke-width="0.7" stroke-opacity="0.8"/><rect x="1176.0" y="745.0" width="12.0" height="12.0" rx="2.5" fill="#c83434" /><rect x="1174.0" y="743.0" width="16.0" height="16.0" rx="3" fill="none" stroke="#c83434" stroke-width="0.7" stroke-opacity="0.8"/><rect x="1200.0" y="725.0" width="12.0" height="12.0" rx="2.5" fill="#c83434" /><rect x="1198.0" y="723.0" width="16.0" height="16.0" rx="3" fill="none" stroke="#c83434" stroke-width="0.7" stroke-opacity="0.8"/><rect x="1222.0" y="735.0" width="12.0" height="12.0" rx="2.5" fill="#c83434" /><rect x="1220.0" y="733.0" width="16.0" height="16.0" rx="3" fill="none" stroke="#c83434" stroke-width="0.7" stroke-opacity="0.8"/><rect x="1240.0" y="718.0" width="12.0" height="12.0" rx="2.5" fill="#c83434" /><rect x="1238.0" y="716.0" width="16.0" height="16.0" rx="3" fill="none" stroke="#c83434" stroke-width="0.7" stroke-opacity="0.8"/><rect x="1252.0" y="740.0" width="12.0" height="12.0" rx="2.5" fill="#c83434" /><rect x="1250.0" y="738.0" width="16.0" height="16.0" rx="3" fill="none" stroke="#c83434" stroke-width="0.7" stroke-opacity="0.8"/><rect x="1235.0" y="760.0" width="12.0" height="12.0" rx="2.5" fill="#c83434" /><rect x="1233.0" y="758.0" width="16.0" height="16.0" rx="3" fill="none" stroke="#c83434" stroke-width="0.7" stroke-opacity="0.8"/><rect x="1255.0" y="760.0" width="12.0" height="12.0" rx="2.5" fill="#c83434" /><rect x="1253.0" y="758.0" width="16.0" height="16.0" rx="3" fill="none" stroke="#c83434" stroke-width="0.7" stroke-opacity="0.8"/><rect x="1036.0" y="766.0" width="12.0" height="14.0" rx="2.5" fill="#c83434" /><rect x="1034.0" y="764.0" width="16.0" height="18.0" rx="3" fill="none" stroke="#c83434" stroke-width="0.7" stroke-opacity="0.8"/><rect x="1056.0" y="766.0" width="12.0" height="14.0" rx="2.5" fill="#c83434" /><rect x="1054.0" y="764.0" width="16.0" height="18.0" rx="3" fill="none" stroke="#c83434" stroke-width="0.7" stroke-opacity="0.8"/><rect x="1024.0" y="861.0" width="12.0" height="14.0" rx="2.5" fill="#c83434" /><rect x="1022.0" y="859.0" width="16.0" height="18.0" rx="3" fill="none" stroke="#c83434" stroke-width="0.7" stroke-opacity="0.8"/><rect x="1044.0" y="861.0" width="12.0" height="14.0" rx="2.5" fill="#c83434" /><rect x="1042.0" y="859.0" width="16.0" height="18.0" rx="3" fill="none" stroke="#c83434" stroke-width="0.7" stroke-opacity="0.8"/><rect x="1255.0" y="856.0" width="12.0" height="13.0" rx="2.5" fill="#c83434" /><rect x="1253.0" y="854.0" width="16.0" height="17.0" rx="3" fill="none" stroke="#c83434" stroke-width="0.7" stroke-opacity="0.8"/><rect x="1275.0" y="856.0" width="12.0" height="13.0" rx="2.5" fill="#c83434" /><rect x="1273.0" y="854.0" width="16.0" height="17.0" rx="3" fill="none" stroke="#c83434" stroke-width="0.7" stroke-opacity="0.8"/><rect x="1074.8" y="980.0" width="12.0" height="11.0" rx="2.5" fill="#c83434" /><rect x="1072.8" y="978.0" width="16.0" height="15.0" rx="3" fill="none" stroke="#c83434" stroke-width="0.7" stroke-opacity="0.8"/><rect x="1074.8" y="1000.0" width="12.0" height="11.0" rx="2.5" fill="#c83434" /><rect x="1072.8" y="998.0" width="16.0" height="15.0" rx="3" fill="none" stroke="#c83434" stroke-width="0.7" stroke-opacity="0.8"/><rect x="1181.8" y="977.0" width="14.0" height="11.0" rx="2.5" fill="#c83434" /><rect x="1179.8" y="975.0" width="18.0" height="15.0" rx="3" fill="none" stroke="#c83434" stroke-width="0.7" stroke-opacity="0.8"/><rect x="1181.8" y="995.0" width="14.0" height="11.0" rx="2.5" fill="#c83434" /><rect x="1179.8" y="993.0" width="18.0" height="15.0" rx="3" fill="none" stroke="#c83434" stroke-width="0.7" stroke-opacity="0.8"/><rect x="1161.0" y="938.0" width="12.0" height="12.0" rx="2.5" fill="#c83434" /><rect x="1159.0" y="936.0" width="16.0" height="16.0" rx="3" fill="none" stroke="#c83434" stroke-width="0.7" stroke-opacity="0.8"/><rect x="1182.0" y="938.0" width="12.0" height="12.0" rx="2.5" fill="#c83434" /><rect x="1180.0" y="936.0" width="16.0" height="16.0" rx="3" fill="none" stroke="#c83434" stroke-width="0.7" stroke-opacity="0.8"/><rect x="1201.0" y="938.0" width="12.0" height="12.0" rx="2.5" fill="#c83434" /><rect x="1199.0" y="936.0" width="16.0" height="16.0" rx="3" fill="none" stroke="#c83434" stroke-width="0.7" stroke-opacity="0.8"/><rect x="1201.0" y="955.0" width="12.0" height="12.0" rx="2.5" fill="#c83434" /><rect x="1199.0" y="953.0" width="16.0" height="16.0" rx="3" fill="none" stroke="#c83434" stroke-width="0.7" stroke-opacity="0.8"/><rect x="1120.0" y="948.0" width="12.0" height="12.0" rx="2.5" fill="#c83434" /><rect x="1118.0" y="946.0" width="16.0" height="16.0" rx="3" fill="none" stroke="#c83434" stroke-width="0.7" stroke-opacity="0.8"/><rect x="1138.0" y="948.0" width="12.0" height="12.0" rx="2.5" fill="#c83434" /><rect x="1136.0" y="946.0" width="16.0" height="16.0" rx="3" fill="none" stroke="#c83434" stroke-width="0.7" stroke-opacity="0.8"/><text x="1067.5" y="427.5" font-family="Liberation Mono" font-size="8" fill="#f0e0e0" fill-opacity="0.8" text-anchor="middle" transform="rotate(-90 1067.5 427.5)">2 GND</text><text x="1099" y="428" font-family="Liberation Mono" font-size="8" fill="#f0e0e0" fill-opacity="0.8" text-anchor="middle" transform="rotate(-90 1099 428)">1 VBUS</text><text x="1084" y="502" font-family="Liberation Mono" font-size="8" fill="#f0e0e0" fill-opacity="0.8" text-anchor="middle" transform="rotate(-90 1084 502)">1 GND</text><text x="1121" y="502" font-family="Liberation Mono" font-size="8" fill="#f0e0e0" fill-opacity="0.8" text-anchor="middle" transform="rotate(-90 1121 502)">2 +3V3</text><text x="1089" y="541" font-family="Liberation Mono" font-size="8" fill="#f0e0e0" fill-opacity="0.8" text-anchor="middle" transform="rotate(-90 1089 541)">2 GND</text><text x="1118" y="541" font-family="Liberation Mono" font-size="8" fill="#f0e0e0" fill-opacity="0.8" text-anchor="middle" transform="rotate(-90 1118 541)">1 +3V3</text><text x="1103" y="467.5" font-family="Liberation Mono" font-size="8" fill="#f0e0e0" fill-opacity="0.8" text-anchor="middle" transform="rotate(-90 1103 467.5)">1 VBUS</text><text x="1211.5" y="490" font-family="Liberation Mono" font-size="9" fill="#f0e0e0" text-anchor="middle">1</text><text x="1211.5" y="494" font-family="Liberation Mono" font-size="0" fill="#f0e0e0" text-anchor="middle"></text><rect x="1068" y="466" width="68" height="56" fill="none" stroke="#c46868" stroke-width="1.3"/><rect x="1056" y="414" width="56" height="30" fill="none" stroke="#ff26e2" stroke-width="1"/><rect x="1115" y="411" width="20" height="39" fill="none" stroke="#ff26e2" stroke-width="1"/><rect x="1169" y="410" width="20" height="40" fill="none" stroke="#ff26e2" stroke-width="1"/><rect x="1092" y="451" width="22" height="33" fill="none" stroke="#ff26e2" stroke-width="1"/><rect x="1072" y="484" width="62" height="36" fill="none" stroke="#ff26e2" stroke-width="1"/><rect x="1072" y="526" width="62" height="30" fill="none" stroke="#ff26e2" stroke-width="1"/><rect x="1045" y="638" width="77" height="22" fill="none" stroke="#ff26e2" stroke-width="1"/><rect x="1146" y="660" width="36" height="45" fill="none" stroke="#ff26e2" stroke-width="1"/><rect x="1152" y="718" width="40" height="42" fill="none" stroke="#ff26e2" stroke-width="1"/><rect x="1032" y="762" width="40" height="20" fill="none" stroke="#ff26e2" stroke-width="1"/><rect x="1020" y="857" width="40" height="20" fill="none" stroke="#ff26e2" stroke-width="1"/><rect x="1252" y="852" width="38" height="20" fill="none" stroke="#ff26e2" stroke-width="1"/><rect x="1070" y="976" width="20" height="36" fill="none" stroke="#ff26e2" stroke-width="1"/><rect x="1178" y="973" width="20" height="35" fill="none" stroke="#ff26e2" stroke-width="1"/><rect x="1157" y="934" width="59" height="36" fill="none" stroke="#ff26e2" stroke-width="1"/><circle cx="1272" cy="286" r="5.6" fill="#c83434"/><circle cx="1272" cy="286" r="3.8" fill="#e8bd2c"/><circle cx="1218" cy="306" r="5.6" fill="#c83434"/><circle cx="1218" cy="306" r="3.8" fill="#e8bd2c"/><circle cx="1217" cy="406" r="5.6" fill="#c83434"/><circle cx="1217" cy="406" r="3.8" fill="#e8bd2c"/><circle cx="1008.3" cy="494.2" r="5.6" fill="#c83434"/><circle cx="1008.3" cy="494.2" r="3.8" fill="#e8bd2c"/><circle cx="1012.4" cy="532.3" r="5.6" fill="#c83434"/><circle cx="1012.4" cy="532.3" r="3.8" fill="#e8bd2c"/><circle cx="1062.4" cy="494.2" r="5.6" fill="#c83434"/><circle cx="1062.4" cy="494.2" r="3.8" fill="#e8bd2c"/><circle cx="1062.4" cy="512.4" r="5.6" fill="#c83434"/><circle cx="1062.4" cy="512.4" r="3.8" fill="#e8bd2c"/><circle cx="1062.4" cy="532.3" r="5.6" fill="#c83434"/><circle cx="1062.4" cy="532.3" r="3.8" fill="#e8bd2c"/><circle cx="1139.5" cy="488.3" r="5.6" fill="#c83434"/><circle cx="1139.5" cy="488.3" r="3.8" fill="#e8bd2c"/><circle cx="1139.5" cy="506.4" r="5.6" fill="#c83434"/><circle cx="1139.5" cy="506.4" r="3.8" fill="#e8bd2c"/><circle cx="1139.5" cy="526.3" r="5.6" fill="#c83434"/><circle cx="1139.5" cy="526.3" r="3.8" fill="#e8bd2c"/><circle cx="1100.3" cy="587.2" r="5.6" fill="#c83434"/><circle cx="1100.3" cy="587.2" r="3.8" fill="#e8bd2c"/><circle cx="1200.2" cy="587.2" r="5.6" fill="#c83434"/><circle cx="1200.2" cy="587.2" r="3.8" fill="#e8bd2c"/><circle cx="1064.4" cy="625.2" r="5.6" fill="#c83434"/><circle cx="1064.4" cy="625.2" r="3.8" fill="#e8bd2c"/><circle cx="1097.2" cy="639" r="5.6" fill="#c83434"/><circle cx="1097.2" cy="639" r="3.8" fill="#e8bd2c"/><circle cx="1155" cy="643.3" r="5.6" fill="#c83434"/><circle cx="1155" cy="643.3" r="3.8" fill="#e8bd2c"/><circle cx="1195.6" cy="640.7" r="5.6" fill="#c83434"/><circle cx="1195.6" cy="640.7" r="3.8" fill="#e8bd2c"/><circle cx="1172.3" cy="658.8" r="5.6" fill="#c83434"/><circle cx="1172.3" cy="658.8" r="3.8" fill="#e8bd2c"/><circle cx="1235" cy="672" r="5.6" fill="#c83434"/><circle cx="1235" cy="672" r="3.8" fill="#e8bd2c"/><circle cx="1125" cy="758" r="5.6" fill="#c83434"/><circle cx="1125" cy="758" r="3.8" fill="#e8bd2c"/><circle cx="1200" cy="712" r="5.6" fill="#c83434"/><circle cx="1200" cy="712" r="3.8" fill="#e8bd2c"/><circle cx="1042" cy="791.7" r="5.6" fill="#c83434"/><circle cx="1042" cy="791.7" r="3.8" fill="#e8bd2c"/><circle cx="1057.8" cy="790.2" r="5.6" fill="#c83434"/><circle cx="1057.8" cy="790.2" r="3.8" fill="#e8bd2c"/><circle cx="1042" cy="808.2" r="5.6" fill="#c83434"/><circle cx="1042" cy="808.2" r="3.8" fill="#e8bd2c"/><circle cx="1094" cy="708" r="5.6" fill="#c83434"/><circle cx="1094" cy="708" r="3.8" fill="#e8bd2c"/><circle cx="1190" cy="705" r="5.6" fill="#c83434"/><circle cx="1190" cy="705" r="3.8" fill="#e8bd2c"/><circle cx="1176" cy="725" r="5.6" fill="#c83434"/><circle cx="1176" cy="725" r="3.8" fill="#e8bd2c"/><circle cx="1178" cy="595" r="5.6" fill="#c83434"/><circle cx="1178" cy="595" r="3.8" fill="#e8bd2c"/><circle cx="1085" cy="717" r="5.6" fill="#c83434"/><circle cx="1085" cy="717" r="3.8" fill="#e8bd2c"/><circle cx="1040" cy="645" r="5.6" fill="#c83434"/><circle cx="1040" cy="645" r="3.8" fill="#e8bd2c"/><circle cx="1076" cy="734" r="5.6" fill="#c83434"/><circle cx="1076" cy="734" r="3.8" fill="#e8bd2c"/><circle cx="1113" cy="807" r="5.6" fill="#c83434"/><circle cx="1113" cy="807" r="3.8" fill="#e8bd2c"/><circle cx="1151" cy="803" r="5.6" fill="#c83434"/><circle cx="1151" cy="803" r="3.8" fill="#e8bd2c"/><circle cx="1190" cy="810" r="5.6" fill="#c83434"/><circle cx="1190" cy="810" r="3.8" fill="#e8bd2c"/><circle cx="1112" cy="836" r="5.6" fill="#c83434"/><circle cx="1112" cy="836" r="3.8" fill="#e8bd2c"/><circle cx="1190" cy="834" r="5.6" fill="#c83434"/><circle cx="1190" cy="834" r="3.8" fill="#e8bd2c"/><circle cx="1190" cy="858" r="5.6" fill="#c83434"/><circle cx="1190" cy="858" r="3.8" fill="#e8bd2c"/><circle cx="1019" cy="865" r="5.6" fill="#c83434"/><circle cx="1019" cy="865" r="3.8" fill="#e8bd2c"/><circle cx="1290" cy="863" r="5.6" fill="#c83434"/><circle cx="1290" cy="863" r="3.8" fill="#e8bd2c"/><circle cx="1248" cy="789" r="5.6" fill="#c83434"/><circle cx="1248" cy="789" r="3.8" fill="#e8bd2c"/><circle cx="1263" cy="800" r="5.6" fill="#c83434"/><circle cx="1263" cy="800" r="3.8" fill="#e8bd2c"/><circle cx="1100" cy="889" r="5.6" fill="#c83434"/><circle cx="1100" cy="889" r="3.8" fill="#e8bd2c"/><circle cx="1158" cy="888" r="5.6" fill="#c83434"/><circle cx="1158" cy="888" r="3.8" fill="#e8bd2c"/><circle cx="1182" cy="886" r="5.6" fill="#c83434"/><circle cx="1182" cy="886" r="3.8" fill="#e8bd2c"/><circle cx="1200" cy="874" r="5.6" fill="#c83434"/><circle cx="1200" cy="874" r="3.8" fill="#e8bd2c"/><circle cx="1130" cy="893" r="5.6" fill="#c83434"/><circle cx="1130" cy="893" r="3.8" fill="#e8bd2c"/><circle cx="1220" cy="940" r="5.6" fill="#c83434"/><circle cx="1220" cy="940" r="3.8" fill="#e8bd2c"/><circle cx="1237" cy="937" r="5.6" fill="#c83434"/><circle cx="1237" cy="937" r="3.8" fill="#e8bd2c"/><circle cx="1052" cy="967" r="5.6" fill="#c83434"/><circle cx="1052" cy="967" r="3.8" fill="#e8bd2c"/><circle cx="1115" cy="914" r="5.6" fill="#c83434"/><circle cx="1115" cy="914" r="3.8" fill="#e8bd2c"/><circle cx="1152" cy="903" r="5.6" fill="#c83434"/><circle cx="1152" cy="903" r="3.8" fill="#e8bd2c"/><circle cx="1340" cy="913" r="5.6" fill="#c83434"/><circle cx="1340" cy="913" r="3.8" fill="#e8bd2c"/><circle cx="1313" cy="913" r="5.6" fill="#c83434"/><circle cx="1313" cy="913" r="3.8" fill="#e8bd2c"/><circle cx="1248" cy="744" r="5.6" fill="#c83434"/><circle cx="1248" cy="744" r="3.8" fill="#e8bd2c"/><circle cx="1237" cy="622" r="5.6" fill="#c83434"/><circle cx="1237" cy="622" r="3.8" fill="#e8bd2c"/><text x="920" y="214" font-family="Liberation Mono" font-size="35.6" fill="#b4b4b4" fill-opacity="1" stroke="#b4b4b4" stroke-opacity="1" stroke-width="0.7" textLength="463" lengthAdjust="spacingAndGlyphs">USB_C_Receptacle_USB2.0_14P</text><text x="885.6" y="1297.6" font-family="Liberation Mono" font-size="30.3" fill="#b4b4b4" fill-opacity="1" stroke="#b4b4b4" stroke-opacity="1" stroke-width="0.7" textLength="176.89999999999998" lengthAdjust="spacingAndGlyphs">Conn_01x20</text><text x="1238.2" y="1297.6" font-family="Liberation Mono" font-size="30.3" fill="#b4b4b4" fill-opacity="1" stroke="#b4b4b4" stroke-opacity="1" stroke-width="0.7" textLength="176.79999999999995" lengthAdjust="spacingAndGlyphs">Conn_01x20</text><defs><clipPath id="inb"><rect x="900" y="200" width="520" height="1058"/></clipPath><clipPath id="outb"><rect x="900" y="1258" width="520" height="100"/></clipPath></defs><g clip-path="url(#outb)"><g transform="translate(1258 1322) rotate(-90)"><text x="0" y="0" font-family="Liberation Mono" font-size="31.8" fill="#b4b4b4" fill-opacity="1" stroke="#b4b4b4" stroke-opacity="1" stroke-width="0.8" textLength="179" lengthAdjust="spacingAndGlyphs">Conn_01x03</text></g></g><g clip-path="url(#inb)"><g transform="translate(1258 1322) rotate(-90)"><text x="0" y="0" font-family="Liberation Mono" font-size="31.8" fill="#c46868" fill-opacity="1" stroke="#c46868" stroke-opacity="1" stroke-width="0.5" textLength="179" lengthAdjust="spacingAndGlyphs">Conn_01x03</text></g></g><path d="M464 240 V320 M424 280 H504" stroke="#c8c8c8" stroke-width="1"/></svg></div><div class="abs" style="left:33px;top:132px;width:2180px;height:1px;background:#b4b4b4"></div><div id="ltb" class="abs"></div><svg class="abs" style="left:0;top:132px" width="33" height="700"><g transform="translate(0 -132)"><rect x="0.5" y="137.5" width="29" height="29" fill="#f8cbba" stroke="#e95420" stroke-width="1"/><circle cx="5.0" cy="142.0" r="1.5" fill="#444"/><circle cx="5.0" cy="148.5" r="1.5" fill="#444"/><circle cx="5.0" cy="155.0" r="1.5" fill="#444"/><circle cx="5.0" cy="161.5" r="1.5" fill="#444"/><circle cx="11.5" cy="142.0" r="1.5" fill="#444"/><circle cx="11.5" cy="148.5" r="1.5" fill="#444"/><circle cx="11.5" cy="155.0" r="1.5" fill="#444"/><circle cx="11.5" cy="161.5" r="1.5" fill="#444"/><circle cx="18.0" cy="142.0" r="1.5" fill="#444"/><circle cx="18.0" cy="148.5" r="1.5" fill="#444"/><circle cx="18.0" cy="155.0" r="1.5" fill="#444"/><circle cx="18.0" cy="161.5" r="1.5" fill="#444"/><circle cx="24.5" cy="142.0" r="1.5" fill="#444"/><circle cx="24.5" cy="148.5" r="1.5" fill="#444"/><circle cx="24.5" cy="155.0" r="1.5" fill="#444"/><circle cx="24.5" cy="161.5" r="1.5" fill="#444"/><circle cx="5" cy="175" r="1.1" fill="#444"/><circle cx="5" cy="180" r="1.1" fill="#444"/><circle cx="5" cy="185" r="1.1" fill="#444"/><circle cx="10" cy="175" r="1.1" fill="#444"/><circle cx="10" cy="180" r="1.1" fill="#444"/><circle cx="15" cy="175" r="1.1" fill="#444"/><circle cx="15.0" cy="192.0" r="0.9" fill="#555"/><circle cx="15.0" cy="195.5" r="0.9" fill="#555"/><circle cx="18.5" cy="188.5" r="0.9" fill="#555"/><circle cx="18.5" cy="192.0" r="0.9" fill="#555"/><circle cx="18.5" cy="195.5" r="0.9" fill="#555"/><circle cx="22.0" cy="185.0" r="0.9" fill="#555"/><circle cx="22.0" cy="188.5" r="0.9" fill="#555"/><circle cx="22.0" cy="192.0" r="0.9" fill="#555"/><circle cx="22.0" cy="195.5" r="0.9" fill="#555"/><circle cx="25.5" cy="185.0" r="0.9" fill="#555"/><circle cx="25.5" cy="188.5" r="0.9" fill="#555"/><circle cx="25.5" cy="192.0" r="0.9" fill="#555"/><circle cx="25.5" cy="195.5" r="0.9" fill="#555"/><line x1="3" y1="195" x2="27" y2="172" stroke="#444" stroke-width="1.2"/><path d="M4 205 V226 H27" fill="none" stroke="#444" stroke-width="1.2"/><path d="M2.5 208 L4 204 L5.5 208 M24 224.5 L27 226 L24 227.5" fill="#444" stroke="#444"/><line x1="6" y1="224" x2="23" y2="207" stroke="#444" stroke-width="1.1"/><circle cx="24" cy="206.5" r="1.8" fill="#c8203c"/><text x="8" y="214" font-family="Liberation Sans" font-size="8" fill="#444">r</text><text x="16" y="222" font-family="Liberation Serif" font-style="italic" font-size="8" fill="#444">θ</text><path d="M9 226 A5 5 0 0 0 8 221" fill="none" stroke="#444" stroke-width="0.8"/><text x="15" y="249" font-family="Liberation Sans" font-size="10.5" fill="#444" text-anchor="middle">in</text><path d="M5 253 H25" stroke="#444" stroke-width="1.3"/><path d="M8 250.5 L4.5 253 L8 255.5 M22 250.5 L25.5 253 L22 255.5" fill="none" stroke="#444" stroke-width="1.2"/><text x="15" y="280.5" font-family="Liberation Sans" font-size="10.5" fill="#444" text-anchor="middle">mil</text><path d="M5 284.5 H25" stroke="#444" stroke-width="1.3"/><path d="M8 282.0 L4.5 284.5 L8 287.0 M22 282.0 L25.5 284.5 L22 287.0" fill="none" stroke="#444" stroke-width="1.2"/><rect x="0.5" y="298.5" width="29" height="29" fill="#f8cbba" stroke="#e95420" stroke-width="1"/><text x="15" y="312.5" font-family="Liberation Sans" font-size="10.5" fill="#444" text-anchor="middle">mm</text><path d="M5 316.5 H25" stroke="#444" stroke-width="1.3"/><path d="M8 314.0 L4.5 316.5 L8 319.0 M22 314.0 L25.5 316.5 L22 319.0" fill="none" stroke="#444" stroke-width="1.2"/><path d="M15 333 V352 M3 344 H27" stroke="#888" stroke-width="0.6"/><path d="M15 339 V349 M10 344 H20" stroke="#1a7fd0" stroke-width="2.6"/><path d="M14.5 343 L22 350 L19 350.5 L21 355 L19.5 355.5 L17.5 351.5 L15 353.5 Z" fill="#444"/><line x1="4" y1="364.5" x2="27" y2="364.5" stroke="#c4c4c4" stroke-width="1"/><rect x="0.5" y="370.5" width="29" height="29" fill="#f8cbba" stroke="#e95420" stroke-width="1"/><path d="M5 373 V395 H27" fill="none" stroke="#444" stroke-width="1.6"/><line x1="6" y1="394" x2="24" y2="377" stroke="#444" stroke-width="1.6"/><path d="M6 387 H12 V394" fill="none" stroke="#444" stroke-width="1"/><line x1="4" y1="405.5" x2="27" y2="405.5" stroke="#c4c4c4" stroke-width="1"/><rect x="0.5" y="411.5" width="29" height="29" fill="#f8cbba" stroke="#e95420" stroke-width="1"/><path d="M7 415 L22 435 M20 415 L8 435 M7 415 L22 418" fill="none" stroke="#444" stroke-width="1"/><circle cx="7" cy="415.5" r="2.5" fill="#fff" stroke="#444"/><circle cx="20.5" cy="417.5" r="2.5" fill="#fff" stroke="#444"/><circle cx="8.5" cy="434.5" r="2.5" fill="#fff" stroke="#444"/><circle cx="21.5" cy="433" r="2.5" fill="#fff" stroke="#444"/><rect x="0.5" y="443.5" width="29" height="29" fill="#f8cbba" stroke="#e95420" stroke-width="1"/><path d="M3 468 L27 446 M5 460 L15 451 M12 467 Q22 466 23 455" fill="none" stroke="#444" stroke-width="1"/><circle cx="5" cy="460" r="2.3" fill="#fff" stroke="#444"/><circle cx="15.5" cy="451" r="2.3" fill="#fff" stroke="#444"/><circle cx="12.5" cy="467" r="2.3" fill="#fff" stroke="#444"/><circle cx="23.5" cy="455" r="2.3" fill="#fff" stroke="#444"/><line x1="4" y1="478.5" x2="27" y2="478.5" stroke="#c4c4c4" stroke-width="1"/><path d="M3 488.5 L10.5 496 M3 499.5 L9 505.5 H18 L24 510.5" fill="none" stroke="#444" stroke-width="1.5"/><path d="M8.5 487 L12.5 491.5 H19.5 L27 499 M16.5 498.5 L27 507.5" fill="none" stroke="#c8203c" stroke-width="1.5"/><circle cx="13" cy="499" r="2.8" fill="#fff" stroke="#f0a020" stroke-width="1.6"/><path d="M3 523 H12 L18 528.5 V543 M16.5 519.5 L23 525 V543" fill="none" stroke="#b4b4b4" stroke-width="1.5"/><path d="M11 530.5 H27" stroke="#a8cff0" stroke-width="2.6"/><path d="M9.5 533 V543" stroke="#e0a0b0" stroke-width="2.5"/><circle cx="9.5" cy="530.5" r="2.8" fill="#fff" stroke="#f5c070" stroke-width="1.6"/><line x1="4" y1="551.5" x2="27" y2="551.5" stroke="#c4c4c4" stroke-width="1"/><rect x="0.5" y="557.5" width="29" height="29" fill="#f8cbba" stroke="#e95420" stroke-width="1"/><path d="M11 562.5 H25 V582 H5 V572.5 H11 Z" fill="#38aae8" stroke="#1a70b8" stroke-width="1"/><circle cx="25" cy="571.5" r="4" fill="#f8cbba" stroke="#1a70b8" stroke-width="1"/><rect x="25.6" y="566" width="3" height="11" fill="#f8cbba"/><circle cx="20.5" cy="571.5" r="1.8" fill="#555"/><path d="M20.5 571.5 H25" stroke="#555" stroke-width="1.4"/><path d="M11 594.5 H25 V613.5 H5 V604.5 H11 Z" fill="none" stroke="#1a7fd0" stroke-width="1.2" stroke-dasharray="2.2 1.6"/><circle cx="20" cy="603" r="1.8" fill="#555"/><path d="M20 603 H25" stroke="#555" stroke-width="1.4"/><line x1="4" y1="624.5" x2="27" y2="624.5" stroke="#c4c4c4" stroke-width="1"/><rect x="3.5" y="637.5" width="23" height="16" fill="none" stroke="#333" stroke-width="1"/><rect x="5" y="633.5" width="4" height="5" fill="#1a7fd0"/><rect x="12.5" y="633.5" width="4" height="5" fill="#1a7fd0"/><rect x="20" y="633.5" width="4" height="5" fill="#1a7fd0"/><rect x="5.5" y="651.5" width="4" height="5" fill="#fff" stroke="#1a7fd0"/><rect x="13" y="651.5" width="4" height="5" fill="#fff" stroke="#1a7fd0"/><rect x="20.5" y="651.5" width="4" height="5" fill="#fff" stroke="#1a7fd0"/><line x1="3" y1="657" x2="27" y2="633" stroke="#333" stroke-width="1"/><circle cx="15" cy="677" r="8" fill="none" stroke="#f0a020" stroke-width="4"/><circle cx="15.5" cy="677" r="9.5" fill="none" stroke="#ccc" stroke-width="0.8"/><line x1="3" y1="689" x2="27" y2="665" stroke="#333" stroke-width="1"/><path d="M14 697 V720 M17 703 V720" stroke="#c8203c" stroke-width="1.4"/><rect x="13" y="697" width="4" height="12" fill="#c8203c"/><path d="M3 709 H27 M14 711 H27" stroke="#1a7fd0" stroke-width="2.4"/><line x1="3" y1="721" x2="27" y2="697" stroke="#333" stroke-width="1"/><line x1="4" y1="729.5" x2="27" y2="729.5" stroke="#c4c4c4" stroke-width="1"/><rect x="0.5" y="735.5" width="29" height="29" fill="#f8cbba" stroke="#e95420" stroke-width="1"/><path d="M15 745 L24 752.5 L15 760 L6 752.5 Z" fill="#f0a020"/><path d="M15 742 L24 749.5 L15 757 L6 749.5 Z" fill="#5a5a5a"/><path d="M15 739 L24 746.5 L15 754 L6 746.5 Z" fill="#1a7fd0"/><path d="M4.5 792.5 L16 781" stroke="#555" stroke-width="1.3"/><path d="M16 781 L17 777 L23 771 L26 774 L20 780 Z" fill="#555"/><path d="M12 779 L23.5 790" stroke="#1a7fd0" stroke-width="3.6" stroke-linecap="round"/><circle cx="8.5" cy="775.5" r="4.8" fill="#1a7fd0"/><path d="M4 771.5 L8.5 775.5 L10.5 771 Z" fill="#fff"/><circle cx="23" cy="790" r="0.9" fill="#fff"/></g></svg><div id="rtb" class="abs"></div><svg class="abs" style="left:2213px;top:132px" width="35" height="740"><g transform="translate(-2213 -132)"><rect x="2216.5" y="137.5" width="29" height="29" fill="#f8cbba" stroke="#e95420" stroke-width="1"/><path d="M2226 144 L2237 155 L2232.5 155.5 L2235 161 L2233 162 L2230.5 156.5 L2226 160 Z" fill="#555"/><path d="M2221 173 L2241 195 M2241 176 L2221 196" stroke="#555" stroke-width="1.1"/><circle cx="2231" cy="184.5" r="2.6" fill="#fff" stroke="#555" stroke-width="1"/><line x1="2220" y1="204.5" x2="2242" y2="204.5" stroke="#c8c8c8"/><rect x="2220.5" y="216.5" width="22" height="16" fill="none" stroke="#444" stroke-width="1"/><rect x="2222" y="212" width="4" height="6" fill="#1a7fd0"/><rect x="2229" y="212" width="4" height="6" fill="#1a7fd0"/><rect x="2236" y="212" width="4" height="6" fill="#1a7fd0"/><rect x="2222" y="231" width="4" height="6" fill="#1a7fd0"/><rect x="2229" y="231" width="4" height="6" fill="#1a7fd0"/><rect x="2236" y="231" width="4" height="6" fill="#1a7fd0"/><path d="M2221 267 L2225 256 H2234 L2241 247" fill="none" stroke="#1a7fd0" stroke-width="1.8"/><path d="M2246 274 V267 L2239 274 Z" fill="#333"/><path d="M2220 289 Q2222 295 2224 290 V284 Q2226 279 2228 284 V292 Q2230 297 2232 292 V284 Q2234 279 2236 284 V290 Q2238 294 2242 289" fill="none" stroke="#1a7fd0" stroke-width="1.7"/><path d="M2246 304 V297 L2239 304 Z" fill="#333"/><circle cx="2231" cy="321" r="5.5" fill="none" stroke="#f0a020" stroke-width="3"/><path d="M2221 363 V351 H2228 V343 H2241 V363 Z" fill="#1a7fd0"/><circle cx="2235.5" cy="353" r="2.6" fill="none" stroke="#fff" stroke-width="1.5"/><path d="M2235.5 353 H2242" stroke="#fff" stroke-width="1.4"/><path d="M2221 396 V384 H2228 V376 H2241 V396 Z" fill="#fff" stroke="#444" stroke-width="1.2"/><path d="M2222 394 L2226 390 M2222 388 L2230 380 M2225 395 L2240 380 M2231 395 L2240 386 M2237 395 L2240 392" stroke="#444" stroke-width="1.3"/><line x1="2220" y1="405.5" x2="2242" y2="405.5" stroke="#c8c8c8"/><line x1="2221" y1="436" x2="2241" y2="417" stroke="#555" stroke-width="1.5"/><path d="M2221 468 A20 20 0 0 1 2241 449" fill="none" stroke="#555" stroke-width="1.5"/><rect x="2221" y="481.5" width="19.5" height="17" fill="#c4c4c4" stroke="#555" stroke-width="1.5"/><circle cx="2231" cy="521.5" r="9.5" fill="#c4c4c4" stroke="#555" stroke-width="1.5"/><path d="M2222 545 L2240 549 L2238 559 L2224 563 L2231 553 Z" fill="#c4c4c4" stroke="#555" stroke-width="1.5"/><path d="M2224 596 Q2223 588 2231 586 Q2238 584 2237 576" fill="none" stroke="#444" stroke-width="1.3"/><path d="M2220 586 H2241" stroke="#1a7fd0" stroke-width="1.2"/><rect x="2220" y="584.5" width="3" height="3" fill="#1a7fd0"/><rect x="2238.5" y="584.5" width="3" height="3" fill="#1a7fd0"/><circle cx="2230.5" cy="586" r="1.5" fill="#fff" stroke="#1a7fd0"/><rect x="2220" y="608" width="22" height="21" rx="3" fill="#555"/><path d="M2223 625 L2229 617 L2233 621 L2236 618 L2240 625 Z" fill="#fff"/><circle cx="2236" cy="612.5" r="2" fill="#fff"/><path d="M2223 642 H2239 M2231 642 V660" stroke="#555" stroke-width="2.8"/><rect x="2221.5" y="673.5" width="19" height="17" fill="#c4c4c4" stroke="#555" stroke-width="1.5"/><path d="M2224 678 H2238 M2224 682 H2238 M2224 686 H2234" stroke="#555" stroke-width="1.2"/><rect x="2220" y="702.5" width="22" height="23" fill="#fff" stroke="#555" stroke-width="1"/><rect x="2220" y="702.5" width="22" height="5" fill="#aaa"/><path d="M2220 708 H2242 M2220 714 H2242 M2220 720 H2242 M2227.5 702 V726 M2235 702 V726" stroke="#777" stroke-width="0.8"/><circle cx="2222" cy="737.5" r="2.6" fill="#1a7fd0"/><path d="M2224 737.5 H2242 M2233 752 H2242" stroke="#555" stroke-width="0.8"/><circle cx="2231" cy="754.5" r="2.6" fill="#1a7fd0"/><path d="M2240 739 V751" stroke="#555" stroke-width="0.8"/><path d="M2246 761 V754 L2239 761 Z" fill="#333"/><path d="M2223 768 L2233 778 L2228 779 Z" fill="#555"/><path d="M2223 768 V782 L2230 778 Z" fill="#555"/><circle cx="2236" cy="783" r="7" fill="#c8203c"/><path d="M2233 780 L2239 786 M2239 780 L2233 786" stroke="#fff" stroke-width="1.8"/><line x1="2220" y1="798.5" x2="2242" y2="798.5" stroke="#c8c8c8"/><circle cx="2221" cy="809" r="1.1" fill="#555"/><circle cx="2221" cy="815" r="1.1" fill="#555"/><circle cx="2221" cy="821" r="1.1" fill="#555"/><circle cx="2221" cy="827" r="1.1" fill="#555"/><circle cx="2227" cy="809" r="1.1" fill="#555"/><circle cx="2227" cy="815" r="1.1" fill="#555"/><circle cx="2227" cy="821" r="1.1" fill="#555"/><circle cx="2227" cy="827" r="1.1" fill="#555"/><circle cx="2233" cy="809" r="1.1" fill="#555"/><circle cx="2233" cy="815" r="1.1" fill="#555"/><circle cx="2233" cy="821" r="1.1" fill="#555"/><circle cx="2233" cy="827" r="1.1" fill="#555"/><circle cx="2239" cy="809" r="1.1" fill="#555"/><circle cx="2239" cy="815" r="1.1" fill="#555"/><circle cx="2239" cy="821" r="1.1" fill="#555"/><circle cx="2239" cy="827" r="1.1" fill="#555"/><path d="M2227 816 V828 M2221 822 H2233" stroke="#1a7fd0" stroke-width="1.8"/><path d="M2246 833 V826 L2239 833 Z" fill="#333"/><path d="M2222 856 L2238 841 L2242 845 L2226 860 Z" fill="#fff" stroke="#555" stroke-width="1.6"/><path d="M2228 852 L2230 854 M2232 848 L2234 850" stroke="#555" stroke-width="1"/></g></svg><div id="sash" class="abs"></div><div id="app" class="abs"><div class="hdr" style="top:0">Appearance</div><div class="abs" style="left:0;top:17px;width:239px;height:5px;background:#f6f6f6"></div><div class="abs" style="left:0px;top:22px;width:239px;height:907px;background:#fff;border:1px solid #d0d0d0"></div><div class="abs" style="left:1px;top:23px;width:237px;height:36px;background:#ebebeb;border-bottom:1px solid #d8d8d8"></div><span class="abs" style="left:21px;top:33px;font-size:14.3px;color:#3c3c3c">Layers</span><span class="abs" style="left:95px;top:33px;font-size:14.3px;color:#3c3c3c">Objects</span><span class="abs" style="left:178px;top:33px;font-size:14.3px;color:#3c3c3c">Nets</span><div class="abs" style="left:9px;top:57px;width:66px;height:3px;background:#e95420"></div></div><div class="lrow" style="left:2253px;top:192px;background:#efefef;"><svg style="position:absolute;left:6px;top:4px" width="7" height="11"><polygon points="0,0 7,5.5 0,11" fill="#3a3aff"/></svg><span class="sw" style="background:#c83434"></span><svg class="eye" width="16" height="16" viewBox="0 0 16 16"><circle cx="8" cy="8" r="8" fill="#555"/><path d="M2.5 8 Q8 2.5 13.5 8 Q8 13.5 2.5 8Z" fill="#fff"/><circle cx="8" cy="8" r="2" fill="none" stroke="#555" stroke-width="1.2"/></svg><span class="lb">F.Cu</span></div><div class="lrow" style="left:2253px;top:211px;"><span class="sw" style="background:#4d7fc4"></span><svg class="eye" width="16" height="16" viewBox="0 0 16 16"><circle cx="8" cy="8" r="8" fill="#555"/><path d="M2.5 8 Q8 2.5 13.5 8 Q8 13.5 2.5 8Z" fill="#fff"/><circle cx="8" cy="8" r="2" fill="none" stroke="#555" stroke-width="1.2"/></svg><span class="lb">B.Cu</span></div><div class="lrow" style="left:2253px;top:230px;"><span class="sw" style="background:#840084"></span><svg class="eye" width="16" height="16" viewBox="0 0 16 16"><circle cx="8" cy="8" r="8" fill="#555"/><path d="M2.5 8 Q8 2.5 13.5 8 Q8 13.5 2.5 8Z" fill="#fff"/><circle cx="8" cy="8" r="2" fill="none" stroke="#555" stroke-width="1.2"/></svg><span class="lb">F.Adhesive</span></div><div class="lrow" style="left:2253px;top:249px;"><span class="sw" style="background:#000084"></span><svg class="eye" width="16" height="16" viewBox="0 0 16 16"><circle cx="8" cy="8" r="8" fill="#555"/><path d="M2.5 8 Q8 2.5 13.5 8 Q8 13.5 2.5 8Z" fill="#fff"/><circle cx="8" cy="8" r="2" fill="none" stroke="#555" stroke-width="1.2"/></svg><span class="lb">B.Adhesive</span></div><div class="lrow" style="left:2253px;top:268px;"><span class="sw" style="background:#a89890"></span><svg class="eye" width="16" height="16" viewBox="0 0 16 16"><circle cx="8" cy="8" r="8" fill="#555"/><path d="M2.5 8 Q8 2.5 13.5 8 Q8 13.5 2.5 8Z" fill="#fff"/><circle cx="8" cy="8" r="2" fill="none" stroke="#555" stroke-width="1.2"/></svg><span class="lb">F.Paste</span></div><div class="lrow" style="left:2253px;top:287px;"><span class="sw" style="background:#00c2c2"></span><svg class="eye" width="16" height="16" viewBox="0 0 16 16"><circle cx="8" cy="8" r="8" fill="#555"/><path d="M2.5 8 Q8 2.5 13.5 8 Q8 13.5 2.5 8Z" fill="#fff"/><circle cx="8" cy="8" r="2" fill="none" stroke="#555" stroke-width="1.2"/></svg><span class="lb">B.Paste</span></div><div class="lrow" style="left:2253px;top:306px;"><span class="sw" style="background:#f2eda1"></span><svg class="eye" width="16" height="16" viewBox="0 0 16 16"><circle cx="8" cy="8" r="8" fill="#c4c4c4"/><path d="M3 8 Q8 3 13 8 Q8 13 3 8Z" fill="#e8e8e8"/><line x1="4" y1="12" x2="12" y2="4" stroke="#666" stroke-width="1.4"/></svg><span class="lb">F.Silkscreen</span></div><div class="lrow" style="left:2253px;top:325px;"><span class="sw" style="background:#e8b2a7"></span><svg class="eye" width="16" height="16" viewBox="0 0 16 16"><circle cx="8" cy="8" r="8" fill="#c4c4c4"/><path d="M3 8 Q8 3 13 8 Q8 13 3 8Z" fill="#e8e8e8"/><line x1="4" y1="12" x2="12" y2="4" stroke="#666" stroke-width="1.4"/></svg><span class="lb">B.Silkscreen</span></div><div class="lrow" style="left:2253px;top:344px;"><span class="sw" style="background:#6b3a7a"></span><svg class="eye" width="16" height="16" viewBox="0 0 16 16"><circle cx="8" cy="8" r="8" fill="#555"/><path d="M2.5 8 Q8 2.5 13.5 8 Q8 13.5 2.5 8Z" fill="#fff"/><circle cx="8" cy="8" r="2" fill="none" stroke="#555" stroke-width="1.2"/></svg><span class="lb">F.Mask</span></div><div class="lrow" style="left:2253px;top:363px;"><span class="sw" style="background:#1e6e64"></span><svg class="eye" width="16" height="16" viewBox="0 0 16 16"><circle cx="8" cy="8" r="8" fill="#555"/><path d="M2.5 8 Q8 2.5 13.5 8 Q8 13.5 2.5 8Z" fill="#fff"/><circle cx="8" cy="8" r="2" fill="none" stroke="#555" stroke-width="1.2"/></svg><span class="lb">B.Mask</span></div><div class="lrow" style="left:2253px;top:382px;"><span class="sw" style="background:#c2c2c2"></span><svg class="eye" width="16" height="16" viewBox="0 0 16 16"><circle cx="8" cy="8" r="8" fill="#555"/><path d="M2.5 8 Q8 2.5 13.5 8 Q8 13.5 2.5 8Z" fill="#fff"/><circle cx="8" cy="8" r="2" fill="none" stroke="#555" stroke-width="1.2"/></svg><span class="lb">User.Drawings</span></div><div class="lrow" style="left:2253px;top:401px;"><span class="sw" style="background:#598fe0"></span><svg class="eye" width="16" height="16" viewBox="0 0 16 16"><circle cx="8" cy="8" r="8" fill="#555"/><path d="M2.5 8 Q8 2.5 13.5 8 Q8 13.5 2.5 8Z" fill="#fff"/><circle cx="8" cy="8" r="2" fill="none" stroke="#555" stroke-width="1.2"/></svg><span class="lb">User.Comments</span></div><div class="lrow" style="left:2253px;top:420px;"><span class="sw" style="background:#b5dbd2"></span><svg class="eye" width="16" height="16" viewBox="0 0 16 16"><circle cx="8" cy="8" r="8" fill="#555"/><path d="M2.5 8 Q8 2.5 13.5 8 Q8 13.5 2.5 8Z" fill="#fff"/><circle cx="8" cy="8" r="2" fill="none" stroke="#555" stroke-width="1.2"/></svg><span class="lb">User.Eco1</span></div><div class="lrow" style="left:2253px;top:439px;"><span class="sw" style="background:#d8c852"></span><svg class="eye" width="16" height="16" viewBox="0 0 16 16"><circle cx="8" cy="8" r="8" fill="#555"/><path d="M2.5 8 Q8 2.5 13.5 8 Q8 13.5 2.5 8Z" fill="#fff"/><circle cx="8" cy="8" r="2" fill="none" stroke="#555" stroke-width="1.2"/></svg><span class="lb">User.Eco2</span></div><div class="lrow" style="left:2253px;top:458px;"><span class="sw" style="background:#d0d2cd"></span><svg class="eye" width="16" height="16" viewBox="0 0 16 16"><circle cx="8" cy="8" r="8" fill="#555"/><path d="M2.5 8 Q8 2.5 13.5 8 Q8 13.5 2.5 8Z" fill="#fff"/><circle cx="8" cy="8" r="2" fill="none" stroke="#555" stroke-width="1.2"/></svg><span class="lb">Edge.Cuts</span></div><div class="lrow" style="left:2253px;top:477px;"><span class="sw" style="background:#ff26e2"></span><svg class="eye" width="16" height="16" viewBox="0 0 16 16"><circle cx="8" cy="8" r="8" fill="#555"/><path d="M2.5 8 Q8 2.5 13.5 8 Q8 13.5 2.5 8Z" fill="#fff"/><circle cx="8" cy="8" r="2" fill="none" stroke="#555" stroke-width="1.2"/></svg><span class="lb">Margin</span></div><div class="lrow" style="left:2253px;top:496px;"><span class="sw" style="background:#ff26e2"></span><svg class="eye" width="16" height="16" viewBox="0 0 16 16"><circle cx="8" cy="8" r="8" fill="#555"/><path d="M2.5 8 Q8 2.5 13.5 8 Q8 13.5 2.5 8Z" fill="#fff"/><circle cx="8" cy="8" r="2" fill="none" stroke="#555" stroke-width="1.2"/></svg><span class="lb">F.Courtyard</span></div><div class="lrow" style="left:2253px;top:515px;"><span class="sw" style="background:#26e9ff"></span><svg class="eye" width="16" height="16" viewBox="0 0 16 16"><circle cx="8" cy="8" r="8" fill="#555"/><path d="M2.5 8 Q8 2.5 13.5 8 Q8 13.5 2.5 8Z" fill="#fff"/><circle cx="8" cy="8" r="2" fill="none" stroke="#555" stroke-width="1.2"/></svg><span class="lb">B.Courtyard</span></div><div class="lrow" style="left:2253px;top:534px;"><span class="sw" style="background:#afafaf"></span><svg class="eye" width="16" height="16" viewBox="0 0 16 16"><circle cx="8" cy="8" r="8" fill="#555"/><path d="M2.5 8 Q8 2.5 13.5 8 Q8 13.5 2.5 8Z" fill="#fff"/><circle cx="8" cy="8" r="2" fill="none" stroke="#555" stroke-width="1.2"/></svg><span class="lb">F.Fab</span></div><div class="lrow" style="left:2253px;top:553px;"><span class="sw" style="background:#585d84"></span><svg class="eye" width="16" height="16" viewBox="0 0 16 16"><circle cx="8" cy="8" r="8" fill="#555"/><path d="M2.5 8 Q8 2.5 13.5 8 Q8 13.5 2.5 8Z" fill="#fff"/><circle cx="8" cy="8" r="2" fill="none" stroke="#555" stroke-width="1.2"/></svg><span class="lb">B.Fab</span></div><div class="lrow" style="left:2253px;top:572px;"><span class="sw" style="background:#c2c2c2"></span><svg class="eye" width="16" height="16" viewBox="0 0 16 16"><circle cx="8" cy="8" r="8" fill="#555"/><path d="M2.5 8 Q8 2.5 13.5 8 Q8 13.5 2.5 8Z" fill="#fff"/><circle cx="8" cy="8" r="2" fill="none" stroke="#555" stroke-width="1.2"/></svg><span class="lb">User.1</span></div><div class="lrow" style="left:2253px;top:591px;"><span class="sw" style="background:#598fe0"></span><svg class="eye" width="16" height="16" viewBox="0 0 16 16"><circle cx="8" cy="8" r="8" fill="#555"/><path d="M2.5 8 Q8 2.5 13.5 8 Q8 13.5 2.5 8Z" fill="#fff"/><circle cx="8" cy="8" r="2" fill="none" stroke="#555" stroke-width="1.2"/></svg><span class="lb">User.2</span></div><div class="lrow" style="left:2253px;top:610px;"><span class="sw" style="background:#b5dbd2"></span><svg class="eye" width="16" height="16" viewBox="0 0 16 16"><circle cx="8" cy="8" r="8" fill="#555"/><path d="M2.5 8 Q8 2.5 13.5 8 Q8 13.5 2.5 8Z" fill="#fff"/><circle cx="8" cy="8" r="2" fill="none" stroke="#555" stroke-width="1.2"/></svg><span class="lb">User.3</span></div><div class="lrow" style="left:2253px;top:629px;"><span class="sw" style="background:#d8c852"></span><svg class="eye" width="16" height="16" viewBox="0 0 16 16"><circle cx="8" cy="8" r="8" fill="#555"/><path d="M2.5 8 Q8 2.5 13.5 8 Q8 13.5 2.5 8Z" fill="#fff"/><circle cx="8" cy="8" r="2" fill="none" stroke="#555" stroke-width="1.2"/></svg><span class="lb">User.4</span></div><svg class="abs" style="left:2266px;top:1042px" width="7" height="11"><polygon points="0,0 6,5.5 0,11" fill="#222"/></svg><span class="abs" style="left:2275px;top:1040px;font-size:13px;color:#222">Layer Display Options</span><span class="abs" style="left:2260px;top:1072px;font-size:12.6px;color:#3c3c3c">Presets (Ctrl+Tab):</span><div class="abs" style="left:2261px;top:1092px;width:223px;height:33px;background:#fff;border:1px solid #d2d2d2;border-radius:6px"><span style="position:absolute;left:10px;top:6px;font-size:13px">---</span><span class="chev" style="left:198px;top:11px;width:7px;height:7px;border-width:1.4px"></span></div><span class="abs" style="left:2260px;top:1129px;font-size:12.6px;color:#3c3c3c">Viewports (Shift+Tab):</span><div class="abs" style="left:2261px;top:1149px;width:223px;height:33px;background:#fff;border:1px solid #d2d2d2;border-radius:6px"><span style="position:absolute;left:10px;top:6px;font-size:13px">---</span><span class="chev" style="left:198px;top:11px;width:7px;height:7px;border-width:1.4px"></span></div><div class="hdr" style="left:2253px;top:1191px;height:19px;font-size:11.5px;padding-top:3px">Selection Filter</div><div class="cb" style="left:2263px;top:1217px"><svg width="16" height="16" style="position:absolute;left:0;top:0"><path d="M4 8.2 L6.8 11 L12 5" fill="none" stroke="#fff" stroke-width="1.5"/></svg></div><span class="cbl" style="left:2282px;top:1217px">All items</span><div class="cb" style="left:2371px;top:1217px;background:#fff;border:1px solid #c8c8c8"></div><span class="cbl" style="left:2390px;top:1217px">Locked items</span><div class="cb" style="left:2263px;top:1238px"><svg width="16" height="16" style="position:absolute;left:0;top:0"><path d="M4 8.2 L6.8 11 L12 5" fill="none" stroke="#fff" stroke-width="1.5"/></svg></div><span class="cbl" style="left:2282px;top:1238px">Footprints</span><div class="cb" style="left:2371px;top:1238px"><svg width="16" height="16" style="position:absolute;left:0;top:0"><path d="M4 8.2 L6.8 11 L12 5" fill="none" stroke="#fff" stroke-width="1.5"/></svg></div><span class="cbl" style="left:2390px;top:1238px">Text</span><div class="cb" style="left:2263px;top:1259px"><svg width="16" height="16" style="position:absolute;left:0;top:0"><path d="M4 8.2 L6.8 11 L12 5" fill="none" stroke="#fff" stroke-width="1.5"/></svg></div><span class="cbl" style="left:2282px;top:1259px">Tracks</span><div class="cb" style="left:2371px;top:1259px"><svg width="16" height="16" style="position:absolute;left:0;top:0"><path d="M4 8.2 L6.8 11 L12 5" fill="none" stroke="#fff" stroke-width="1.5"/></svg></div><span class="cbl" style="left:2390px;top:1259px">Vias</span><div class="cb" style="left:2263px;top:1280px"><svg width="16" height="16" style="position:absolute;left:0;top:0"><path d="M4 8.2 L6.8 11 L12 5" fill="none" stroke="#fff" stroke-width="1.5"/></svg></div><span class="cbl" style="left:2282px;top:1280px">Pads</span><div class="cb" style="left:2371px;top:1280px"><svg width="16" height="16" style="position:absolute;left:0;top:0"><path d="M4 8.2 L6.8 11 L12 5" fill="none" stroke="#fff" stroke-width="1.5"/></svg></div><span class="cbl" style="left:2390px;top:1280px">Graphics</span><div class="cb" style="left:2263px;top:1301px"><svg width="16" height="16" style="position:absolute;left:0;top:0"><path d="M4 8.2 L6.8 11 L12 5" fill="none" stroke="#fff" stroke-width="1.5"/></svg></div><span class="cbl" style="left:2282px;top:1301px">Zones</span><div class="cb" style="left:2371px;top:1301px"><svg width="16" height="16" style="position:absolute;left:0;top:0"><path d="M4 8.2 L6.8 11 L12 5" fill="none" stroke="#fff" stroke-width="1.5"/></svg></div><span class="cbl" style="left:2390px;top:1301px">Rule Areas</span><div class="cb" style="left:2263px;top:1322px"><svg width="16" height="16" style="position:absolute;left:0;top:0"><path d="M4 8.2 L6.8 11 L12 5" fill="none" stroke="#fff" stroke-width="1.5"/></svg></div><span class="cbl" style="left:2282px;top:1322px">Dimensions</span><div class="cb" style="left:2371px;top:1322px"><svg width="16" height="16" style="position:absolute;left:0;top:0"><path d="M4 8.2 L6.8 11 L12 5" fill="none" stroke="#fff" stroke-width="1.5"/></svg></div><span class="cbl" style="left:2390px;top:1322px">Other items</span><div id="msg" class="abs"><span style="left:12px;top:1px">Pads</span><span style="left:76px;top:1px">Vias</span><span style="left:136px;top:1px">Track Segments</span><span style="left:272px;top:1px">Nets</span><span style="left:334px;top:1px">Unrouted</span><span style="left:12px;top:19px">193</span><span style="left:76px;top:19px">54</span><span style="left:136px;top:19px">458</span><span style="left:272px;top:19px">53</span><span style="left:334px;top:19px">0</span></div><div id="status" class="abs"><span style="left:3px">File '/home/kai/projects/pcbs/working/devboard/PCB_DESIGN/devboard.kicad_pcb' saved.</span><span style="left:1261px">Z 5.54</span><span style="left:1346px">X 118.8000  Y 83.4000</span><span style="left:1537px">dx 118.8000  dy 83.4000  dist 145.1516</span><span style="left:1845px">grid 0.1000</span><span style="left:2066px">mm</span><span style="left:2133px">Select item(s)</span><span style="left:2338px">Constrain to H, V, 45</span></div></body></html>
